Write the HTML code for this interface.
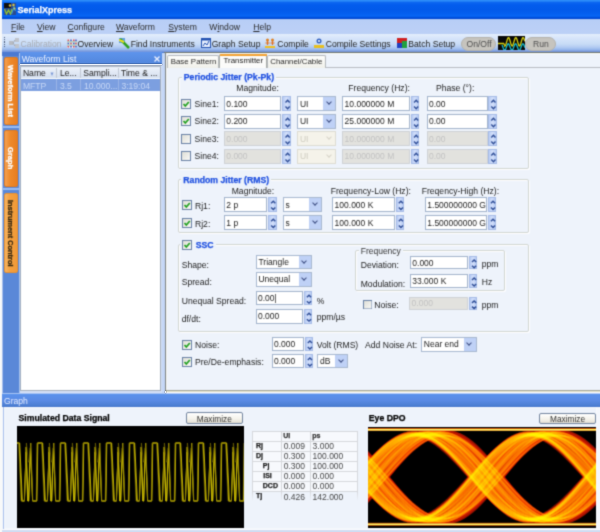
<!DOCTYPE html><html><head><meta charset="utf-8"><style>
*{box-sizing:border-box;margin:0;padding:0}
html,body{width:600px;height:532px;overflow:hidden;background:#eef3fb;font-family:"Liberation Sans",sans-serif;font-size:8.5px;color:#222;position:relative}
.a{position:absolute}
.t{position:absolute;white-space:nowrap;line-height:10px;font-size:8.5px;color:#333}
.tb{position:absolute;background:#fff;border:1px solid #a3b4cc}
.tb span{position:absolute;left:1.3px;line-height:10px;font-size:8.5px;color:#222;white-space:nowrap}
.tb.dis{background:#e2e2de;border-color:#cfd2d6}
.tb.dis span{color:#c2c2c2}
.sp{position:absolute;background:linear-gradient(90deg,#b8ccf4,#d4e0fa 50%,#b8ccf4);border:1px solid #a6bbe6}
.cb{position:absolute;background:#fff;border:1px solid #a8b8d0}
.cb span{position:absolute;left:1.8px;line-height:10px;font-size:8.5px;color:#222;white-space:nowrap}
.cb i{position:absolute;right:0;top:0;width:12px;background:#bfd1f6}
.cb i:after{content:"";position:absolute;left:3.5px;top:3px;width:3px;height:3px;border-right:1.5px solid #3c4c80;border-bottom:1.5px solid #3c4c80;transform:rotate(45deg)}
.cb.dis{background:#f5f3ea;border-color:#dedcd2}
.cb.dis span{color:#cfcdc0}
.cb.dis i{background:#f5f3ea}
.cb.dis i:after{border-color:#d6d4c8}
.ck{position:absolute;border:1px solid #4b6690;background:linear-gradient(135deg,#dcdcd6,#f8f8f6)}
.ck.on:after{content:"";position:absolute;left:2.5px;top:0.5px;width:2.5px;height:5px;border-right:2px solid #22a022;border-bottom:2px solid #22a022;transform:rotate(40deg)}
.gb{position:absolute;border:1px solid #d2d6d2;border-radius:2px;box-shadow:inset 1px 1px 0 #fff,1px 1px 0 #fff}
</style></head><body><svg width="0" height="0" style="position:absolute"><filter id="bl" x="0" y="0" width="100%" height="100%" color-interpolation-filters="sRGB"><feConvolveMatrix order="3" kernelMatrix="0.02768 0.11101 0.02768 0.11101 0.44521 0.11101 0.02768 0.11101 0.02768" edgeMode="duplicate" preserveAlpha="true"/></filter></svg><div style="position:absolute;left:0;top:0;width:600px;height:532px;filter:url(#bl)"><div class="a" style="left:0px;top:0px;width:2px;height:532px;background:#f8f9fa"></div>
<div class="a" style="left:2px;top:0px;width:598px;height:19px;background:linear-gradient(#3090fa 0,#2888f8 1px,#0c66f0 2.5px,#035ced 5px,#025aea 10px,#0460f0 14px,#0866f4 16px,#005ae8 17px,#0048d4 18px,#0048d4 19px)"></div>
<svg class="a" style="left:3.5px;top:3px" width="12" height="12"><rect width="12" height="12" fill="#2a4a90"/><rect width="7" height="5" fill="#101010"/><path d="M0.5,6 L2.5,11 L4.5,7 L6.5,11 L8,6" stroke="#90c030" stroke-width="1.3" fill="none"/><path d="M7.5,11 L10,4 L11.5,8" stroke="#40a0d0" stroke-width="1.1" fill="none"/><circle cx="6" cy="2.5" r="1.2" fill="#e0c040"/><circle cx="9.5" cy="2" r="1.2" fill="#d8c848"/><circle cx="10.5" cy="5.5" r="1" fill="#c8d060"/></svg>
<div class="t" style="left:17.5px;top:5.38px;font-size:9px;font-weight:bold;-webkit-text-stroke:0.25px #fff;color:#fff;">SerialXpress</div>
<div class="a" style="left:2px;top:19px;width:598px;height:15px;background:linear-gradient(#a0bcf0 0,#b8cef6 1px,#bcd0f6 100%)"></div>
<div class="t" style="left:11px;top:22.22px;font-size:8.6px;color:#2a2a2a;"><u>F</u>ile</div>
<div class="t" style="left:37px;top:22.22px;font-size:8.6px;color:#2a2a2a;"><u>V</u>iew</div>
<div class="t" style="left:67.5px;top:22.22px;font-size:8.6px;color:#2a2a2a;"><u>C</u>onfigure</div>
<div class="t" style="left:116px;top:22.22px;font-size:8.6px;color:#2a2a2a;"><u>W</u>aveform</div>
<div class="t" style="left:168.3px;top:22.22px;font-size:8.6px;color:#2a2a2a;"><u>S</u>ystem</div>
<div class="t" style="left:209.3px;top:22.22px;font-size:8.6px;color:#2a2a2a;">W<u>i</u>ndow</div>
<div class="t" style="left:253.3px;top:22.22px;font-size:8.6px;color:#2a2a2a;"><u>H</u>elp</div>
<div class="a" style="left:2px;top:34px;width:598px;height:18px;background:linear-gradient(#e4eefc 0,#d6e4fa 25%,#c8dcf6 55%,#b4ccf2 72%,#98b8ec 86%,#7898dc 96%)"></div>
<div class="a" style="left:2px;top:52px;width:162px;height:4px;background:#4c7ad2"></div>
<div class="a" style="left:164px;top:52px;width:436px;height:1px;background:#6c7470"></div>
<div class="a" style="left:165px;top:53px;width:435px;height:1px;background:#fafaf4"></div>
<div class="a" style="left:4px;top:37.0px;width:1.2px;height:1.2px;background:#4a5a7a"></div>
<div class="a" style="left:4px;top:39.2px;width:1.2px;height:1.2px;background:#4a5a7a"></div>
<div class="a" style="left:4px;top:41.4px;width:1.2px;height:1.2px;background:#4a5a7a"></div>
<div class="a" style="left:4px;top:43.6px;width:1.2px;height:1.2px;background:#4a5a7a"></div>
<div class="a" style="left:4px;top:45.8px;width:1.2px;height:1.2px;background:#4a5a7a"></div>
<svg class="a" style="left:9px;top:38px" width="11" height="10"><rect x="0" y="3" width="4" height="4" fill="#b8bcc4"/><rect x="6" y="0" width="4" height="4" fill="#c0c4cc"/><rect x="6" y="6" width="4" height="4" fill="#c0c4cc"/><path d="M4,5 L6,2 M4,5 L6,8" stroke="#a0a4ac"/></svg>
<div class="t" style="left:20.5px;top:38.92px;font-size:8.6px;color:#a8acb4;">Calibration</div>
<svg class="a" style="left:66.5px;top:38.5px" width="10" height="9"><rect width="10" height="9" fill="#eef0f6"/><g fill="#d04858"><rect x="0.5" y="0.5" width="1.6" height="1.6"/><rect x="6" y="0.5" width="1.6" height="1.6"/><rect x="3.2" y="3.7" width="1.6" height="1.6"/><rect x="8.2" y="3.7" width="1.6" height="1.6"/><rect x="0.5" y="6.9" width="1.6" height="1.6"/><rect x="6" y="6.9" width="1.6" height="1.6"/></g><g fill="#4058c8"><rect x="3.2" y="0.5" width="1.6" height="1.6"/><rect x="8.2" y="0.5" width="1.6" height="1.6"/><rect x="0.5" y="3.7" width="1.6" height="1.6"/><rect x="6" y="3.7" width="1.6" height="1.6"/><rect x="3.2" y="6.9" width="1.6" height="1.6"/><rect x="8.2" y="6.9" width="1.6" height="1.6"/></g><path d="M0,2.9h10M0,6.1h10" stroke="#50a070" stroke-width="0.6"/></svg>
<div class="t" style="left:77.5px;top:38.92px;font-size:8.6px;color:#222;">Overview</div>
<svg class="a" style="left:119px;top:37.5px" width="11" height="11"><rect x="0" y="0" width="6" height="5" fill="#60a0e0"/><path d="M1,1 L10,10" stroke="#30a020" stroke-width="2.5"/><path d="M0,2 L5,4" stroke="#f0e020" stroke-width="2"/></svg>
<div class="t" style="left:130.7px;top:38.92px;font-size:8.6px;color:#222;">Find Instruments</div>
<svg class="a" style="left:200.7px;top:38px" width="10" height="10"><rect width="10" height="10" fill="#2050b0"/><rect x="1" y="2.5" width="8" height="6.5" fill="#e8f0ff"/><path d="M2,8 L4,5 L6,7 L8,3" stroke="#2050b0" stroke-width="1" fill="none"/></svg>
<div class="t" style="left:211.7px;top:38.92px;font-size:8.6px;color:#222;">Graph Setup</div>
<svg class="a" style="left:265px;top:38px" width="10" height="10"><circle cx="2.5" cy="2" r="1.5" fill="#e08020"/><circle cx="7.5" cy="2" r="1.5" fill="#e08020"/><path d="M2.5,3 L2.5,7 M0.5,5 L4.5,5 M7.5,3 L7.5,7 M5.5,5 L9.5,5" stroke="#e07020" stroke-width="1.2"/><rect x="0" y="8" width="10" height="2" fill="#f0c020"/></svg>
<div class="t" style="left:277.3px;top:38.92px;font-size:8.6px;color:#222;">Compile</div>
<svg class="a" style="left:314.3px;top:37.5px" width="10" height="11"><circle cx="5" cy="3" r="2.5" fill="#3060c0"/><rect x="0" y="7" width="10" height="3" fill="#e8c020"/><circle cx="5" cy="3" r="1" fill="#fff"/></svg>
<div class="t" style="left:325.7px;top:38.92px;font-size:8.6px;color:#222;">Compile Settings</div>
<svg class="a" style="left:396.7px;top:38px" width="10" height="10"><rect width="10" height="10" fill="#d02020"/><rect x="0" y="5" width="5" height="5" fill="#2040c0"/><rect x="5" y="3" width="5" height="7" fill="#20a040"/></svg>
<div class="t" style="left:408.3px;top:38.92px;font-size:8.6px;color:#222;">Batch Setup</div>
<div class="a" style="left:461.3px;top:36.5px;width:35px;height:14px;background:#c6c4be;border-radius:7px;border:1px solid #b4b2ac"></div>
<div class="t" style="left:466.5px;top:38.92px;font-size:8.6px;color:#505050;">On/Off</div>
<svg class="a" style="left:497.5px;top:36px" width="27" height="14"><rect width="27" height="14" fill="#080808"/><path d="M0,7.5 L5.5,7.5 L6.8,9.5 L6.8,10.0 L7.3,9.7 L7.8,8.7 L8.3,7.1 L8.8,5.3 L9.3,3.6 L9.8,2.3 L10.3,1.7 L10.8,1.7 L11.3,2.6 L11.8,4.0 L12.3,5.7 L12.8,7.5 L13.3,8.9 L13.8,9.8 L14.3,10.0 L14.8,9.4 L15.3,8.1 L15.8,6.4 L16.3,4.6 L16.8,3.1 L17.3,2.0 L17.8,1.6 L18.3,2.0 L18.8,3.1 L19.3,4.6 L19.8,6.4 L20.3,8.1 L20.8,9.4 L21.3,10.0 L21.8,9.8 L22.3,8.9 L22.8,7.5 L23.3,5.7 L23.8,4.0 L24.3,2.6 L24.8,1.7 L25.3,1.7 L25.8,2.3 L26.3,3.6 L26.8,5.3" stroke="#d8d010" stroke-width="1.3" fill="none"/><path d="M4.0,8.9 L4.5,10.1 L5.0,11.5 L5.5,12.8 L6.0,13.7 L6.5,14.2 L7.0,14.1 L7.5,13.4 L8.0,12.3 L8.5,10.9 L9.0,9.6 L9.5,8.5 L10.0,7.9 L10.5,7.8 L11.0,8.4 L11.5,9.4 L12.0,10.7 L12.5,12.0 L13.0,13.2 L13.5,14.0 L14.0,14.2 L14.5,13.8 L15.0,13.0 L15.5,11.8 L16.0,10.4 L16.5,9.1 L17.0,8.2 L17.5,7.8 L18.0,8.0 L18.5,8.7 L19.0,9.9 L19.5,11.2 L20.0,12.5 L20.5,13.6 L21.0,14.1 L21.5,14.1 L22.0,13.6 L22.5,12.5 L23.0,11.2 L23.5,9.9 L24.0,8.7 L24.5,8.0 L25.0,7.8 L25.5,8.2 L26.0,9.1 L26.5,10.4 L27.0,11.8" stroke="#18c0d0" stroke-width="1.3" fill="none"/></svg>
<div class="a" style="left:525px;top:36.5px;width:31.3px;height:14px;background:#c6c4be;border-radius:7px;border:1px solid #b4b2ac"></div>
<div class="t" style="left:533px;top:38.92px;font-size:8.6px;color:#505050;">Run</div>
<div class="a" style="left:2px;top:56px;width:17px;height:337px;background:#5a88d8"></div>
<div class="a" style="left:2px;top:56px;width:1px;height:337px;background:#a8c0ec"></div>
<div class="a" style="left:19px;top:53px;width:1px;height:340px;background:#a4c2f2"></div>
<div class="a" style="left:4px;top:56.8px;width:13.5px;height:68.4px;background:linear-gradient(90deg,#f4a050,#ee8a2c 40%,#e87e20);border-radius:2px;border:1px solid #e07a20"></div>
<div class="a" style="left:4px;top:56.8px;width:13.5px;height:68.4px;writing-mode:vertical-rl;display:flex;align-items:center;justify-content:center;font-size:7.6px;font-weight:bold;-webkit-text-stroke:0.3px #fff;color:#fff;line-height:13px;white-space:nowrap">Waveform List</div>
<div class="a" style="left:2px;top:126px;width:17px;height:2px;background:#98bcf2"></div>
<div class="a" style="left:4px;top:129.8px;width:13.5px;height:57.19999999999999px;background:linear-gradient(90deg,#f4a050,#ee8a2c 40%,#e87e20);border-radius:2px;border:1px solid #e07a20"></div>
<div class="a" style="left:4px;top:129.8px;width:13.5px;height:57.19999999999999px;writing-mode:vertical-rl;display:flex;align-items:center;justify-content:center;font-size:7.6px;font-weight:bold;-webkit-text-stroke:0.3px #fff;color:#fff;line-height:13px;white-space:nowrap">Graph</div>
<div class="a" style="left:2px;top:188px;width:17px;height:2px;background:#98bcf2"></div>
<div class="a" style="left:4px;top:192.5px;width:13.5px;height:80.80000000000001px;background:linear-gradient(90deg,#f8b460,#f4a040 40%,#f09a38);border-radius:2px;border:1px solid #e89030"></div>
<div class="a" style="left:4px;top:192.5px;width:13.5px;height:80.80000000000001px;writing-mode:vertical-rl;display:flex;align-items:center;justify-content:center;font-size:7.4px;font-weight:bold;-webkit-text-stroke:0.3px #3a2a10;color:#3a2a10;line-height:13px;white-space:nowrap">Instrument Control</div>
<div class="a" style="left:20px;top:52px;width:142px;height:12px;background:linear-gradient(#5e94ec,#5286dc)"></div>
<div class="t" style="left:21.7px;top:54.02px;font-size:8.6px;color:#eef3ff;">Waveform List</div>
<svg class="a" style="left:154px;top:55.5px" width="6" height="6"><path d="M0.5,0.5 L5.5,5.5 M5.5,0.5 L0.5,5.5" stroke="#e8eeff" stroke-width="1.4"/></svg>
<div class="a" style="left:20px;top:64.5px;width:142px;height:328.5px;background:#d4e0f6"></div>
<div class="a" style="left:20.3px;top:65.5px;width:140.5px;height:325.5px;background:#fff;border:1px solid #a4aebc"></div>
<div class="a" style="left:21.3px;top:66.5px;width:138.5px;height:11.5px;background:linear-gradient(#eef3fb,#d4deee)"></div>
<div class="a" style="left:55.7px;top:67.5px;width:1px;height:10px;background:#c0c8d4"></div>
<div class="a" style="left:80.4px;top:67.5px;width:1px;height:10px;background:#c0c8d4"></div>
<div class="a" style="left:117.8px;top:67.5px;width:1px;height:10px;background:#c0c8d4"></div>
<div class="t" style="left:22.9px;top:68.32px;font-size:8.6px;color:#222;">Name</div>
<svg class="a" style="left:49.5px;top:71.5px" width="4" height="5"><path d="M0.5,0.5 L3.5,0.5 L2,4z" fill="#7c9ad8"/></svg>
<div class="t" style="left:59.9px;top:68.32px;font-size:8.6px;color:#222;">Le...</div>
<div class="t" style="left:83.3px;top:68.32px;font-size:8.6px;color:#222;">Sampli...</div>
<div class="t" style="left:121px;top:68.32px;font-size:8.6px;color:#222;">Time &amp; ...</div>
<div class="a" style="left:21.3px;top:78.5px;width:138.5px;height:12px;background:#7c9fe0"></div>
<div class="a" style="left:55.7px;top:79px;width:1px;height:11px;background:#9ab4e6"></div>
<div class="a" style="left:80.4px;top:79px;width:1px;height:11px;background:#9ab4e6"></div>
<div class="a" style="left:117.8px;top:79px;width:1px;height:11px;background:#9ab4e6"></div>
<div class="t" style="left:22.9px;top:80.62px;font-size:8.6px;color:#c8d8f6;">MFTP</div>
<div class="t" style="left:59.9px;top:80.62px;font-size:8.6px;color:#c8d8f6;">3.5</div>
<div class="t" style="left:84px;top:80.62px;font-size:8.6px;color:#c8d8f6;">10.000...</div>
<div class="t" style="left:121.4px;top:80.62px;font-size:8.6px;color:#c8d8f6;">3:19:04</div>
<div class="a" style="left:162px;top:53px;width:2.5px;height:340px;background:#c4d6f6"></div>
<div class="a" style="left:164.5px;top:52px;width:1px;height:339px;background:#7c8284"></div>
<div class="a" style="left:165.5px;top:54px;width:434.5px;height:339px;background:#eef3fb"></div>
<div class="a" style="left:166.5px;top:67px;width:433.5px;height:1px;background:#b8bcc2"></div>
<div class="a" style="left:166px;top:53px;width:1px;height:337px;background:#f4f4ee"></div>
<div class="a" style="left:165.5px;top:390px;width:434.5px;height:1px;background:#a4a698"></div>
<div class="a" style="left:165.5px;top:391px;width:434.5px;height:1px;background:#e2e2cc"></div>
<div class="a" style="left:165.5px;top:392px;width:434.5px;height:1px;background:#fafafa"></div>
<div class="a" style="left:167px;top:55px;width:52px;height:12.5px;background:linear-gradient(#fdfdfb,#f0f0ea);border:1px solid #b4b8bc;border-bottom:none;border-radius:2px 2px 0 0"></div>
<div class="t" style="left:170.7px;top:56.76px;font-size:7.9px;color:#2a2a2a;">Base Pattern</div>
<div class="a" style="left:219px;top:54px;width:48px;height:14.3px;background:#fbfbfa;border:1px solid #a8aca8;border-bottom:none;border-radius:2px 2px 0 0"></div>
<div class="a" style="left:219.5px;top:53.8px;width:47px;height:2px;background:#f2a030"></div>
<div class="t" style="left:223.5px;top:56.26px;font-size:7.9px;color:#1a1a1a;">Transmitter</div>
<div class="a" style="left:267px;top:55px;width:58.5px;height:12.5px;background:linear-gradient(#fdfdfb,#f0f0ea);border:1px solid #b4b8bc;border-bottom:none;border-radius:2px 2px 0 0"></div>
<div class="t" style="left:270.2px;top:56.76px;font-size:7.9px;color:#2a2a2a;">Channel/Cable</div>
<div class="gb" style="left:178px;top:77px;width:351px;height:92px"></div>
<div class="t" style="left:181.8px;top:72.29px;font-size:8.7px;font-weight:bold;-webkit-text-stroke:0.25px #1f50e0;color:#1f50e0;"><span style="background:#eef3fb;padding:0 2px">Periodic Jitter (Pk-Pk)</span></div>
<div class="t" style="left:236.3px;top:83.42px;font-size:8.6px;color:#222;">Magnitude:</div>
<div class="t" style="left:348.3px;top:83.42px;font-size:8.6px;color:#222;">Frequency (Hz):</div>
<div class="t" style="left:436px;top:83.42px;font-size:8.6px;color:#222;">Phase (°):</div>
<svg class="a" style="left:181px;top:98.7px" width="10" height="10"><defs><linearGradient id="cg" x1="0" y1="0" x2="1" y2="1"><stop offset="0" stop-color="#dcdcd4"/><stop offset="1" stop-color="#fafaf8"/></linearGradient></defs><rect x="0.5" y="0.5" width="9" height="9" fill="url(#cg)" stroke="#6a82a6" stroke-width="1"/><path d="M2.50,5.00 L4.30,7.00 L7.80,3.00" stroke="#1f9f1f" stroke-width="1.7" fill="none"/></svg>
<div class="t" style="left:194.5px;top:98.82px;font-size:8.6px;color:#222;">Sine1:</div>
<div class="tb" style="left:224px;top:96px;width:57.3px;height:15px"><span style="top:1.5px">0.100</span></div>
<div class="sp" style="left:281.5px;top:96px;width:9.2px;height:15px"><svg width="9.2" height="15" style="position:absolute;left:0;top:0"><path d="M2.50,5.40 L4.60,3.30 L6.70,5.40 M2.50,9.60 L4.60,11.70 L6.70,9.60" stroke="#2d4c96" stroke-width="1.4" fill="none"/></svg></div>
<div class="cb" style="left:297.1px;top:96px;width:39.4px;height:15px"><span style="top:1.5px">UI</span><i style="height:13px"></i></div>
<div class="tb" style="left:342.3px;top:96px;width:67.7px;height:15px"><span style="top:1.5px">10.000000 M</span></div>
<div class="sp" style="left:410.5px;top:96px;width:8.3px;height:15px"><svg width="8.3" height="15" style="position:absolute;left:0;top:0"><path d="M2.05,5.40 L4.15,3.30 L6.25,5.40 M2.05,9.60 L4.15,11.70 L6.25,9.60" stroke="#2d4c96" stroke-width="1.4" fill="none"/></svg></div>
<div class="tb" style="left:426.7px;top:96px;width:61px;height:15px"><span style="top:1.5px">0.00</span></div>
<div class="sp" style="left:488.3px;top:96px;width:8.8px;height:15px"><svg width="8.8" height="15" style="position:absolute;left:0;top:0"><path d="M2.30,5.40 L4.40,3.30 L6.50,5.40 M2.30,9.60 L4.40,11.70 L6.50,9.60" stroke="#2d4c96" stroke-width="1.4" fill="none"/></svg></div>
<svg class="a" style="left:181px;top:116.3px" width="10" height="10"><defs><linearGradient id="cg" x1="0" y1="0" x2="1" y2="1"><stop offset="0" stop-color="#dcdcd4"/><stop offset="1" stop-color="#fafaf8"/></linearGradient></defs><rect x="0.5" y="0.5" width="9" height="9" fill="url(#cg)" stroke="#6a82a6" stroke-width="1"/><path d="M2.50,5.00 L4.30,7.00 L7.80,3.00" stroke="#1f9f1f" stroke-width="1.7" fill="none"/></svg>
<div class="t" style="left:194.5px;top:116.42px;font-size:8.6px;color:#222;">Sine2:</div>
<div class="tb" style="left:224px;top:113.6px;width:57.3px;height:15px"><span style="top:1.5px">0.200</span></div>
<div class="sp" style="left:281.5px;top:113.6px;width:9.2px;height:15px"><svg width="9.2" height="15" style="position:absolute;left:0;top:0"><path d="M2.50,5.40 L4.60,3.30 L6.70,5.40 M2.50,9.60 L4.60,11.70 L6.70,9.60" stroke="#2d4c96" stroke-width="1.4" fill="none"/></svg></div>
<div class="cb" style="left:297.1px;top:113.6px;width:39.4px;height:15px"><span style="top:1.5px">UI</span><i style="height:13px"></i></div>
<div class="tb" style="left:342.3px;top:113.6px;width:67.7px;height:15px"><span style="top:1.5px">25.000000 M</span></div>
<div class="sp" style="left:410.5px;top:113.6px;width:8.3px;height:15px"><svg width="8.3" height="15" style="position:absolute;left:0;top:0"><path d="M2.05,5.40 L4.15,3.30 L6.25,5.40 M2.05,9.60 L4.15,11.70 L6.25,9.60" stroke="#2d4c96" stroke-width="1.4" fill="none"/></svg></div>
<div class="tb" style="left:426.7px;top:113.6px;width:61px;height:15px"><span style="top:1.5px">0.00</span></div>
<div class="sp" style="left:488.3px;top:113.6px;width:8.8px;height:15px"><svg width="8.8" height="15" style="position:absolute;left:0;top:0"><path d="M2.30,5.40 L4.40,3.30 L6.50,5.40 M2.30,9.60 L4.40,11.70 L6.50,9.60" stroke="#2d4c96" stroke-width="1.4" fill="none"/></svg></div>
<svg class="a" style="left:181px;top:133.89999999999998px" width="10" height="10"><defs><linearGradient id="cg" x1="0" y1="0" x2="1" y2="1"><stop offset="0" stop-color="#dcdcd4"/><stop offset="1" stop-color="#fafaf8"/></linearGradient></defs><rect x="0.5" y="0.5" width="9" height="9" fill="url(#cg)" stroke="#6a82a6" stroke-width="1"/></svg>
<div class="t" style="left:194.5px;top:134.02px;font-size:8.6px;color:#222;">Sine3:</div>
<div class="tb dis" style="left:224px;top:131.2px;width:57.3px;height:15px"><span style="top:1.5px">0.000</span></div>
<div class="sp" style="left:281.5px;top:131.2px;width:9.2px;height:15px"><svg width="9.2" height="15" style="position:absolute;left:0;top:0"><path d="M2.50,5.40 L4.60,3.30 L6.70,5.40 M2.50,9.60 L4.60,11.70 L6.70,9.60" stroke="#2d4c96" stroke-width="1.4" fill="none"/></svg></div>
<div class="cb dis" style="left:297.1px;top:131.2px;width:39.4px;height:15px"><span style="top:1.5px">UI</span><i style="height:13px"></i></div>
<div class="tb dis" style="left:342.3px;top:131.2px;width:67.7px;height:15px"><span style="top:1.5px">10.000000 M</span></div>
<div class="sp" style="left:410.5px;top:131.2px;width:8.3px;height:15px"><svg width="8.3" height="15" style="position:absolute;left:0;top:0"><path d="M2.05,5.40 L4.15,3.30 L6.25,5.40 M2.05,9.60 L4.15,11.70 L6.25,9.60" stroke="#2d4c96" stroke-width="1.4" fill="none"/></svg></div>
<div class="tb dis" style="left:426.7px;top:131.2px;width:61px;height:15px"><span style="top:1.5px">0.00</span></div>
<div class="sp" style="left:488.3px;top:131.2px;width:8.8px;height:15px"><svg width="8.8" height="15" style="position:absolute;left:0;top:0"><path d="M2.30,5.40 L4.40,3.30 L6.50,5.40 M2.30,9.60 L4.40,11.70 L6.50,9.60" stroke="#2d4c96" stroke-width="1.4" fill="none"/></svg></div>
<svg class="a" style="left:181px;top:151.29999999999998px" width="10" height="10"><defs><linearGradient id="cg" x1="0" y1="0" x2="1" y2="1"><stop offset="0" stop-color="#dcdcd4"/><stop offset="1" stop-color="#fafaf8"/></linearGradient></defs><rect x="0.5" y="0.5" width="9" height="9" fill="url(#cg)" stroke="#6a82a6" stroke-width="1"/></svg>
<div class="t" style="left:194.5px;top:151.42px;font-size:8.6px;color:#222;">Sine4:</div>
<div class="tb dis" style="left:224px;top:148.6px;width:57.3px;height:15px"><span style="top:1.5px">0.000</span></div>
<div class="sp" style="left:281.5px;top:148.6px;width:9.2px;height:15px"><svg width="9.2" height="15" style="position:absolute;left:0;top:0"><path d="M2.50,5.40 L4.60,3.30 L6.70,5.40 M2.50,9.60 L4.60,11.70 L6.70,9.60" stroke="#2d4c96" stroke-width="1.4" fill="none"/></svg></div>
<div class="cb dis" style="left:297.1px;top:148.6px;width:39.4px;height:15px"><span style="top:1.5px">UI</span><i style="height:13px"></i></div>
<div class="tb dis" style="left:342.3px;top:148.6px;width:67.7px;height:15px"><span style="top:1.5px">10.000000 M</span></div>
<div class="sp" style="left:410.5px;top:148.6px;width:8.3px;height:15px"><svg width="8.3" height="15" style="position:absolute;left:0;top:0"><path d="M2.05,5.40 L4.15,3.30 L6.25,5.40 M2.05,9.60 L4.15,11.70 L6.25,9.60" stroke="#2d4c96" stroke-width="1.4" fill="none"/></svg></div>
<div class="tb dis" style="left:426.7px;top:148.6px;width:61px;height:15px"><span style="top:1.5px">0.00</span></div>
<div class="sp" style="left:488.3px;top:148.6px;width:8.8px;height:15px"><svg width="8.8" height="15" style="position:absolute;left:0;top:0"><path d="M2.30,5.40 L4.40,3.30 L6.50,5.40 M2.30,9.60 L4.40,11.70 L6.50,9.60" stroke="#2d4c96" stroke-width="1.4" fill="none"/></svg></div>
<div class="gb" style="left:178px;top:179px;width:351px;height:54px"></div>
<div class="t" style="left:181.3px;top:174.99px;font-size:8.7px;font-weight:bold;-webkit-text-stroke:0.25px #1f50e0;color:#1f50e0;"><span style="background:#eef3fb;padding:0 2px">Random Jitter (RMS)</span></div>
<div class="t" style="left:231.7px;top:185.52px;font-size:8.6px;color:#222;">Magnitude:</div>
<div class="t" style="left:330.7px;top:185.52px;font-size:8.6px;color:#222;">Frequency-Low (Hz):</div>
<div class="t" style="left:421.7px;top:185.52px;font-size:8.6px;color:#222;">Freqency-High (Hz):</div>
<svg class="a" style="left:182px;top:200.4px" width="10" height="10"><defs><linearGradient id="cg" x1="0" y1="0" x2="1" y2="1"><stop offset="0" stop-color="#dcdcd4"/><stop offset="1" stop-color="#fafaf8"/></linearGradient></defs><rect x="0.5" y="0.5" width="9" height="9" fill="url(#cg)" stroke="#6a82a6" stroke-width="1"/><path d="M2.50,5.00 L4.30,7.00 L7.80,3.00" stroke="#1f9f1f" stroke-width="1.7" fill="none"/></svg>
<div class="t" style="left:195px;top:200.92px;font-size:8.6px;color:#222;">Rj1:</div>
<div class="tb" style="left:224px;top:197.4px;width:43px;height:14.8px"><span style="top:1.4px">2 p</span></div>
<div class="sp" style="left:268.2px;top:197.4px;width:8.5px;height:14.8px"><svg width="8.5" height="14.8" style="position:absolute;left:0;top:0"><path d="M2.15,5.33 L4.25,3.26 L6.35,5.33 M2.15,9.47 L4.25,11.54 L6.35,9.47" stroke="#2d4c96" stroke-width="1.4" fill="none"/></svg></div>
<div class="cb" style="left:282.7px;top:197.4px;width:39.6px;height:14.8px"><span style="top:1.4px">s</span><i style="height:12.8px"></i></div>
<div class="tb" style="left:332.3px;top:197.4px;width:62.8px;height:14.8px"><span style="top:1.4px">100.000 K</span></div>
<div class="sp" style="left:396px;top:197.4px;width:7.8px;height:14.8px"><svg width="7.8" height="14.8" style="position:absolute;left:0;top:0"><path d="M1.80,5.33 L3.90,3.26 L6.00,5.33 M1.80,9.47 L3.90,11.54 L6.00,9.47" stroke="#2d4c96" stroke-width="1.4" fill="none"/></svg></div>
<div class="tb" style="left:425px;top:197.4px;width:61.8px;height:14.8px"><span style="top:1.4px">1.500000000 G</span></div>
<div class="sp" style="left:488.2px;top:197.4px;width:8px;height:14.8px"><svg width="8" height="14.8" style="position:absolute;left:0;top:0"><path d="M1.90,5.33 L4.00,3.26 L6.10,5.33 M1.90,9.47 L4.00,11.54 L6.10,9.47" stroke="#2d4c96" stroke-width="1.4" fill="none"/></svg></div>
<svg class="a" style="left:182px;top:218.2px" width="10" height="10"><defs><linearGradient id="cg" x1="0" y1="0" x2="1" y2="1"><stop offset="0" stop-color="#dcdcd4"/><stop offset="1" stop-color="#fafaf8"/></linearGradient></defs><rect x="0.5" y="0.5" width="9" height="9" fill="url(#cg)" stroke="#6a82a6" stroke-width="1"/><path d="M2.50,5.00 L4.30,7.00 L7.80,3.00" stroke="#1f9f1f" stroke-width="1.7" fill="none"/></svg>
<div class="t" style="left:195px;top:218.72px;font-size:8.6px;color:#222;">Rj2:</div>
<div class="tb" style="left:224px;top:215.2px;width:43px;height:14.8px"><span style="top:1.4px">1 p</span></div>
<div class="sp" style="left:268.2px;top:215.2px;width:8.5px;height:14.8px"><svg width="8.5" height="14.8" style="position:absolute;left:0;top:0"><path d="M2.15,5.33 L4.25,3.26 L6.35,5.33 M2.15,9.47 L4.25,11.54 L6.35,9.47" stroke="#2d4c96" stroke-width="1.4" fill="none"/></svg></div>
<div class="cb" style="left:282.7px;top:215.2px;width:39.6px;height:14.8px"><span style="top:1.4px">s</span><i style="height:12.8px"></i></div>
<div class="tb" style="left:332.3px;top:215.2px;width:62.8px;height:14.8px"><span style="top:1.4px">100.000 K</span></div>
<div class="sp" style="left:396px;top:215.2px;width:7.8px;height:14.8px"><svg width="7.8" height="14.8" style="position:absolute;left:0;top:0"><path d="M1.80,5.33 L3.90,3.26 L6.00,5.33 M1.80,9.47 L3.90,11.54 L6.00,9.47" stroke="#2d4c96" stroke-width="1.4" fill="none"/></svg></div>
<div class="tb" style="left:425px;top:215.2px;width:61.8px;height:14.8px"><span style="top:1.4px">1.500000000 G</span></div>
<div class="sp" style="left:488.2px;top:215.2px;width:8px;height:14.8px"><svg width="8" height="14.8" style="position:absolute;left:0;top:0"><path d="M1.90,5.33 L4.00,3.26 L6.10,5.33 M1.90,9.47 L4.00,11.54 L6.10,9.47" stroke="#2d4c96" stroke-width="1.4" fill="none"/></svg></div>
<div class="gb" style="left:178px;top:244px;width:351px;height:88px"></div>
<div class="a" style="left:180px;top:240px;width:36px;height:9.5px;background:#eef3fb"></div>
<svg class="a" style="left:182.3px;top:239.5px" width="10" height="10"><defs><linearGradient id="cg" x1="0" y1="0" x2="1" y2="1"><stop offset="0" stop-color="#dcdcd4"/><stop offset="1" stop-color="#fafaf8"/></linearGradient></defs><rect x="0.5" y="0.5" width="9" height="9" fill="url(#cg)" stroke="#6a82a6" stroke-width="1"/><path d="M2.50,5.00 L4.30,7.00 L7.80,3.00" stroke="#1f9f1f" stroke-width="1.7" fill="none"/></svg>
<div class="t" style="left:195.7px;top:239.99px;font-size:8.7px;font-weight:bold;-webkit-text-stroke:0.25px #1f50e0;color:#1f50e0;">SSC</div>
<div class="t" style="left:181.7px;top:260.22px;font-size:8.6px;color:#222;">Shape:</div>
<div class="cb" style="left:255.7px;top:255px;width:56px;height:14.3px"><span style="top:1.2px">Triangle</span><i style="height:12.3px"></i></div>
<div class="t" style="left:181.7px;top:276.82px;font-size:8.6px;color:#222;">Spread:</div>
<div class="cb" style="left:255.7px;top:272.3px;width:56px;height:14.3px"><span style="top:1.2px">Unequal</span><i style="height:12.3px"></i></div>
<div class="t" style="left:181.7px;top:295.82px;font-size:8.6px;color:#222;">Unequal Spread:</div>
<div class="tb" style="left:255.7px;top:290.7px;width:47.8px;height:14.3px"><span style="top:1.2px">0.00|</span></div>
<div class="sp" style="left:304.3px;top:290.7px;width:8px;height:14.3px"><svg width="8" height="14.3" style="position:absolute;left:0;top:0"><path d="M1.90,5.15 L4.00,3.15 L6.10,5.15 M1.90,9.15 L4.00,11.15 L6.10,9.15" stroke="#2d4c96" stroke-width="1.4" fill="none"/></svg></div>
<div class="t" style="left:316.7px;top:295.82px;font-size:8.6px;color:#222;">%</div>
<div class="t" style="left:181.7px;top:313.52px;font-size:8.6px;color:#222;">df/dt:</div>
<div class="tb" style="left:255.7px;top:309.3px;width:47.8px;height:14.3px"><span style="top:1.2px">0.000</span></div>
<div class="sp" style="left:304.3px;top:309.3px;width:8px;height:14.3px"><svg width="8" height="14.3" style="position:absolute;left:0;top:0"><path d="M1.90,5.15 L4.00,3.15 L6.10,5.15 M1.90,9.15 L4.00,11.15 L6.10,9.15" stroke="#2d4c96" stroke-width="1.4" fill="none"/></svg></div>
<div class="t" style="left:316.7px;top:312.22px;font-size:8.6px;color:#222;">ppm/µs</div>
<div class="gb" style="left:355px;top:250px;width:150px;height:41px"></div>
<div class="t" style="left:358.7px;top:245.75px;font-size:8.5px;color:#333;"><span style="background:#eef3fb;padding:0 2px">Frequency</span></div>
<div class="t" style="left:360.7px;top:260.22px;font-size:8.6px;color:#222;">Deviation:</div>
<div class="tb" style="left:410px;top:255.7px;width:58.3px;height:13.8px"><span style="top:0.9px">0.000</span></div>
<div class="sp" style="left:469.3px;top:255.7px;width:8.2px;height:13.8px"><svg width="8.2" height="13.8" style="position:absolute;left:0;top:0"><path d="M2.00,4.97 L4.10,3.04 L6.20,4.97 M2.00,8.83 L4.10,10.76 L6.20,8.83" stroke="#2d4c96" stroke-width="1.4" fill="none"/></svg></div>
<div class="t" style="left:481.7px;top:258.62px;font-size:8.6px;color:#222;">ppm</div>
<div class="t" style="left:360.7px;top:278.52px;font-size:8.6px;color:#222;">Modulation:</div>
<div class="tb" style="left:410px;top:274.3px;width:58.3px;height:14px"><span style="top:1.0px">33.000 K</span></div>
<div class="sp" style="left:469.3px;top:274.3px;width:8.2px;height:14px"><svg width="8.2" height="14" style="position:absolute;left:0;top:0"><path d="M2.00,5.04 L4.10,3.08 L6.20,5.04 M2.00,8.96 L4.10,10.92 L6.20,8.96" stroke="#2d4c96" stroke-width="1.4" fill="none"/></svg></div>
<div class="t" style="left:481.7px;top:276.72px;font-size:8.6px;color:#222;">Hz</div>
<svg class="a" style="left:362.7px;top:299.7px" width="9.5" height="9.5"><defs><linearGradient id="cg" x1="0" y1="0" x2="1" y2="1"><stop offset="0" stop-color="#dcdcd4"/><stop offset="1" stop-color="#fafaf8"/></linearGradient></defs><rect x="0.5" y="0.5" width="8.5" height="8.5" fill="url(#cg)" stroke="#6a82a6" stroke-width="1"/></svg>
<div class="t" style="left:374.3px;top:299.52px;font-size:8.6px;color:#222;">Noise:</div>
<div class="tb dis" style="left:409.3px;top:296.7px;width:59px;height:13.5px"><span style="top:0.8px">0.000</span></div>
<div class="sp" style="left:469.3px;top:296.7px;width:8.2px;height:13.5px"><svg width="8.2" height="13.5" style="position:absolute;left:0;top:0"><path d="M2.00,4.86 L4.10,2.97 L6.20,4.86 M2.00,8.64 L4.10,10.53 L6.20,8.64" stroke="#2d4c96" stroke-width="1.4" fill="none"/></svg></div>
<div class="t" style="left:481.7px;top:299.52px;font-size:8.6px;color:#222;">ppm</div>
<svg class="a" style="left:181.5px;top:339.7px" width="10" height="10"><defs><linearGradient id="cg" x1="0" y1="0" x2="1" y2="1"><stop offset="0" stop-color="#dcdcd4"/><stop offset="1" stop-color="#fafaf8"/></linearGradient></defs><rect x="0.5" y="0.5" width="9" height="9" fill="url(#cg)" stroke="#6a82a6" stroke-width="1"/><path d="M2.50,5.00 L4.30,7.00 L7.80,3.00" stroke="#1f9f1f" stroke-width="1.7" fill="none"/></svg>
<div class="t" style="left:195px;top:340.22px;font-size:8.6px;color:#222;">Noise:</div>
<div class="tb" style="left:271.7px;top:336.7px;width:32.6px;height:14px"><span style="top:1.0px">0.000</span></div>
<div class="sp" style="left:305px;top:336.7px;width:7.8px;height:14px"><svg width="7.8" height="14" style="position:absolute;left:0;top:0"><path d="M1.80,5.04 L3.90,3.08 L6.00,5.04 M1.80,8.96 L3.90,10.92 L6.00,8.96" stroke="#2d4c96" stroke-width="1.4" fill="none"/></svg></div>
<div class="t" style="left:316.7px;top:340.22px;font-size:8.6px;color:#222;">Volt (RMS)</div>
<div class="t" style="left:365px;top:340.22px;font-size:8.6px;color:#222;">Add Noise At:</div>
<div class="cb" style="left:421px;top:337.3px;width:55.7px;height:14.4px"><span style="top:1.2px">Near end</span><i style="height:12.4px"></i></div>
<svg class="a" style="left:181.5px;top:356.7px" width="10" height="10"><defs><linearGradient id="cg" x1="0" y1="0" x2="1" y2="1"><stop offset="0" stop-color="#dcdcd4"/><stop offset="1" stop-color="#fafaf8"/></linearGradient></defs><rect x="0.5" y="0.5" width="9" height="9" fill="url(#cg)" stroke="#6a82a6" stroke-width="1"/><path d="M2.50,5.00 L4.30,7.00 L7.80,3.00" stroke="#1f9f1f" stroke-width="1.7" fill="none"/></svg>
<div class="t" style="left:195px;top:357.22px;font-size:8.6px;color:#222;">Pre/De-emphasis:</div>
<div class="tb" style="left:271.7px;top:354.3px;width:32.6px;height:14px"><span style="top:1.0px">0.000</span></div>
<div class="sp" style="left:305px;top:354.3px;width:7.8px;height:14px"><svg width="7.8" height="14" style="position:absolute;left:0;top:0"><path d="M1.80,5.04 L3.90,3.08 L6.00,5.04 M1.80,8.96 L3.90,10.92 L6.00,8.96" stroke="#2d4c96" stroke-width="1.4" fill="none"/></svg></div>
<div class="cb" style="left:317.3px;top:354.3px;width:31px;height:14px"><span style="top:1.0px">dB</span><i style="height:12px"></i></div>
<div class="a" style="left:2px;top:392.5px;width:164px;height:1.5px;background:#a8c4f4"></div>
<div class="a" style="left:164px;top:393px;width:436px;height:1px;background:#b4ccf8"></div>
<div class="a" style="left:2px;top:394px;width:598px;height:12.5px;background:linear-gradient(#5a92ec,#5a8ae4 50%,#4e80d4 85%,#4676cc)"></div>
<div class="t" style="left:4px;top:395.72px;font-size:8.6px;color:#e4ecff;">Graph</div>
<div class="a" style="left:2px;top:406.5px;width:598px;height:125.5px;background:#f4f7fc"></div>
<div class="a" style="left:4.5px;top:407.5px;width:591.5px;height:120.5px;background:#eef3fb"></div>
<div class="t" style="left:18.5px;top:413.29px;font-size:8.7px;font-weight:bold;-webkit-text-stroke:0.25px #000;color:#000;">Simulated Data Signal</div>
<div class="a" style="left:185.5px;top:412.4px;width:57.5px;height:11.400000000000034px;background:linear-gradient(#fefefe,#f4f2ea 60%,#e2ded2);border:1px solid #7486a0;border-radius:2px"></div>
<div class="t" style="left:194.25px;top:413.72px;font-size:8.3px;color:#333;width:40px;text-align:center">Maximize</div>
<div class="a" style="left:539.2px;top:412.8px;width:56.799999999999955px;height:11.199999999999989px;background:linear-gradient(#fefefe,#f4f2ea 60%,#e2ded2);border:1px solid #7486a0;border-radius:2px"></div>
<div class="t" style="left:547.6px;top:413.92px;font-size:8.3px;color:#333;width:40px;text-align:center">Maximize</div>
<div class="t" style="left:368.8px;top:413.29px;font-size:8.7px;font-weight:bold;-webkit-text-stroke:0.25px #000;color:#000;">Eye DPO</div>
<div class="a" style="left:2.5px;top:406.5px;width:1px;height:125.5px;background:#a8c0ec"></div>
<div class="a" style="left:2px;top:528.5px;width:598px;height:1.5px;background:#fbfcfe"></div>
<div class="a" style="left:2px;top:530px;width:598px;height:2px;background:#d0dcf2"></div>
<div class="a" style="left:596px;top:407px;width:1px;height:121px;background:#f8fafc"></div>
<svg class="a" style="left:17px;top:426px" width="227" height="102"><rect width="227" height="102" fill="#000"/><path d="M-26.50,75.00 L-25.60,17.00 L-20.90,17.00 L-18.40,75.00 L-15.60,75.00 L-13.80,21.00 L-12.00,75.00 L-11.30,75.00 L-9.40,17.00 L-7.40,75.00 L-4.00,75.00 L-3.50,75.00 L-2.60,17.00 L2.10,17.00 L4.60,75.00 L7.40,75.00 L9.20,21.00 L11.00,75.00 L11.70,75.00 L13.60,17.00 L15.60,75.00 L19.00,75.00 L19.50,75.00 L20.40,17.00 L25.10,17.00 L27.60,75.00 L30.40,75.00 L32.20,21.00 L34.00,75.00 L34.70,75.00 L36.60,17.00 L38.60,75.00 L42.00,75.00 L42.50,75.00 L43.40,17.00 L48.10,17.00 L50.60,75.00 L53.40,75.00 L55.20,21.00 L57.00,75.00 L57.70,75.00 L59.60,17.00 L61.60,75.00 L65.00,75.00 L65.50,75.00 L66.40,17.00 L71.10,17.00 L73.60,75.00 L76.40,75.00 L78.20,21.00 L80.00,75.00 L80.70,75.00 L82.60,17.00 L84.60,75.00 L88.00,75.00 L88.50,75.00 L89.40,17.00 L94.10,17.00 L96.60,75.00 L99.40,75.00 L101.20,21.00 L103.00,75.00 L103.70,75.00 L105.60,17.00 L107.60,75.00 L111.00,75.00 L111.50,75.00 L112.40,17.00 L117.10,17.00 L119.60,75.00 L122.40,75.00 L124.20,21.00 L126.00,75.00 L126.70,75.00 L128.60,17.00 L130.60,75.00 L134.00,75.00 L134.50,75.00 L135.40,17.00 L140.10,17.00 L142.60,75.00 L145.40,75.00 L147.20,21.00 L149.00,75.00 L149.70,75.00 L151.60,17.00 L153.60,75.00 L157.00,75.00 L157.50,75.00 L158.40,17.00 L163.10,17.00 L165.60,75.00 L168.40,75.00 L170.20,21.00 L172.00,75.00 L172.70,75.00 L174.60,17.00 L176.60,75.00 L180.00,75.00 L180.50,75.00 L181.40,17.00 L186.10,17.00 L188.60,75.00 L191.40,75.00 L193.20,21.00 L195.00,75.00 L195.70,75.00 L197.60,17.00 L199.60,75.00 L203.00,75.00 L203.50,75.00 L204.40,17.00 L209.10,17.00 L211.60,75.00 L214.40,75.00 L216.20,21.00 L218.00,75.00 L218.70,75.00 L220.60,17.00 L222.60,75.00 L226.00,75.00 L226.50,75.00 L227.40,17.00 L232.10,17.00 L234.60,75.00 L237.40,75.00 L239.20,21.00 L241.00,75.00 L241.70,75.00 L243.60,17.00 L245.60,75.00 L249.00,75.00" stroke="#dccc00" stroke-width="1.0" fill="none" stroke-linejoin="round"/><path d="M-26.10,75.00 L-25.20,17.00 L-20.30,17.00 L-17.60,75.00 L-15.60,75.00 L-14.00,26.00 L-12.30,75.00 L-11.40,75.00 L-9.60,22.00 L-7.40,75.00 L-3.40,75.00 L-3.10,75.00 L-2.20,17.00 L2.70,17.00 L5.40,75.00 L7.40,75.00 L9.00,26.00 L10.70,75.00 L11.60,75.00 L13.40,22.00 L15.60,75.00 L19.60,75.00 L19.90,75.00 L20.80,17.00 L25.70,17.00 L28.40,75.00 L30.40,75.00 L32.00,26.00 L33.70,75.00 L34.60,75.00 L36.40,22.00 L38.60,75.00 L42.60,75.00 L42.90,75.00 L43.80,17.00 L48.70,17.00 L51.40,75.00 L53.40,75.00 L55.00,26.00 L56.70,75.00 L57.60,75.00 L59.40,22.00 L61.60,75.00 L65.60,75.00 L65.90,75.00 L66.80,17.00 L71.70,17.00 L74.40,75.00 L76.40,75.00 L78.00,26.00 L79.70,75.00 L80.60,75.00 L82.40,22.00 L84.60,75.00 L88.60,75.00 L88.90,75.00 L89.80,17.00 L94.70,17.00 L97.40,75.00 L99.40,75.00 L101.00,26.00 L102.70,75.00 L103.60,75.00 L105.40,22.00 L107.60,75.00 L111.60,75.00 L111.90,75.00 L112.80,17.00 L117.70,17.00 L120.40,75.00 L122.40,75.00 L124.00,26.00 L125.70,75.00 L126.60,75.00 L128.40,22.00 L130.60,75.00 L134.60,75.00 L134.90,75.00 L135.80,17.00 L140.70,17.00 L143.40,75.00 L145.40,75.00 L147.00,26.00 L148.70,75.00 L149.60,75.00 L151.40,22.00 L153.60,75.00 L157.60,75.00 L157.90,75.00 L158.80,17.00 L163.70,17.00 L166.40,75.00 L168.40,75.00 L170.00,26.00 L171.70,75.00 L172.60,75.00 L174.40,22.00 L176.60,75.00 L180.60,75.00 L180.90,75.00 L181.80,17.00 L186.70,17.00 L189.40,75.00 L191.40,75.00 L193.00,26.00 L194.70,75.00 L195.60,75.00 L197.40,22.00 L199.60,75.00 L203.60,75.00 L203.90,75.00 L204.80,17.00 L209.70,17.00 L212.40,75.00 L214.40,75.00 L216.00,26.00 L217.70,75.00 L218.60,75.00 L220.40,22.00 L222.60,75.00 L226.60,75.00 L226.90,75.00 L227.80,17.00 L232.70,17.00 L235.40,75.00 L237.40,75.00 L239.00,26.00 L240.70,75.00 L241.60,75.00 L243.40,22.00 L245.60,75.00 L249.60,75.00" stroke="#c8b800" stroke-width="0.9" fill="none" stroke-linejoin="round"/><path d="M-26.80,75.00 L-25.90,17.00 L-21.40,17.00 L-19.00,75.00 L-15.50,75.00 L-13.60,17.00 L-11.60,36.00 L-10.90,36.00 L-9.10,17.00 L-7.20,75.00 L-4.40,75.00 L-3.80,75.00 L-2.90,17.00 L1.60,17.00 L4.00,75.00 L7.50,75.00 L9.40,17.00 L11.40,36.00 L12.10,36.00 L13.90,17.00 L15.80,75.00 L18.60,75.00 L19.20,75.00 L20.10,17.00 L24.60,17.00 L27.00,75.00 L30.50,75.00 L32.40,17.00 L34.40,36.00 L35.10,36.00 L36.90,17.00 L38.80,75.00 L41.60,75.00 L42.20,75.00 L43.10,17.00 L47.60,17.00 L50.00,75.00 L53.50,75.00 L55.40,17.00 L57.40,36.00 L58.10,36.00 L59.90,17.00 L61.80,75.00 L64.60,75.00 L65.20,75.00 L66.10,17.00 L70.60,17.00 L73.00,75.00 L76.50,75.00 L78.40,17.00 L80.40,36.00 L81.10,36.00 L82.90,17.00 L84.80,75.00 L87.60,75.00 L88.20,75.00 L89.10,17.00 L93.60,17.00 L96.00,75.00 L99.50,75.00 L101.40,17.00 L103.40,36.00 L104.10,36.00 L105.90,17.00 L107.80,75.00 L110.60,75.00 L111.20,75.00 L112.10,17.00 L116.60,17.00 L119.00,75.00 L122.50,75.00 L124.40,17.00 L126.40,36.00 L127.10,36.00 L128.90,17.00 L130.80,75.00 L133.60,75.00 L134.20,75.00 L135.10,17.00 L139.60,17.00 L142.00,75.00 L145.50,75.00 L147.40,17.00 L149.40,36.00 L150.10,36.00 L151.90,17.00 L153.80,75.00 L156.60,75.00 L157.20,75.00 L158.10,17.00 L162.60,17.00 L165.00,75.00 L168.50,75.00 L170.40,17.00 L172.40,36.00 L173.10,36.00 L174.90,17.00 L176.80,75.00 L179.60,75.00 L180.20,75.00 L181.10,17.00 L185.60,17.00 L188.00,75.00 L191.50,75.00 L193.40,17.00 L195.40,36.00 L196.10,36.00 L197.90,17.00 L199.80,75.00 L202.60,75.00 L203.20,75.00 L204.10,17.00 L208.60,17.00 L211.00,75.00 L214.50,75.00 L216.40,17.00 L218.40,36.00 L219.10,36.00 L220.90,17.00 L222.80,75.00 L225.60,75.00 L226.20,75.00 L227.10,17.00 L231.60,17.00 L234.00,75.00 L237.50,75.00 L239.40,17.00 L241.40,36.00 L242.10,36.00 L243.90,17.00 L245.80,75.00 L248.60,75.00" stroke="#706400" stroke-width="0.7" fill="none" stroke-linejoin="round"/></svg>
<div class="a" style="left:252px;top:431px;width:105px;height:61px;background:#f7f9fd"></div>
<div class="a" style="left:252px;top:431px;width:105px;height:1px;background:#d6d8dc"></div>
<div class="a" style="left:252px;top:441px;width:105px;height:1px;background:#d6d8dc"></div>
<div class="a" style="left:252px;top:451px;width:105px;height:1px;background:#d6d8dc"></div>
<div class="a" style="left:252px;top:461px;width:105px;height:1px;background:#d6d8dc"></div>
<div class="a" style="left:252px;top:471px;width:105px;height:1px;background:#d6d8dc"></div>
<div class="a" style="left:252px;top:481px;width:105px;height:1px;background:#d6d8dc"></div>
<div class="a" style="left:252px;top:491px;width:105px;height:1px;background:#d6d8dc"></div>
<div class="a" style="left:252px;top:431px;width:1px;height:61px;background:#d6d8dc"></div>
<div class="a" style="left:252px;top:492px;width:1px;height:9px;background:linear-gradient(#d6d8dc,#eef3fb)"></div>
<div class="a" style="left:281px;top:431px;width:1px;height:61px;background:#d6d8dc"></div>
<div class="a" style="left:281px;top:492px;width:1px;height:9px;background:linear-gradient(#d6d8dc,#eef3fb)"></div>
<div class="a" style="left:310px;top:431px;width:1px;height:61px;background:#d6d8dc"></div>
<div class="a" style="left:310px;top:492px;width:1px;height:9px;background:linear-gradient(#d6d8dc,#eef3fb)"></div>
<div class="a" style="left:357px;top:431px;width:1px;height:61px;background:#d6d8dc"></div>
<div class="a" style="left:357px;top:492px;width:1px;height:9px;background:linear-gradient(#d6d8dc,#eef3fb)"></div>
<div class="t" style="left:283.2px;top:431.17px;font-size:7px;font-weight:bold;-webkit-text-stroke:0.25px #333;color:#333;">UI</div>
<div class="t" style="left:312.2px;top:431.17px;font-size:7px;font-weight:bold;-webkit-text-stroke:0.25px #333;color:#333;">ps</div>
<div class="t" style="left:256px;top:441.17px;font-size:7px;font-weight:bold;-webkit-text-stroke:0.25px #1a1a1a;color:#1a1a1a;">Rj</div>
<div class="t" style="left:283.7px;top:441.25px;font-size:8.5px;color:#444;">0.009</div>
<div class="t" style="left:312.6px;top:441.25px;font-size:8.5px;color:#444;">3.000</div>
<div class="t" style="left:256px;top:451.22px;font-size:7px;font-weight:bold;-webkit-text-stroke:0.25px #1a1a1a;color:#1a1a1a;">Dj</div>
<div class="t" style="left:283.7px;top:451.30px;font-size:8.5px;color:#444;">0.300</div>
<div class="t" style="left:312.6px;top:451.30px;font-size:8.5px;color:#444;">100.000</div>
<div class="t" style="left:262.8px;top:461.27px;font-size:7px;font-weight:bold;-webkit-text-stroke:0.25px #1a1a1a;color:#1a1a1a;">Pj</div>
<div class="t" style="left:283.7px;top:461.35px;font-size:8.5px;color:#444;">0.300</div>
<div class="t" style="left:312.6px;top:461.35px;font-size:8.5px;color:#444;">100.000</div>
<div class="t" style="left:263.2px;top:471.32px;font-size:7px;font-weight:bold;-webkit-text-stroke:0.25px #1a1a1a;color:#1a1a1a;">ISI</div>
<div class="t" style="left:283.7px;top:471.40px;font-size:8.5px;color:#444;">0.000</div>
<div class="t" style="left:312.6px;top:471.40px;font-size:8.5px;color:#444;">0.000</div>
<div class="t" style="left:262.8px;top:481.37px;font-size:7px;font-weight:bold;-webkit-text-stroke:0.25px #1a1a1a;color:#1a1a1a;">DCD</div>
<div class="t" style="left:283.7px;top:481.45px;font-size:8.5px;color:#444;">0.000</div>
<div class="t" style="left:312.6px;top:481.45px;font-size:8.5px;color:#444;">0.000</div>
<div class="t" style="left:256px;top:491.42px;font-size:7px;font-weight:bold;-webkit-text-stroke:0.25px #1a1a1a;color:#1a1a1a;">Tj</div>
<div class="t" style="left:283.7px;top:491.50px;font-size:8.5px;color:#444;">0.426</div>
<div class="t" style="left:312.6px;top:491.50px;font-size:8.5px;color:#444;">142.000</div>
<svg class="a" style="left:368px;top:426.5px" width="228" height="101"><rect width="228" height="101" fill="#000"/><g style="isolation:isolate"><path d="M-4.0,56.5 L0.0,51.8 L4.0,47.1 L8.0,42.4 L12.0,37.8 L16.0,33.3 L20.0,29.0 L24.0,25.0 L28.0,21.3 L32.0,17.9 L36.0,14.9 L40.0,12.4 L44.0,10.2 L48.0,8.6 L52.0,7.4 L56.0,6.8 L60.0,6.7 L64.0,7.0 L68.0,7.9 L72.0,9.3 L76.0,11.2 L80.0,13.6 L84.0,16.3 L88.0,19.5 L92.0,23.1 L96.0,26.9 L100.0,31.1 L104.0,35.4 L108.0,40.0 L112.0,44.6 L116.0,49.4 L120.0,54.1 L124.0,58.8 L128.0,63.4 L132.0,67.8 L136.0,72.0 L140.0,75.9 L144.0,79.6 L148.0,82.8 L152.0,85.7 L156.0,88.2 L160.0,90.2 L164.0,91.7 L168.0,92.8 L172.0,93.3 L176.0,93.3 L180.0,92.8 L184.0,91.8 L188.0,90.2 L192.0,88.2 L196.0,85.8 L200.0,82.9 L204.0,79.6 L208.0,76.0 L212.0,72.1 L216.0,67.9 L220.0,63.4 L224.0,58.9 L228.0,54.2 L232.0,49.4" stroke="#d01800" stroke-width="2.4" fill="none" opacity="0.5"/><path d="M-4.0,43.5 L0.0,48.2 L4.0,52.9 L8.0,57.6 L12.0,62.2 L16.0,66.7 L20.0,71.0 L24.0,75.0 L28.0,78.7 L32.0,82.1 L36.0,85.1 L40.0,87.6 L44.0,89.8 L48.0,91.4 L52.0,92.6 L56.0,93.2 L60.0,93.3 L64.0,93.0 L68.0,92.1 L72.0,90.7 L76.0,88.8 L80.0,86.4 L84.0,83.7 L88.0,80.5 L92.0,76.9 L96.0,73.1 L100.0,68.9 L104.0,64.6 L108.0,60.0 L112.0,55.4 L116.0,50.6 L120.0,45.9 L124.0,41.2 L128.0,36.6 L132.0,32.2 L136.0,28.0 L140.0,24.1 L144.0,20.4 L148.0,17.2 L152.0,14.3 L156.0,11.8 L160.0,9.8 L164.0,8.3 L168.0,7.2 L172.0,6.7 L176.0,6.7 L180.0,7.2 L184.0,8.2 L188.0,9.8 L192.0,11.8 L196.0,14.2 L200.0,17.1 L204.0,20.4 L208.0,24.0 L212.0,27.9 L216.0,32.1 L220.0,36.6 L224.0,41.1 L228.0,45.8 L232.0,50.6" stroke="#d01800" stroke-width="2.4" fill="none" opacity="0.5"/><path d="M-4.0,74.2 L0.0,70.3 L4.0,66.0 L8.0,61.6 L12.0,57.0 L16.0,52.4 L20.0,47.7 L24.0,43.1 L28.0,38.5 L32.0,34.1 L36.0,29.8 L40.0,25.8 L44.0,22.1 L48.0,18.8 L52.0,15.8 L56.0,13.2 L60.0,11.0 L64.0,9.3 L68.0,8.1 L72.0,7.4 L76.0,7.2 L80.0,7.5 L84.0,8.3 L88.0,9.7 L92.0,11.5 L96.0,13.7 L100.0,16.4 L104.0,19.5 L108.0,23.0 L112.0,26.7 L116.0,30.8 L120.0,35.1 L124.0,39.5 L128.0,44.1 L132.0,48.8 L136.0,53.4 L140.0,58.1 L144.0,62.6 L148.0,67.0 L152.0,71.2 L156.0,75.1 L160.0,78.7 L164.0,82.0 L168.0,84.9 L172.0,87.4 L176.0,89.5 L180.0,91.0 L184.0,92.1 L188.0,92.7 L192.0,92.8 L196.0,92.3 L200.0,91.4 L204.0,89.9 L208.0,88.0 L212.0,85.7 L216.0,82.9 L220.0,79.7 L224.0,76.1 L228.0,72.3 L232.0,68.2" stroke="#d01800" stroke-width="2.4" fill="none" opacity="0.5"/><path d="M-4.0,25.8 L0.0,29.7 L4.0,34.0 L8.0,38.4 L12.0,43.0 L16.0,47.6 L20.0,52.3 L24.0,56.9 L28.0,61.5 L32.0,65.9 L36.0,70.2 L40.0,74.2 L44.0,77.9 L48.0,81.2 L52.0,84.2 L56.0,86.8 L60.0,89.0 L64.0,90.7 L68.0,91.9 L72.0,92.6 L76.0,92.8 L80.0,92.5 L84.0,91.7 L88.0,90.3 L92.0,88.5 L96.0,86.3 L100.0,83.6 L104.0,80.5 L108.0,77.0 L112.0,73.3 L116.0,69.2 L120.0,64.9 L124.0,60.5 L128.0,55.9 L132.0,51.2 L136.0,46.6 L140.0,41.9 L144.0,37.4 L148.0,33.0 L152.0,28.8 L156.0,24.9 L160.0,21.3 L164.0,18.0 L168.0,15.1 L172.0,12.6 L176.0,10.5 L180.0,9.0 L184.0,7.9 L188.0,7.3 L192.0,7.2 L196.0,7.7 L200.0,8.6 L204.0,10.1 L208.0,12.0 L212.0,14.3 L216.0,17.1 L220.0,20.3 L224.0,23.9 L228.0,27.7 L232.0,31.8" stroke="#d01800" stroke-width="2.4" fill="none" opacity="0.5"/><path d="M-4.0,58.8 L0.0,54.1 L4.0,49.4 L8.0,44.6 L12.0,40.0 L16.0,35.4 L20.0,31.0 L24.0,26.9 L28.0,23.0 L32.0,19.4 L36.0,16.2 L40.0,13.4 L44.0,11.1 L48.0,9.2 L52.0,7.8 L56.0,6.9 L60.0,6.5 L64.0,6.6 L68.0,7.3 L72.0,8.4 L76.0,10.1 L80.0,12.2 L84.0,14.8 L88.0,17.8 L92.0,21.2 L96.0,24.9 L100.0,29.0 L104.0,33.2 L108.0,37.7 L112.0,42.3 L116.0,47.1 L120.0,51.8 L124.0,56.5 L128.0,61.2 L132.0,65.7 L136.0,70.1 L140.0,74.1 L144.0,77.9 L148.0,81.4 L152.0,84.5 L156.0,87.2 L160.0,89.4 L164.0,91.2 L168.0,92.5 L172.0,93.3 L176.0,93.5 L180.0,93.3 L184.0,92.5 L188.0,91.2 L192.0,89.4 L196.0,87.2 L200.0,84.5 L204.0,81.4 L208.0,77.9 L212.0,74.1 L216.0,70.0 L220.0,65.7 L224.0,61.1 L228.0,56.5 L232.0,51.8" stroke="#d01800" stroke-width="2.4" fill="none" opacity="0.5"/><path d="M-4.0,41.2 L0.0,45.9 L4.0,50.6 L8.0,55.4 L12.0,60.0 L16.0,64.6 L20.0,69.0 L24.0,73.1 L28.0,77.0 L32.0,80.6 L36.0,83.8 L40.0,86.6 L44.0,88.9 L48.0,90.8 L52.0,92.2 L56.0,93.1 L60.0,93.5 L64.0,93.4 L68.0,92.7 L72.0,91.6 L76.0,89.9 L80.0,87.8 L84.0,85.2 L88.0,82.2 L92.0,78.8 L96.0,75.1 L100.0,71.0 L104.0,66.8 L108.0,62.3 L112.0,57.7 L116.0,52.9 L120.0,48.2 L124.0,43.5 L128.0,38.8 L132.0,34.3 L136.0,29.9 L140.0,25.9 L144.0,22.1 L148.0,18.6 L152.0,15.5 L156.0,12.8 L160.0,10.6 L164.0,8.8 L168.0,7.5 L172.0,6.7 L176.0,6.5 L180.0,6.7 L184.0,7.5 L188.0,8.8 L192.0,10.6 L196.0,12.8 L200.0,15.5 L204.0,18.6 L208.0,22.1 L212.0,25.9 L216.0,30.0 L220.0,34.3 L224.0,38.9 L228.0,43.5 L232.0,48.2" stroke="#d01800" stroke-width="2.4" fill="none" opacity="0.5"/><path d="M-4.0,45.5 L0.0,40.8 L4.0,36.3 L8.0,31.9 L12.0,27.8 L16.0,23.9 L20.0,20.3 L24.0,17.1 L28.0,14.3 L32.0,11.8 L36.0,9.9 L40.0,8.4 L44.0,7.4 L48.0,7.0 L52.0,7.0 L56.0,7.6 L60.0,8.6 L64.0,10.2 L68.0,12.2 L72.0,14.7 L76.0,17.6 L80.0,20.9 L84.0,24.5 L88.0,28.5 L92.0,32.7 L96.0,37.1 L100.0,41.6 L104.0,46.3 L108.0,51.0 L112.0,55.7 L116.0,60.3 L120.0,64.8 L124.0,69.1 L128.0,73.2 L132.0,77.0 L136.0,80.5 L140.0,83.7 L144.0,86.4 L148.0,88.7 L152.0,90.5 L156.0,91.9 L160.0,92.7 L164.0,93.1 L168.0,92.9 L172.0,92.2 L176.0,91.0 L180.0,89.3 L184.0,87.2 L188.0,84.6 L192.0,81.6 L196.0,78.2 L200.0,74.5 L204.0,70.5 L208.0,66.3 L212.0,61.8 L216.0,57.2 L220.0,52.5 L224.0,47.8 L228.0,43.2 L232.0,38.6" stroke="#d01800" stroke-width="2.4" fill="none" opacity="0.5"/><path d="M-4.0,54.5 L0.0,59.2 L4.0,63.7 L8.0,68.1 L12.0,72.2 L16.0,76.1 L20.0,79.7 L24.0,82.9 L28.0,85.7 L32.0,88.2 L36.0,90.1 L40.0,91.6 L44.0,92.6 L48.0,93.0 L52.0,93.0 L56.0,92.4 L60.0,91.4 L64.0,89.8 L68.0,87.8 L72.0,85.3 L76.0,82.4 L80.0,79.1 L84.0,75.5 L88.0,71.5 L92.0,67.3 L96.0,62.9 L100.0,58.4 L104.0,53.7 L108.0,49.0 L112.0,44.3 L116.0,39.7 L120.0,35.2 L124.0,30.9 L128.0,26.8 L132.0,23.0 L136.0,19.5 L140.0,16.3 L144.0,13.6 L148.0,11.3 L152.0,9.5 L156.0,8.1 L160.0,7.3 L164.0,6.9 L168.0,7.1 L172.0,7.8 L176.0,9.0 L180.0,10.7 L184.0,12.8 L188.0,15.4 L192.0,18.4 L196.0,21.8 L200.0,25.5 L204.0,29.5 L208.0,33.7 L212.0,38.2 L216.0,42.8 L220.0,47.5 L224.0,52.2 L228.0,56.8 L232.0,61.4" stroke="#d01800" stroke-width="2.4" fill="none" opacity="0.5"/><path d="M-4.0,64.1 L0.0,59.4 L4.0,54.6 L8.0,49.7 L12.0,44.8 L16.0,40.0 L20.0,35.3 L24.0,30.8 L28.0,26.5 L32.0,22.5 L36.0,18.8 L40.0,15.5 L44.0,12.6 L48.0,10.1 L52.0,8.1 L56.0,6.7 L60.0,5.7 L64.0,5.3 L68.0,5.4 L72.0,6.0 L76.0,7.2 L80.0,8.8 L84.0,11.0 L88.0,13.6 L92.0,16.7 L96.0,20.1 L100.0,23.9 L104.0,28.1 L108.0,32.5 L112.0,37.0 L116.0,41.8 L120.0,46.6 L124.0,51.5 L128.0,56.4 L132.0,61.2 L136.0,65.9 L140.0,70.3 L144.0,74.6 L148.0,78.5 L152.0,82.1 L156.0,85.3 L160.0,88.1 L164.0,90.4 L168.0,92.3 L172.0,93.6 L176.0,94.5 L180.0,94.8 L184.0,94.5 L188.0,93.8 L192.0,92.5 L196.0,90.7 L200.0,88.4 L204.0,85.7 L208.0,82.5 L212.0,78.9 L216.0,75.1 L220.0,70.9 L224.0,66.4 L228.0,61.8 L232.0,57.0" stroke="#d01800" stroke-width="2.4" fill="none" opacity="0.5"/><path d="M-4.0,35.9 L0.0,40.6 L4.0,45.4 L8.0,50.3 L12.0,55.2 L16.0,60.0 L20.0,64.7 L24.0,69.2 L28.0,73.5 L32.0,77.5 L36.0,81.2 L40.0,84.5 L44.0,87.4 L48.0,89.9 L52.0,91.9 L56.0,93.3 L60.0,94.3 L64.0,94.7 L68.0,94.6 L72.0,94.0 L76.0,92.8 L80.0,91.2 L84.0,89.0 L88.0,86.4 L92.0,83.3 L96.0,79.9 L100.0,76.1 L104.0,71.9 L108.0,67.5 L112.0,63.0 L116.0,58.2 L120.0,53.4 L124.0,48.5 L128.0,43.6 L132.0,38.8 L136.0,34.1 L140.0,29.7 L144.0,25.4 L148.0,21.5 L152.0,17.9 L156.0,14.7 L160.0,11.9 L164.0,9.6 L168.0,7.7 L172.0,6.4 L176.0,5.5 L180.0,5.2 L184.0,5.5 L188.0,6.2 L192.0,7.5 L196.0,9.3 L200.0,11.6 L204.0,14.3 L208.0,17.5 L212.0,21.1 L216.0,24.9 L220.0,29.1 L224.0,33.6 L228.0,38.2 L232.0,43.0" stroke="#d01800" stroke-width="2.4" fill="none" opacity="0.5"/><path d="M-4.0,42.0 L0.0,37.6 L4.0,33.3 L8.0,29.2 L12.0,25.4 L16.0,21.9 L20.0,18.7 L24.0,15.8 L28.0,13.4 L32.0,11.4 L36.0,9.9 L40.0,8.8 L44.0,8.3 L48.0,8.2 L52.0,8.7 L56.0,9.6 L60.0,11.0 L64.0,12.9 L68.0,15.2 L72.0,17.9 L76.0,21.0 L80.0,24.5 L84.0,28.3 L88.0,32.3 L92.0,36.5 L96.0,40.9 L100.0,45.4 L104.0,50.0 L108.0,54.6 L112.0,59.1 L116.0,63.5 L120.0,67.7 L124.0,71.7 L128.0,75.5 L132.0,79.0 L136.0,82.1 L140.0,84.8 L144.0,87.1 L148.0,89.0 L152.0,90.4 L156.0,91.4 L160.0,91.8 L164.0,91.7 L168.0,91.2 L172.0,90.1 L176.0,88.6 L180.0,86.6 L184.0,84.2 L188.0,81.3 L192.0,78.1 L196.0,74.6 L200.0,70.7 L204.0,66.7 L208.0,62.4 L212.0,57.9 L216.0,53.4 L220.0,48.9 L224.0,44.3 L228.0,39.8 L232.0,35.5" stroke="#d01800" stroke-width="2.4" fill="none" opacity="0.5"/><path d="M-4.0,58.0 L0.0,62.4 L4.0,66.7 L8.0,70.8 L12.0,74.6 L16.0,78.1 L20.0,81.3 L24.0,84.2 L28.0,86.6 L32.0,88.6 L36.0,90.1 L40.0,91.2 L44.0,91.7 L48.0,91.8 L52.0,91.3 L56.0,90.4 L60.0,89.0 L64.0,87.1 L68.0,84.8 L72.0,82.1 L76.0,79.0 L80.0,75.5 L84.0,71.7 L88.0,67.7 L92.0,63.5 L96.0,59.1 L100.0,54.6 L104.0,50.0 L108.0,45.4 L112.0,40.9 L116.0,36.5 L120.0,32.3 L124.0,28.3 L128.0,24.5 L132.0,21.0 L136.0,17.9 L140.0,15.2 L144.0,12.9 L148.0,11.0 L152.0,9.6 L156.0,8.6 L160.0,8.2 L164.0,8.3 L168.0,8.8 L172.0,9.9 L176.0,11.4 L180.0,13.4 L184.0,15.8 L188.0,18.7 L192.0,21.9 L196.0,25.4 L200.0,29.3 L204.0,33.3 L208.0,37.6 L212.0,42.1 L216.0,46.6 L220.0,51.1 L224.0,55.7 L228.0,60.2 L232.0,64.5" stroke="#d01800" stroke-width="2.4" fill="none" opacity="0.5"/><path d="M-4.0,41.3 L0.0,36.6 L4.0,32.0 L8.0,27.6 L12.0,23.5 L16.0,19.7 L20.0,16.3 L24.0,13.3 L28.0,10.7 L32.0,8.6 L36.0,6.9 L40.0,5.8 L44.0,5.2 L48.0,5.2 L52.0,5.7 L56.0,6.7 L60.0,8.2 L64.0,10.2 L68.0,12.7 L72.0,15.7 L76.0,19.0 L80.0,22.8 L84.0,26.8 L88.0,31.2 L92.0,35.7 L96.0,40.4 L100.0,45.3 L104.0,50.2 L108.0,55.0 L112.0,59.9 L116.0,64.6 L120.0,69.1 L124.0,73.4 L128.0,77.5 L132.0,81.2 L136.0,84.5 L140.0,87.4 L144.0,89.9 L148.0,91.9 L152.0,93.4 L156.0,94.4 L160.0,94.8 L164.0,94.7 L168.0,94.1 L172.0,93.0 L176.0,91.3 L180.0,89.2 L184.0,86.6 L188.0,83.5 L192.0,80.1 L196.0,76.2 L200.0,72.1 L204.0,67.7 L208.0,63.1 L212.0,58.4 L216.0,53.5 L220.0,48.6 L224.0,43.7 L228.0,38.9 L232.0,34.3" stroke="#d01800" stroke-width="2.4" fill="none" opacity="0.5"/><path d="M-4.0,58.7 L0.0,63.4 L4.0,68.0 L8.0,72.4 L12.0,76.5 L16.0,80.3 L20.0,83.7 L24.0,86.7 L28.0,89.3 L32.0,91.4 L36.0,93.1 L40.0,94.2 L44.0,94.8 L48.0,94.8 L52.0,94.3 L56.0,93.3 L60.0,91.8 L64.0,89.8 L68.0,87.3 L72.0,84.3 L76.0,81.0 L80.0,77.2 L84.0,73.2 L88.0,68.8 L92.0,64.3 L96.0,59.6 L100.0,54.7 L104.0,49.8 L108.0,45.0 L112.0,40.1 L116.0,35.4 L120.0,30.9 L124.0,26.6 L128.0,22.5 L132.0,18.8 L136.0,15.5 L140.0,12.6 L144.0,10.1 L148.0,8.1 L152.0,6.6 L156.0,5.6 L160.0,5.2 L164.0,5.3 L168.0,5.9 L172.0,7.0 L176.0,8.7 L180.0,10.8 L184.0,13.4 L188.0,16.5 L192.0,19.9 L196.0,23.8 L200.0,27.9 L204.0,32.3 L208.0,36.9 L212.0,41.6 L216.0,46.5 L220.0,51.4 L224.0,56.3 L228.0,61.1 L232.0,65.7" stroke="#d01800" stroke-width="2.4" fill="none" opacity="0.5"/><path d="M-4.0,65.0 L0.0,60.8 L4.0,56.5 L8.0,52.2 L12.0,47.8 L16.0,43.4 L20.0,39.1 L24.0,34.9 L28.0,31.0 L32.0,27.2 L36.0,23.7 L40.0,20.6 L44.0,17.7 L48.0,15.3 L52.0,13.3 L56.0,11.7 L60.0,10.6 L64.0,9.9 L68.0,9.8 L72.0,10.1 L76.0,10.8 L80.0,12.1 L84.0,13.8 L88.0,15.9 L92.0,18.5 L96.0,21.4 L100.0,24.6 L104.0,28.2 L108.0,32.0 L112.0,36.0 L116.0,40.2 L120.0,44.6 L124.0,48.9 L128.0,53.3 L132.0,57.7 L136.0,61.9 L140.0,66.1 L144.0,70.0 L148.0,73.7 L152.0,77.1 L156.0,80.2 L160.0,82.9 L164.0,85.2 L168.0,87.1 L172.0,88.6 L176.0,89.6 L180.0,90.2 L184.0,90.2 L188.0,89.8 L192.0,88.9 L196.0,87.5 L200.0,85.7 L204.0,83.5 L208.0,80.9 L212.0,77.8 L216.0,74.5 L220.0,70.9 L224.0,67.0 L228.0,62.9 L232.0,58.7" stroke="#d01800" stroke-width="2.4" fill="none" opacity="0.5"/><path d="M-4.0,35.0 L0.0,39.2 L4.0,43.5 L8.0,47.8 L12.0,52.2 L16.0,56.6 L20.0,60.9 L24.0,65.1 L28.0,69.0 L32.0,72.8 L36.0,76.3 L40.0,79.4 L44.0,82.3 L48.0,84.7 L52.0,86.7 L56.0,88.3 L60.0,89.4 L64.0,90.1 L68.0,90.2 L72.0,89.9 L76.0,89.2 L80.0,87.9 L84.0,86.2 L88.0,84.1 L92.0,81.5 L96.0,78.6 L100.0,75.4 L104.0,71.8 L108.0,68.0 L112.0,64.0 L116.0,59.8 L120.0,55.4 L124.0,51.1 L128.0,46.7 L132.0,42.3 L136.0,38.1 L140.0,33.9 L144.0,30.0 L148.0,26.3 L152.0,22.9 L156.0,19.8 L160.0,17.1 L164.0,14.8 L168.0,12.9 L172.0,11.4 L176.0,10.4 L180.0,9.8 L184.0,9.8 L188.0,10.2 L192.0,11.1 L196.0,12.5 L200.0,14.3 L204.0,16.5 L208.0,19.1 L212.0,22.2 L216.0,25.5 L220.0,29.1 L224.0,33.0 L228.0,37.1 L232.0,41.3" stroke="#d01800" stroke-width="2.4" fill="none" opacity="0.5"/><path d="M-4.0,78.0 L0.0,73.9 L4.0,69.5 L8.0,64.8 L12.0,60.0 L16.0,55.1 L20.0,50.1 L24.0,45.1 L28.0,40.2 L32.0,35.3 L36.0,30.7 L40.0,26.3 L44.0,22.2 L48.0,18.4 L52.0,14.9 L56.0,11.9 L60.0,9.4 L64.0,7.3 L68.0,5.8 L72.0,4.7 L76.0,4.3 L80.0,4.3 L84.0,4.9 L88.0,6.1 L92.0,7.7 L96.0,9.9 L100.0,12.5 L104.0,15.6 L108.0,19.1 L112.0,23.0 L116.0,27.2 L120.0,31.7 L124.0,36.4 L128.0,41.2 L132.0,46.2 L136.0,51.2 L140.0,56.1 L144.0,61.1 L148.0,65.8 L152.0,70.4 L156.0,74.8 L160.0,78.8 L164.0,82.5 L168.0,85.9 L172.0,88.7 L176.0,91.2 L180.0,93.1 L184.0,94.5 L188.0,95.4 L192.0,95.8 L196.0,95.6 L200.0,94.9 L204.0,93.6 L208.0,91.8 L212.0,89.5 L216.0,86.7 L220.0,83.5 L224.0,79.9 L228.0,76.0 L232.0,71.7" stroke="#d01800" stroke-width="2.4" fill="none" opacity="0.5"/><path d="M-4.0,22.0 L0.0,26.1 L4.0,30.5 L8.0,35.2 L12.0,40.0 L16.0,44.9 L20.0,49.9 L24.0,54.9 L28.0,59.8 L32.0,64.7 L36.0,69.3 L40.0,73.7 L44.0,77.8 L48.0,81.6 L52.0,85.1 L56.0,88.1 L60.0,90.6 L64.0,92.7 L68.0,94.2 L72.0,95.3 L76.0,95.7 L80.0,95.7 L84.0,95.1 L88.0,93.9 L92.0,92.3 L96.0,90.1 L100.0,87.5 L104.0,84.4 L108.0,80.9 L112.0,77.0 L116.0,72.8 L120.0,68.3 L124.0,63.6 L128.0,58.8 L132.0,53.8 L136.0,48.8 L140.0,43.9 L144.0,38.9 L148.0,34.2 L152.0,29.6 L156.0,25.2 L160.0,21.2 L164.0,17.5 L168.0,14.1 L172.0,11.3 L176.0,8.8 L180.0,6.9 L184.0,5.5 L188.0,4.6 L192.0,4.2 L196.0,4.4 L200.0,5.1 L204.0,6.4 L208.0,8.2 L212.0,10.5 L216.0,13.3 L220.0,16.5 L224.0,20.1 L228.0,24.0 L232.0,28.3" stroke="#d01800" stroke-width="2.4" fill="none" opacity="0.5"/><path d="M-4.0,64.7 L0.0,60.2 L4.0,55.5 L8.0,50.7 L12.0,45.9 L16.0,41.2 L20.0,36.6 L24.0,32.1 L28.0,27.9 L32.0,23.9 L36.0,20.3 L40.0,16.9 L44.0,14.0 L48.0,11.5 L52.0,9.5 L56.0,8.0 L60.0,6.9 L64.0,6.4 L68.0,6.4 L72.0,6.9 L76.0,7.9 L80.0,9.4 L84.0,11.4 L88.0,13.9 L92.0,16.8 L96.0,20.1 L100.0,23.8 L104.0,27.7 L108.0,32.0 L112.0,36.4 L116.0,41.0 L120.0,45.7 L124.0,50.5 L128.0,55.3 L132.0,60.0 L136.0,64.5 L140.0,68.9 L144.0,73.1 L148.0,77.0 L152.0,80.6 L156.0,83.8 L160.0,86.6 L164.0,89.0 L168.0,90.9 L172.0,92.4 L176.0,93.3 L180.0,93.7 L184.0,93.6 L188.0,92.9 L192.0,91.8 L196.0,90.1 L200.0,88.0 L204.0,85.4 L208.0,82.4 L212.0,79.0 L216.0,75.3 L220.0,71.2 L224.0,67.0 L228.0,62.5 L232.0,57.8" stroke="#d01800" stroke-width="2.4" fill="none" opacity="0.5"/><path d="M-4.0,35.3 L0.0,39.8 L4.0,44.5 L8.0,49.3 L12.0,54.1 L16.0,58.8 L20.0,63.4 L24.0,67.9 L28.0,72.1 L32.0,76.1 L36.0,79.7 L40.0,83.1 L44.0,86.0 L48.0,88.5 L52.0,90.5 L56.0,92.0 L60.0,93.1 L64.0,93.6 L68.0,93.6 L72.0,93.1 L76.0,92.1 L80.0,90.6 L84.0,88.6 L88.0,86.1 L92.0,83.2 L96.0,79.9 L100.0,76.2 L104.0,72.3 L108.0,68.0 L112.0,63.6 L116.0,59.0 L120.0,54.3 L124.0,49.5 L128.0,44.7 L132.0,40.0 L136.0,35.5 L140.0,31.1 L144.0,26.9 L148.0,23.0 L152.0,19.4 L156.0,16.2 L160.0,13.4 L164.0,11.0 L168.0,9.1 L172.0,7.6 L176.0,6.7 L180.0,6.3 L184.0,6.4 L188.0,7.1 L192.0,8.2 L196.0,9.9 L200.0,12.0 L204.0,14.6 L208.0,17.6 L212.0,21.0 L216.0,24.7 L220.0,28.8 L224.0,33.0 L228.0,37.5 L232.0,42.2" stroke="#d01800" stroke-width="2.4" fill="none" opacity="0.5"/><path d="M-4.0,44.8 L0.0,40.5 L4.0,36.3 L8.0,32.3 L12.0,28.4 L16.0,24.9 L20.0,21.6 L24.0,18.7 L28.0,16.2 L32.0,14.0 L36.0,12.3 L40.0,11.0 L44.0,10.2 L48.0,9.9 L52.0,10.1 L56.0,10.7 L60.0,11.8 L64.0,13.4 L68.0,15.3 L72.0,17.8 L76.0,20.5 L80.0,23.7 L84.0,27.1 L88.0,30.9 L92.0,34.8 L96.0,39.0 L100.0,43.2 L104.0,47.6 L108.0,52.0 L112.0,56.3 L116.0,60.6 L120.0,64.7 L124.0,68.7 L128.0,72.5 L132.0,76.0 L136.0,79.1 L140.0,82.0 L144.0,84.4 L148.0,86.5 L152.0,88.1 L156.0,89.2 L160.0,89.9 L164.0,90.1 L168.0,89.8 L172.0,89.1 L176.0,87.9 L180.0,86.2 L184.0,84.1 L188.0,81.6 L192.0,78.7 L196.0,75.5 L200.0,72.0 L204.0,68.2 L208.0,64.2 L212.0,60.0 L216.0,55.7 L220.0,51.3 L224.0,46.9 L228.0,42.6 L232.0,38.4" stroke="#d01800" stroke-width="2.4" fill="none" opacity="0.5"/><path d="M-4.0,55.2 L0.0,59.5 L4.0,63.7 L8.0,67.7 L12.0,71.6 L16.0,75.1 L20.0,78.4 L24.0,81.3 L28.0,83.8 L32.0,86.0 L36.0,87.7 L40.0,89.0 L44.0,89.8 L48.0,90.1 L52.0,89.9 L56.0,89.3 L60.0,88.2 L64.0,86.6 L68.0,84.7 L72.0,82.2 L76.0,79.5 L80.0,76.3 L84.0,72.9 L88.0,69.1 L92.0,65.2 L96.0,61.0 L100.0,56.8 L104.0,52.4 L108.0,48.0 L112.0,43.7 L116.0,39.4 L120.0,35.3 L124.0,31.3 L128.0,27.5 L132.0,24.0 L136.0,20.9 L140.0,18.0 L144.0,15.6 L148.0,13.5 L152.0,11.9 L156.0,10.8 L160.0,10.1 L164.0,9.9 L168.0,10.2 L172.0,10.9 L176.0,12.1 L180.0,13.8 L184.0,15.9 L188.0,18.4 L192.0,21.3 L196.0,24.5 L200.0,28.0 L204.0,31.8 L208.0,35.8 L212.0,40.0 L216.0,44.3 L220.0,48.7 L224.0,53.1 L228.0,57.4 L232.0,61.6" stroke="#d01800" stroke-width="2.4" fill="none" opacity="0.5"/><path d="M-4.0,59.0 L0.0,54.6 L4.0,50.2 L8.0,45.8 L12.0,41.5 L16.0,37.2 L20.0,33.1 L24.0,29.2 L28.0,25.6 L32.0,22.2 L36.0,19.2 L40.0,16.5 L44.0,14.3 L48.0,12.4 L52.0,11.0 L56.0,10.1 L60.0,9.7 L64.0,9.7 L68.0,10.2 L72.0,11.2 L76.0,12.7 L80.0,14.6 L84.0,16.9 L88.0,19.6 L92.0,22.7 L96.0,26.1 L100.0,29.8 L104.0,33.7 L108.0,37.9 L112.0,42.1 L116.0,46.5 L120.0,50.9 L124.0,55.3 L128.0,59.6 L132.0,63.8 L136.0,67.9 L140.0,71.7 L144.0,75.3 L148.0,78.6 L152.0,81.5 L156.0,84.1 L160.0,86.2 L164.0,88.0 L168.0,89.2 L172.0,90.0 L176.0,90.4 L180.0,90.2 L184.0,89.6 L188.0,88.4 L192.0,86.9 L196.0,84.9 L200.0,82.4 L204.0,79.6 L208.0,76.5 L212.0,73.0 L216.0,69.2 L220.0,65.3 L224.0,61.1 L228.0,56.8 L232.0,52.4" stroke="#d01800" stroke-width="2.4" fill="none" opacity="0.5"/><path d="M-4.0,41.0 L0.0,45.4 L4.0,49.8 L8.0,54.2 L12.0,58.5 L16.0,62.8 L20.0,66.9 L24.0,70.8 L28.0,74.4 L32.0,77.8 L36.0,80.8 L40.0,83.5 L44.0,85.7 L48.0,87.6 L52.0,89.0 L56.0,89.9 L60.0,90.3 L64.0,90.3 L68.0,89.8 L72.0,88.8 L76.0,87.3 L80.0,85.4 L84.0,83.1 L88.0,80.4 L92.0,77.3 L96.0,73.9 L100.0,70.2 L104.0,66.3 L108.0,62.1 L112.0,57.9 L116.0,53.5 L120.0,49.1 L124.0,44.7 L128.0,40.4 L132.0,36.2 L136.0,32.1 L140.0,28.3 L144.0,24.7 L148.0,21.4 L152.0,18.5 L156.0,15.9 L160.0,13.8 L164.0,12.0 L168.0,10.8 L172.0,10.0 L176.0,9.6 L180.0,9.8 L184.0,10.4 L188.0,11.6 L192.0,13.1 L196.0,15.1 L200.0,17.6 L204.0,20.4 L208.0,23.5 L212.0,27.0 L216.0,30.8 L220.0,34.7 L224.0,38.9 L228.0,43.2 L232.0,47.6" stroke="#d01800" stroke-width="2.4" fill="none" opacity="0.5"/><path d="M-4.0,45.9 L0.0,41.4 L4.0,37.0 L8.0,32.8 L12.0,28.8 L16.0,25.1 L20.0,21.6 L24.0,18.5 L28.0,15.7 L32.0,13.4 L36.0,11.5 L40.0,10.0 L44.0,9.1 L48.0,8.6 L52.0,8.6 L56.0,9.1 L60.0,10.1 L64.0,11.6 L68.0,13.5 L72.0,15.9 L76.0,18.7 L80.0,21.8 L84.0,25.3 L88.0,29.1 L92.0,33.1 L96.0,37.3 L100.0,41.7 L104.0,46.2 L108.0,50.7 L112.0,55.2 L116.0,59.7 L120.0,64.0 L124.0,68.2 L128.0,72.2 L132.0,75.8 L136.0,79.2 L140.0,82.3 L144.0,84.9 L148.0,87.1 L152.0,88.9 L156.0,90.2 L160.0,91.1 L164.0,91.4 L168.0,91.3 L172.0,90.7 L176.0,89.5 L180.0,88.0 L184.0,85.9 L188.0,83.4 L192.0,80.6 L196.0,77.3 L200.0,73.8 L204.0,69.9 L208.0,65.8 L212.0,61.6 L216.0,57.2 L220.0,52.7 L224.0,48.1 L228.0,43.6 L232.0,39.2" stroke="#d01800" stroke-width="2.4" fill="none" opacity="0.5"/><path d="M-4.0,54.1 L0.0,58.6 L4.0,63.0 L8.0,67.2 L12.0,71.2 L16.0,74.9 L20.0,78.4 L24.0,81.5 L28.0,84.3 L32.0,86.6 L36.0,88.5 L40.0,90.0 L44.0,90.9 L48.0,91.4 L52.0,91.4 L56.0,90.9 L60.0,89.9 L64.0,88.4 L68.0,86.5 L72.0,84.1 L76.0,81.3 L80.0,78.2 L84.0,74.7 L88.0,70.9 L92.0,66.9 L96.0,62.7 L100.0,58.3 L104.0,53.8 L108.0,49.3 L112.0,44.8 L116.0,40.3 L120.0,36.0 L124.0,31.8 L128.0,27.8 L132.0,24.2 L136.0,20.8 L140.0,17.7 L144.0,15.1 L148.0,12.9 L152.0,11.1 L156.0,9.8 L160.0,8.9 L164.0,8.6 L168.0,8.7 L172.0,9.3 L176.0,10.5 L180.0,12.0 L184.0,14.1 L188.0,16.6 L192.0,19.4 L196.0,22.7 L200.0,26.2 L204.0,30.1 L208.0,34.2 L212.0,38.4 L216.0,42.8 L220.0,47.3 L224.0,51.9 L228.0,56.4 L232.0,60.8" stroke="#d01800" stroke-width="2.4" fill="none" opacity="0.5"/><path d="M-4.0,39.3 L0.0,34.9 L4.0,30.6 L8.0,26.5 L12.0,22.8 L16.0,19.3 L20.0,16.3 L24.0,13.6 L28.0,11.4 L32.0,9.6 L36.0,8.3 L40.0,7.5 L44.0,7.2 L48.0,7.4 L52.0,8.2 L56.0,9.4 L60.0,11.1 L64.0,13.3 L68.0,15.9 L72.0,18.9 L76.0,22.3 L80.0,26.0 L84.0,30.1 L88.0,34.3 L92.0,38.7 L96.0,43.3 L100.0,48.0 L104.0,52.6 L108.0,57.3 L112.0,61.8 L116.0,66.2 L120.0,70.5 L124.0,74.4 L128.0,78.1 L132.0,81.5 L136.0,84.4 L140.0,87.0 L144.0,89.1 L148.0,90.8 L152.0,91.9 L156.0,92.6 L160.0,92.8 L164.0,92.4 L168.0,91.6 L172.0,90.2 L176.0,88.4 L180.0,86.1 L184.0,83.4 L188.0,80.3 L192.0,76.8 L196.0,73.0 L200.0,68.9 L204.0,64.6 L208.0,60.1 L212.0,55.5 L216.0,50.9 L220.0,46.2 L224.0,41.6 L228.0,37.1 L232.0,32.7" stroke="#d01800" stroke-width="2.4" fill="none" opacity="0.5"/><path d="M-4.0,60.7 L0.0,65.1 L4.0,69.4 L8.0,73.5 L12.0,77.2 L16.0,80.7 L20.0,83.7 L24.0,86.4 L28.0,88.6 L32.0,90.4 L36.0,91.7 L40.0,92.5 L44.0,92.8 L48.0,92.6 L52.0,91.8 L56.0,90.6 L60.0,88.9 L64.0,86.7 L68.0,84.1 L72.0,81.1 L76.0,77.7 L80.0,74.0 L84.0,69.9 L88.0,65.7 L92.0,61.3 L96.0,56.7 L100.0,52.0 L104.0,47.4 L108.0,42.7 L112.0,38.2 L116.0,33.8 L120.0,29.5 L124.0,25.6 L128.0,21.9 L132.0,18.5 L136.0,15.6 L140.0,13.0 L144.0,10.9 L148.0,9.2 L152.0,8.1 L156.0,7.4 L160.0,7.2 L164.0,7.6 L168.0,8.4 L172.0,9.8 L176.0,11.6 L180.0,13.9 L184.0,16.6 L188.0,19.7 L192.0,23.2 L196.0,27.0 L200.0,31.1 L204.0,35.4 L208.0,39.9 L212.0,44.5 L216.0,49.1 L220.0,53.8 L224.0,58.4 L228.0,62.9 L232.0,67.3" stroke="#d01800" stroke-width="2.4" fill="none" opacity="0.5"/><path d="M-4.0,56.3 L0.0,51.4 L4.0,46.5 L8.0,41.6 L12.0,36.8 L16.0,32.2 L20.0,27.8 L24.0,23.6 L28.0,19.8 L32.0,16.3 L36.0,13.3 L40.0,10.6 L44.0,8.5 L48.0,6.8 L52.0,5.7 L56.0,5.1 L60.0,5.0 L64.0,5.4 L68.0,6.4 L72.0,7.9 L76.0,9.9 L80.0,12.4 L84.0,15.3 L88.0,18.7 L92.0,22.4 L96.0,26.5 L100.0,30.8 L104.0,35.4 L108.0,40.1 L112.0,44.9 L116.0,49.9 L120.0,54.8 L124.0,59.6 L128.0,64.4 L132.0,68.9 L136.0,73.3 L140.0,77.4 L144.0,81.1 L148.0,84.5 L152.0,87.4 L156.0,89.9 L160.0,92.0 L164.0,93.5 L168.0,94.5 L172.0,95.0 L176.0,95.0 L180.0,94.4 L184.0,93.3 L188.0,91.6 L192.0,89.5 L196.0,86.9 L200.0,83.9 L204.0,80.4 L208.0,76.6 L212.0,72.5 L216.0,68.1 L220.0,63.5 L224.0,58.7 L228.0,53.8 L232.0,48.9" stroke="#d01800" stroke-width="2.4" fill="none" opacity="0.5"/><path d="M-4.0,43.7 L0.0,48.6 L4.0,53.5 L8.0,58.4 L12.0,63.2 L16.0,67.8 L20.0,72.2 L24.0,76.4 L28.0,80.2 L32.0,83.7 L36.0,86.7 L40.0,89.4 L44.0,91.5 L48.0,93.2 L52.0,94.3 L56.0,94.9 L60.0,95.0 L64.0,94.6 L68.0,93.6 L72.0,92.1 L76.0,90.1 L80.0,87.6 L84.0,84.7 L88.0,81.3 L92.0,77.6 L96.0,73.5 L100.0,69.2 L104.0,64.6 L108.0,59.9 L112.0,55.1 L116.0,50.1 L120.0,45.2 L124.0,40.4 L128.0,35.6 L132.0,31.1 L136.0,26.7 L140.0,22.6 L144.0,18.9 L148.0,15.5 L152.0,12.6 L156.0,10.1 L160.0,8.0 L164.0,6.5 L168.0,5.5 L172.0,5.0 L176.0,5.0 L180.0,5.6 L184.0,6.7 L188.0,8.4 L192.0,10.5 L196.0,13.1 L200.0,16.1 L204.0,19.6 L208.0,23.4 L212.0,27.5 L216.0,31.9 L220.0,36.5 L224.0,41.3 L228.0,46.2 L232.0,51.1" stroke="#d01800" stroke-width="2.4" fill="none" opacity="0.5"/><path d="M-4.0,59.4 L0.0,54.6 L4.0,49.8 L8.0,45.1 L12.0,40.3 L16.0,35.7 L20.0,31.3 L24.0,27.1 L28.0,23.1 L32.0,19.5 L36.0,16.3 L40.0,13.4 L44.0,11.0 L48.0,9.0 L52.0,7.6 L56.0,6.6 L60.0,6.2 L64.0,6.3 L68.0,6.9 L72.0,8.0 L76.0,9.6 L80.0,11.7 L84.0,14.3 L88.0,17.3 L92.0,20.6 L96.0,24.4 L100.0,28.4 L104.0,32.7 L108.0,37.2 L112.0,41.8 L116.0,46.6 L120.0,51.4 L124.0,56.1 L128.0,60.8 L132.0,65.4 L136.0,69.8 L140.0,73.9 L144.0,77.8 L148.0,81.3 L152.0,84.5 L156.0,87.2 L160.0,89.5 L164.0,91.4 L168.0,92.7 L172.0,93.5 L176.0,93.8 L180.0,93.6 L184.0,92.9 L188.0,91.6 L192.0,89.9 L196.0,87.7 L200.0,85.0 L204.0,81.9 L208.0,78.5 L212.0,74.7 L216.0,70.6 L220.0,66.2 L224.0,61.7 L228.0,57.0 L232.0,52.2" stroke="#d01800" stroke-width="2.4" fill="none" opacity="0.5"/><path d="M-4.0,40.6 L0.0,45.4 L4.0,50.2 L8.0,54.9 L12.0,59.7 L16.0,64.3 L20.0,68.7 L24.0,72.9 L28.0,76.9 L32.0,80.5 L36.0,83.7 L40.0,86.6 L44.0,89.0 L48.0,91.0 L52.0,92.4 L56.0,93.4 L60.0,93.8 L64.0,93.7 L68.0,93.1 L72.0,92.0 L76.0,90.4 L80.0,88.3 L84.0,85.7 L88.0,82.7 L92.0,79.4 L96.0,75.6 L100.0,71.6 L104.0,67.3 L108.0,62.8 L112.0,58.2 L116.0,53.4 L120.0,48.6 L124.0,43.9 L128.0,39.2 L132.0,34.6 L136.0,30.2 L140.0,26.1 L144.0,22.2 L148.0,18.7 L152.0,15.5 L156.0,12.8 L160.0,10.5 L164.0,8.6 L168.0,7.3 L172.0,6.5 L176.0,6.2 L180.0,6.4 L184.0,7.1 L188.0,8.4 L192.0,10.1 L196.0,12.3 L200.0,15.0 L204.0,18.1 L208.0,21.5 L212.0,25.3 L216.0,29.4 L220.0,33.8 L224.0,38.3 L228.0,43.0 L232.0,47.8" stroke="#d01800" stroke-width="2.4" fill="none" opacity="0.5"/><path d="M-4.0,58.6 L0.0,53.8 L4.0,49.0 L8.0,44.2 L12.0,39.5 L16.0,34.9 L20.0,30.5 L24.0,26.3 L28.0,22.4 L32.0,18.9 L36.0,15.7 L40.0,12.9 L44.0,10.5 L48.0,8.6 L52.0,7.3 L56.0,6.4 L60.0,6.0 L64.0,6.2 L68.0,6.9 L72.0,8.1 L76.0,9.8 L80.0,12.0 L84.0,14.6 L88.0,17.7 L92.0,21.2 L96.0,24.9 L100.0,29.0 L104.0,33.4 L108.0,37.9 L112.0,42.6 L116.0,47.4 L120.0,52.2 L124.0,56.9 L128.0,61.6 L132.0,66.2 L136.0,70.6 L140.0,74.7 L144.0,78.5 L148.0,82.0 L152.0,85.1 L156.0,87.8 L160.0,90.0 L164.0,91.8 L168.0,93.0 L172.0,93.8 L176.0,94.0 L180.0,93.7 L184.0,92.8 L188.0,91.5 L192.0,89.7 L196.0,87.4 L200.0,84.6 L204.0,81.5 L208.0,77.9 L212.0,74.1 L216.0,69.9 L220.0,65.5 L224.0,60.9 L228.0,56.2 L232.0,51.4" stroke="#d01800" stroke-width="2.4" fill="none" opacity="0.5"/><path d="M-4.0,41.4 L0.0,46.2 L4.0,51.0 L8.0,55.8 L12.0,60.5 L16.0,65.1 L20.0,69.5 L24.0,73.7 L28.0,77.6 L32.0,81.1 L36.0,84.3 L40.0,87.1 L44.0,89.5 L48.0,91.4 L52.0,92.7 L56.0,93.6 L60.0,94.0 L64.0,93.8 L68.0,93.1 L72.0,91.9 L76.0,90.2 L80.0,88.0 L84.0,85.4 L88.0,82.3 L92.0,78.8 L96.0,75.1 L100.0,71.0 L104.0,66.6 L108.0,62.1 L112.0,57.4 L116.0,52.6 L120.0,47.8 L124.0,43.1 L128.0,38.4 L132.0,33.8 L136.0,29.4 L140.0,25.3 L144.0,21.5 L148.0,18.0 L152.0,14.9 L156.0,12.2 L160.0,10.0 L164.0,8.2 L168.0,7.0 L172.0,6.2 L176.0,6.0 L180.0,6.3 L184.0,7.2 L188.0,8.5 L192.0,10.3 L196.0,12.6 L200.0,15.4 L204.0,18.5 L208.0,22.1 L212.0,25.9 L216.0,30.1 L220.0,34.5 L224.0,39.1 L228.0,43.8 L232.0,48.6" stroke="#d01800" stroke-width="2.4" fill="none" opacity="0.5"/><path d="M-4.0,56.5 L0.0,51.9 L4.0,47.4 L8.0,42.9 L12.0,38.4 L16.0,34.1 L20.0,30.0 L24.0,26.2 L28.0,22.6 L32.0,19.3 L36.0,16.4 L40.0,13.9 L44.0,11.9 L48.0,10.3 L52.0,9.1 L56.0,8.5 L60.0,8.3 L64.0,8.7 L68.0,9.5 L72.0,10.9 L76.0,12.6 L80.0,14.9 L84.0,17.5 L88.0,20.6 L92.0,24.0 L96.0,27.7 L100.0,31.6 L104.0,35.8 L108.0,40.2 L112.0,44.7 L116.0,49.2 L120.0,53.7 L124.0,58.2 L128.0,62.7 L132.0,66.9 L136.0,71.0 L140.0,74.8 L144.0,78.3 L148.0,81.4 L152.0,84.2 L156.0,86.6 L160.0,88.6 L164.0,90.1 L168.0,91.1 L172.0,91.6 L176.0,91.6 L180.0,91.1 L184.0,90.2 L188.0,88.7 L192.0,86.8 L196.0,84.5 L200.0,81.7 L204.0,78.6 L208.0,75.1 L212.0,71.4 L216.0,67.3 L220.0,63.1 L224.0,58.7 L228.0,54.2 L232.0,49.7" stroke="#d01800" stroke-width="2.4" fill="none" opacity="0.5"/><path d="M-4.0,43.5 L0.0,48.1 L4.0,52.6 L8.0,57.1 L12.0,61.6 L16.0,65.9 L20.0,70.0 L24.0,73.8 L28.0,77.4 L32.0,80.7 L36.0,83.6 L40.0,86.1 L44.0,88.1 L48.0,89.7 L52.0,90.9 L56.0,91.5 L60.0,91.7 L64.0,91.3 L68.0,90.5 L72.0,89.1 L76.0,87.4 L80.0,85.1 L84.0,82.5 L88.0,79.4 L92.0,76.0 L96.0,72.3 L100.0,68.4 L104.0,64.2 L108.0,59.8 L112.0,55.3 L116.0,50.8 L120.0,46.3 L124.0,41.8 L128.0,37.3 L132.0,33.1 L136.0,29.0 L140.0,25.2 L144.0,21.7 L148.0,18.6 L152.0,15.8 L156.0,13.4 L160.0,11.4 L164.0,9.9 L168.0,8.9 L172.0,8.4 L176.0,8.4 L180.0,8.9 L184.0,9.8 L188.0,11.3 L192.0,13.2 L196.0,15.5 L200.0,18.3 L204.0,21.4 L208.0,24.9 L212.0,28.6 L216.0,32.7 L220.0,36.9 L224.0,41.3 L228.0,45.8 L232.0,50.3" stroke="#d01800" stroke-width="2.4" fill="none" opacity="0.5"/><path d="M-4.0,78.6 L0.0,74.5 L4.0,70.2 L8.0,65.5 L12.0,60.7 L16.0,55.8 L20.0,50.8 L24.0,45.8 L28.0,40.8 L32.0,35.9 L36.0,31.2 L40.0,26.8 L44.0,22.6 L48.0,18.7 L52.0,15.2 L56.0,12.2 L60.0,9.5 L64.0,7.4 L68.0,5.8 L72.0,4.7 L76.0,4.1 L80.0,4.1 L84.0,4.6 L88.0,5.7 L92.0,7.3 L96.0,9.4 L100.0,12.0 L104.0,15.0 L108.0,18.5 L112.0,22.4 L116.0,26.5 L120.0,31.0 L124.0,35.7 L128.0,40.5 L132.0,45.5 L136.0,50.5 L140.0,55.5 L144.0,60.4 L148.0,65.3 L152.0,69.9 L156.0,74.3 L160.0,78.4 L164.0,82.2 L168.0,85.6 L172.0,88.5 L176.0,91.0 L180.0,93.1 L184.0,94.6 L188.0,95.5 L192.0,96.0 L196.0,95.8 L200.0,95.2 L204.0,94.0 L208.0,92.2 L212.0,90.0 L216.0,87.3 L220.0,84.1 L224.0,80.6 L228.0,76.6 L232.0,72.4" stroke="#d01800" stroke-width="2.4" fill="none" opacity="0.5"/><path d="M-4.0,21.4 L0.0,25.5 L4.0,29.8 L8.0,34.5 L12.0,39.3 L16.0,44.2 L20.0,49.2 L24.0,54.2 L28.0,59.2 L32.0,64.1 L36.0,68.8 L40.0,73.2 L44.0,77.4 L48.0,81.3 L52.0,84.8 L56.0,87.8 L60.0,90.5 L64.0,92.6 L68.0,94.2 L72.0,95.3 L76.0,95.9 L80.0,95.9 L84.0,95.4 L88.0,94.3 L92.0,92.7 L96.0,90.6 L100.0,88.0 L104.0,85.0 L108.0,81.5 L112.0,77.6 L116.0,73.5 L120.0,69.0 L124.0,64.3 L128.0,59.5 L132.0,54.5 L136.0,49.5 L140.0,44.5 L144.0,39.6 L148.0,34.7 L152.0,30.1 L156.0,25.7 L160.0,21.6 L164.0,17.8 L168.0,14.4 L172.0,11.5 L176.0,9.0 L180.0,6.9 L184.0,5.4 L188.0,4.5 L192.0,4.0 L196.0,4.2 L200.0,4.8 L204.0,6.0 L208.0,7.8 L212.0,10.0 L216.0,12.7 L220.0,15.9 L224.0,19.4 L228.0,23.4 L232.0,27.6" stroke="#d01800" stroke-width="2.4" fill="none" opacity="0.5"/><path d="M-4.0,72.1 L0.0,67.7 L4.0,63.2 L8.0,58.5 L12.0,53.8 L16.0,48.9 L20.0,44.1 L24.0,39.4 L28.0,34.7 L32.0,30.3 L36.0,26.1 L40.0,22.2 L44.0,18.6 L48.0,15.4 L52.0,12.6 L56.0,10.2 L60.0,8.4 L64.0,7.0 L68.0,6.1 L72.0,5.8 L76.0,5.9 L80.0,6.7 L84.0,7.9 L88.0,9.6 L92.0,11.8 L96.0,14.5 L100.0,17.6 L104.0,21.1 L108.0,24.9 L112.0,29.0 L116.0,33.4 L120.0,37.9 L124.0,42.7 L128.0,47.5 L132.0,52.3 L136.0,57.1 L140.0,61.8 L144.0,66.4 L148.0,70.8 L152.0,74.9 L156.0,78.8 L160.0,82.2 L164.0,85.4 L168.0,88.0 L172.0,90.3 L176.0,92.0 L180.0,93.3 L184.0,94.0 L188.0,94.2 L192.0,93.9 L196.0,93.1 L200.0,91.7 L204.0,89.9 L208.0,87.6 L212.0,84.8 L216.0,81.6 L220.0,78.0 L224.0,74.1 L228.0,69.9 L232.0,65.5" stroke="#d01800" stroke-width="2.4" fill="none" opacity="0.5"/><path d="M-4.0,27.9 L0.0,32.3 L4.0,36.8 L8.0,41.5 L12.0,46.2 L16.0,51.1 L20.0,55.9 L24.0,60.6 L28.0,65.3 L32.0,69.7 L36.0,73.9 L40.0,77.8 L44.0,81.4 L48.0,84.6 L52.0,87.4 L56.0,89.8 L60.0,91.6 L64.0,93.0 L68.0,93.9 L72.0,94.2 L76.0,94.1 L80.0,93.3 L84.0,92.1 L88.0,90.4 L92.0,88.2 L96.0,85.5 L100.0,82.4 L104.0,78.9 L108.0,75.1 L112.0,71.0 L116.0,66.6 L120.0,62.1 L124.0,57.3 L128.0,52.5 L132.0,47.7 L136.0,42.9 L140.0,38.2 L144.0,33.6 L148.0,29.2 L152.0,25.1 L156.0,21.2 L160.0,17.8 L164.0,14.6 L168.0,12.0 L172.0,9.7 L176.0,8.0 L180.0,6.7 L184.0,6.0 L188.0,5.8 L192.0,6.1 L196.0,6.9 L200.0,8.3 L204.0,10.1 L208.0,12.4 L212.0,15.2 L216.0,18.4 L220.0,22.0 L224.0,25.9 L228.0,30.1 L232.0,34.5" stroke="#d01800" stroke-width="2.4" fill="none" opacity="0.5"/><path d="M-4.0,50.8 L0.0,46.3 L4.0,41.8 L8.0,37.5 L12.0,33.2 L16.0,29.2 L20.0,25.4 L24.0,22.0 L28.0,18.8 L32.0,16.0 L36.0,13.7 L40.0,11.7 L44.0,10.2 L48.0,9.2 L52.0,8.7 L56.0,8.7 L60.0,9.1 L64.0,10.1 L68.0,11.5 L72.0,13.4 L76.0,15.7 L80.0,18.5 L84.0,21.6 L88.0,25.0 L92.0,28.8 L96.0,32.8 L100.0,37.0 L104.0,41.3 L108.0,45.8 L112.0,50.3 L116.0,54.8 L120.0,59.3 L124.0,63.6 L128.0,67.8 L132.0,71.8 L136.0,75.5 L140.0,78.9 L144.0,81.9 L148.0,84.6 L152.0,86.9 L156.0,88.7 L160.0,90.1 L164.0,91.0 L168.0,91.4 L172.0,91.3 L176.0,90.7 L180.0,89.6 L184.0,88.1 L188.0,86.1 L192.0,83.6 L196.0,80.8 L200.0,77.6 L204.0,74.1 L208.0,70.3 L212.0,66.2 L216.0,62.0 L220.0,57.6 L224.0,53.1 L228.0,48.6 L232.0,44.1" stroke="#d01800" stroke-width="2.4" fill="none" opacity="0.5"/><path d="M-4.0,49.2 L0.0,53.7 L4.0,58.2 L8.0,62.5 L12.0,66.8 L16.0,70.8 L20.0,74.6 L24.0,78.0 L28.0,81.2 L32.0,84.0 L36.0,86.3 L40.0,88.3 L44.0,89.8 L48.0,90.8 L52.0,91.3 L56.0,91.3 L60.0,90.9 L64.0,89.9 L68.0,88.5 L72.0,86.6 L76.0,84.3 L80.0,81.5 L84.0,78.4 L88.0,75.0 L92.0,71.2 L96.0,67.2 L100.0,63.0 L104.0,58.7 L108.0,54.2 L112.0,49.7 L116.0,45.2 L120.0,40.7 L124.0,36.4 L128.0,32.2 L132.0,28.2 L136.0,24.5 L140.0,21.1 L144.0,18.1 L148.0,15.4 L152.0,13.1 L156.0,11.3 L160.0,9.9 L164.0,9.0 L168.0,8.6 L172.0,8.7 L176.0,9.3 L180.0,10.4 L184.0,11.9 L188.0,13.9 L192.0,16.4 L196.0,19.2 L200.0,22.4 L204.0,25.9 L208.0,29.7 L212.0,33.8 L216.0,38.0 L220.0,42.4 L224.0,46.9 L228.0,51.4 L232.0,55.9" stroke="#d01800" stroke-width="2.4" fill="none" opacity="0.5"/><path d="M-4.0,49.8 L0.0,45.4 L4.0,41.0 L8.0,36.8 L12.0,32.7 L16.0,28.8 L20.0,25.2 L24.0,21.9 L28.0,18.9 L32.0,16.2 L36.0,14.0 L40.0,12.2 L44.0,10.9 L48.0,10.0 L52.0,9.6 L56.0,9.7 L60.0,10.3 L64.0,11.3 L68.0,12.8 L72.0,14.7 L76.0,17.1 L80.0,19.9 L84.0,23.0 L88.0,26.4 L92.0,30.1 L96.0,34.1 L100.0,38.2 L104.0,42.5 L108.0,46.9 L112.0,51.3 L116.0,55.7 L120.0,60.0 L124.0,64.2 L128.0,68.3 L132.0,72.1 L136.0,75.7 L140.0,78.9 L144.0,81.8 L148.0,84.4 L152.0,86.5 L156.0,88.2 L160.0,89.4 L164.0,90.1 L168.0,90.4 L172.0,90.2 L176.0,89.5 L180.0,88.4 L184.0,86.8 L188.0,84.7 L192.0,82.3 L196.0,79.4 L200.0,76.2 L204.0,72.7 L208.0,68.9 L212.0,64.9 L216.0,60.7 L220.0,56.4 L224.0,52.0 L228.0,47.6 L232.0,43.2" stroke="#d01800" stroke-width="2.4" fill="none" opacity="0.5"/><path d="M-4.0,50.2 L0.0,54.6 L4.0,59.0 L8.0,63.2 L12.0,67.3 L16.0,71.2 L20.0,74.8 L24.0,78.1 L28.0,81.1 L32.0,83.8 L36.0,86.0 L40.0,87.8 L44.0,89.1 L48.0,90.0 L52.0,90.4 L56.0,90.3 L60.0,89.7 L64.0,88.7 L68.0,87.2 L72.0,85.3 L76.0,82.9 L80.0,80.1 L84.0,77.0 L88.0,73.6 L92.0,69.9 L96.0,65.9 L100.0,61.8 L104.0,57.5 L108.0,53.1 L112.0,48.7 L116.0,44.3 L120.0,40.0 L124.0,35.8 L128.0,31.7 L132.0,27.9 L136.0,24.3 L140.0,21.1 L144.0,18.2 L148.0,15.6 L152.0,13.5 L156.0,11.8 L160.0,10.6 L164.0,9.9 L168.0,9.6 L172.0,9.8 L176.0,10.5 L180.0,11.6 L184.0,13.2 L188.0,15.3 L192.0,17.7 L196.0,20.6 L200.0,23.8 L204.0,27.3 L208.0,31.1 L212.0,35.1 L216.0,39.3 L220.0,43.6 L224.0,48.0 L228.0,52.4 L232.0,56.8" stroke="#d01800" stroke-width="2.4" fill="none" opacity="0.5"/><path d="M-4.0,68.5 L0.0,64.2 L4.0,59.8 L8.0,55.2 L12.0,50.6 L16.0,46.0 L20.0,41.4 L24.0,36.9 L28.0,32.6 L32.0,28.5 L36.0,24.6 L40.0,21.1 L44.0,17.9 L48.0,15.0 L52.0,12.6 L56.0,10.7 L60.0,9.2 L64.0,8.2 L68.0,7.7 L72.0,7.7 L76.0,8.2 L80.0,9.2 L84.0,10.7 L88.0,12.6 L92.0,15.0 L96.0,17.8 L100.0,21.0 L104.0,24.6 L108.0,28.4 L112.0,32.6 L116.0,36.9 L120.0,41.4 L124.0,45.9 L128.0,50.6 L132.0,55.2 L136.0,59.7 L140.0,64.2 L144.0,68.5 L148.0,72.5 L152.0,76.3 L156.0,79.8 L160.0,82.9 L164.0,85.6 L168.0,87.9 L172.0,89.7 L176.0,91.1 L180.0,92.0 L184.0,92.4 L188.0,92.3 L192.0,91.6 L196.0,90.5 L200.0,88.9 L204.0,86.8 L208.0,84.3 L212.0,81.4 L216.0,78.1 L220.0,74.5 L224.0,70.5 L228.0,66.4 L232.0,62.0" stroke="#d01800" stroke-width="2.4" fill="none" opacity="0.5"/><path d="M-4.0,31.5 L0.0,35.8 L4.0,40.2 L8.0,44.8 L12.0,49.4 L16.0,54.0 L20.0,58.6 L24.0,63.1 L28.0,67.4 L32.0,71.5 L36.0,75.4 L40.0,78.9 L44.0,82.1 L48.0,85.0 L52.0,87.4 L56.0,89.3 L60.0,90.8 L64.0,91.8 L68.0,92.3 L72.0,92.3 L76.0,91.8 L80.0,90.8 L84.0,89.3 L88.0,87.4 L92.0,85.0 L96.0,82.2 L100.0,79.0 L104.0,75.4 L108.0,71.6 L112.0,67.4 L116.0,63.1 L120.0,58.6 L124.0,54.1 L128.0,49.4 L132.0,44.8 L136.0,40.3 L140.0,35.8 L144.0,31.5 L148.0,27.5 L152.0,23.7 L156.0,20.2 L160.0,17.1 L164.0,14.4 L168.0,12.1 L172.0,10.3 L176.0,8.9 L180.0,8.0 L184.0,7.6 L188.0,7.7 L192.0,8.4 L196.0,9.5 L200.0,11.1 L204.0,13.2 L208.0,15.7 L212.0,18.6 L216.0,21.9 L220.0,25.5 L224.0,29.5 L228.0,33.6 L232.0,38.0" stroke="#d01800" stroke-width="2.4" fill="none" opacity="0.5"/><path d="M-4.0,71.3 L0.0,67.2 L4.0,62.9 L8.0,58.4 L12.0,53.8 L16.0,49.2 L20.0,44.6 L24.0,40.1 L28.0,35.6 L32.0,31.4 L36.0,27.4 L40.0,23.6 L44.0,20.1 L48.0,17.0 L52.0,14.3 L56.0,12.1 L60.0,10.3 L64.0,8.9 L68.0,8.0 L72.0,7.7 L76.0,7.8 L80.0,8.5 L84.0,9.6 L88.0,11.3 L92.0,13.4 L96.0,15.9 L100.0,18.8 L104.0,22.1 L108.0,25.8 L112.0,29.7 L116.0,33.9 L120.0,38.2 L124.0,42.7 L128.0,47.3 L132.0,51.9 L136.0,56.5 L140.0,61.0 L144.0,65.4 L148.0,69.6 L152.0,73.6 L156.0,77.3 L160.0,80.7 L164.0,83.7 L168.0,86.3 L172.0,88.4 L176.0,90.1 L180.0,91.4 L184.0,92.1 L188.0,92.3 L192.0,92.0 L196.0,91.3 L200.0,90.0 L204.0,88.3 L208.0,86.1 L212.0,83.4 L216.0,80.4 L220.0,77.0 L224.0,73.3 L228.0,69.3 L232.0,65.1" stroke="#d01800" stroke-width="2.4" fill="none" opacity="0.5"/><path d="M-4.0,28.7 L0.0,32.8 L4.0,37.1 L8.0,41.6 L12.0,46.2 L16.0,50.8 L20.0,55.4 L24.0,59.9 L28.0,64.4 L32.0,68.6 L36.0,72.6 L40.0,76.4 L44.0,79.9 L48.0,83.0 L52.0,85.7 L56.0,87.9 L60.0,89.7 L64.0,91.1 L68.0,92.0 L72.0,92.3 L76.0,92.2 L80.0,91.5 L84.0,90.4 L88.0,88.7 L92.0,86.6 L96.0,84.1 L100.0,81.2 L104.0,77.9 L108.0,74.2 L112.0,70.3 L116.0,66.1 L120.0,61.8 L124.0,57.3 L128.0,52.7 L132.0,48.1 L136.0,43.5 L140.0,39.0 L144.0,34.6 L148.0,30.4 L152.0,26.4 L156.0,22.7 L160.0,19.3 L164.0,16.3 L168.0,13.7 L172.0,11.6 L176.0,9.9 L180.0,8.6 L184.0,7.9 L188.0,7.7 L192.0,8.0 L196.0,8.7 L200.0,10.0 L204.0,11.7 L208.0,13.9 L212.0,16.6 L216.0,19.6 L220.0,23.0 L224.0,26.7 L228.0,30.7 L232.0,34.9" stroke="#d01800" stroke-width="2.4" fill="none" opacity="0.5"/><path d="M-4.0,76.7 L0.0,72.6 L4.0,68.2 L8.0,63.6 L12.0,58.8 L16.0,54.0 L20.0,49.1 L24.0,44.1 L28.0,39.3 L32.0,34.6 L36.0,30.1 L40.0,25.8 L44.0,21.8 L48.0,18.1 L52.0,14.8 L56.0,12.0 L60.0,9.5 L64.0,7.6 L68.0,6.2 L72.0,5.3 L76.0,4.9 L80.0,5.1 L84.0,5.8 L88.0,7.0 L92.0,8.8 L96.0,11.0 L100.0,13.7 L104.0,16.9 L108.0,20.4 L112.0,24.3 L116.0,28.5 L120.0,32.9 L124.0,37.6 L128.0,42.4 L132.0,47.3 L136.0,52.2 L140.0,57.1 L144.0,61.9 L148.0,66.6 L152.0,71.0 L156.0,75.3 L160.0,79.2 L164.0,82.8 L168.0,85.9 L172.0,88.7 L176.0,91.0 L180.0,92.8 L184.0,94.1 L188.0,94.8 L192.0,95.1 L196.0,94.8 L200.0,93.9 L204.0,92.6 L208.0,90.7 L212.0,88.3 L216.0,85.5 L220.0,82.3 L224.0,78.7 L228.0,74.7 L232.0,70.4" stroke="#d01800" stroke-width="2.4" fill="none" opacity="0.5"/><path d="M-4.0,23.3 L0.0,27.4 L4.0,31.8 L8.0,36.4 L12.0,41.2 L16.0,46.0 L20.0,50.9 L24.0,55.9 L28.0,60.7 L32.0,65.4 L36.0,69.9 L40.0,74.2 L44.0,78.2 L48.0,81.9 L52.0,85.2 L56.0,88.0 L60.0,90.5 L64.0,92.4 L68.0,93.8 L72.0,94.7 L76.0,95.1 L80.0,94.9 L84.0,94.2 L88.0,93.0 L92.0,91.2 L96.0,89.0 L100.0,86.3 L104.0,83.1 L108.0,79.6 L112.0,75.7 L116.0,71.5 L120.0,67.1 L124.0,62.4 L128.0,57.6 L132.0,52.7 L136.0,47.8 L140.0,42.9 L144.0,38.1 L148.0,33.4 L152.0,29.0 L156.0,24.7 L160.0,20.8 L164.0,17.2 L168.0,14.1 L172.0,11.3 L176.0,9.0 L180.0,7.2 L184.0,5.9 L188.0,5.2 L192.0,4.9 L196.0,5.2 L200.0,6.1 L204.0,7.4 L208.0,9.3 L212.0,11.7 L216.0,14.5 L220.0,17.7 L224.0,21.3 L228.0,25.3 L232.0,29.6" stroke="#d01800" stroke-width="2.4" fill="none" opacity="0.5"/><path d="M-4.0,38.6 L0.0,34.3 L4.0,30.2 L8.0,26.4 L12.0,22.9 L16.0,19.6 L20.0,16.8 L24.0,14.3 L28.0,12.3 L32.0,10.7 L36.0,9.5 L40.0,8.9 L44.0,8.8 L48.0,9.1 L52.0,9.9 L56.0,11.2 L60.0,13.0 L64.0,15.2 L68.0,17.8 L72.0,20.9 L76.0,24.2 L80.0,27.9 L84.0,31.8 L88.0,36.0 L92.0,40.3 L96.0,44.7 L100.0,49.2 L104.0,53.7 L108.0,58.2 L112.0,62.5 L116.0,66.7 L120.0,70.7 L124.0,74.5 L128.0,78.0 L132.0,81.1 L136.0,83.9 L140.0,86.3 L144.0,88.2 L148.0,89.7 L152.0,90.7 L156.0,91.2 L160.0,91.2 L164.0,90.7 L168.0,89.8 L172.0,88.4 L176.0,86.5 L180.0,84.2 L184.0,81.4 L188.0,78.3 L192.0,74.9 L196.0,71.2 L200.0,67.2 L204.0,63.0 L208.0,58.6 L212.0,54.2 L216.0,49.7 L220.0,45.2 L224.0,40.7 L228.0,36.4 L232.0,32.2" stroke="#d01800" stroke-width="2.4" fill="none" opacity="0.5"/><path d="M-4.0,61.4 L0.0,65.7 L4.0,69.8 L8.0,73.6 L12.0,77.1 L16.0,80.4 L20.0,83.2 L24.0,85.7 L28.0,87.7 L32.0,89.3 L36.0,90.5 L40.0,91.1 L44.0,91.2 L48.0,90.9 L52.0,90.1 L56.0,88.8 L60.0,87.0 L64.0,84.8 L68.0,82.2 L72.0,79.1 L76.0,75.8 L80.0,72.1 L84.0,68.2 L88.0,64.0 L92.0,59.7 L96.0,55.3 L100.0,50.8 L104.0,46.3 L108.0,41.8 L112.0,37.5 L116.0,33.3 L120.0,29.3 L124.0,25.5 L128.0,22.0 L132.0,18.9 L136.0,16.1 L140.0,13.7 L144.0,11.8 L148.0,10.3 L152.0,9.3 L156.0,8.8 L160.0,8.8 L164.0,9.3 L168.0,10.2 L172.0,11.6 L176.0,13.5 L180.0,15.8 L184.0,18.6 L188.0,21.7 L192.0,25.1 L196.0,28.8 L200.0,32.8 L204.0,37.0 L208.0,41.4 L212.0,45.8 L216.0,50.3 L220.0,54.8 L224.0,59.3 L228.0,63.6 L232.0,67.8" stroke="#d01800" stroke-width="2.4" fill="none" opacity="0.5"/><path d="M-4.0,73.8 L0.0,69.8 L4.0,65.5 L8.0,61.1 L12.0,56.5 L16.0,51.8 L20.0,47.1 L24.0,42.5 L28.0,38.0 L32.0,33.5 L36.0,29.3 L40.0,25.4 L44.0,21.7 L48.0,18.4 L52.0,15.4 L56.0,12.9 L60.0,10.8 L64.0,9.1 L68.0,8.0 L72.0,7.3 L76.0,7.2 L80.0,7.6 L84.0,8.5 L88.0,9.8 L92.0,11.7 L96.0,14.0 L100.0,16.7 L104.0,19.9 L108.0,23.4 L112.0,27.2 L116.0,31.3 L120.0,35.6 L124.0,40.1 L128.0,44.7 L132.0,49.3 L136.0,54.0 L140.0,58.6 L144.0,63.2 L148.0,67.5 L152.0,71.7 L156.0,75.6 L160.0,79.2 L164.0,82.4 L168.0,85.3 L172.0,87.7 L176.0,89.7 L180.0,91.2 L184.0,92.2 L188.0,92.8 L192.0,92.8 L196.0,92.3 L200.0,91.3 L204.0,89.8 L208.0,87.8 L212.0,85.4 L216.0,82.5 L220.0,79.3 L224.0,75.7 L228.0,71.8 L232.0,67.7" stroke="#d01800" stroke-width="2.4" fill="none" opacity="0.5"/><path d="M-4.0,26.2 L0.0,30.2 L4.0,34.5 L8.0,38.9 L12.0,43.5 L16.0,48.2 L20.0,52.9 L24.0,57.5 L28.0,62.0 L32.0,66.5 L36.0,70.7 L40.0,74.6 L44.0,78.3 L48.0,81.6 L52.0,84.6 L56.0,87.1 L60.0,89.2 L64.0,90.9 L68.0,92.0 L72.0,92.7 L76.0,92.8 L80.0,92.4 L84.0,91.5 L88.0,90.2 L92.0,88.3 L96.0,86.0 L100.0,83.3 L104.0,80.1 L108.0,76.6 L112.0,72.8 L116.0,68.7 L120.0,64.4 L124.0,59.9 L128.0,55.3 L132.0,50.7 L136.0,46.0 L140.0,41.4 L144.0,36.8 L148.0,32.5 L152.0,28.3 L156.0,24.4 L160.0,20.8 L164.0,17.6 L168.0,14.7 L172.0,12.3 L176.0,10.3 L180.0,8.8 L184.0,7.8 L188.0,7.2 L192.0,7.2 L196.0,7.7 L200.0,8.7 L204.0,10.2 L208.0,12.2 L212.0,14.6 L216.0,17.5 L220.0,20.7 L224.0,24.3 L228.0,28.2 L232.0,32.3" stroke="#d01800" stroke-width="2.4" fill="none" opacity="0.5"/><path d="M-4.0,75.9 L0.0,72.0 L4.0,68.0 L8.0,63.7 L12.0,59.2 L16.0,54.6 L20.0,50.0 L24.0,45.4 L28.0,40.8 L32.0,36.4 L36.0,32.1 L40.0,28.0 L44.0,24.2 L48.0,20.7 L52.0,17.5 L56.0,14.7 L60.0,12.4 L64.0,10.5 L68.0,9.0 L72.0,8.1 L76.0,7.7 L80.0,7.7 L84.0,8.3 L88.0,9.3 L92.0,10.9 L96.0,12.9 L100.0,15.4 L104.0,18.2 L108.0,21.5 L112.0,25.1 L116.0,29.0 L120.0,33.1 L124.0,37.4 L128.0,41.9 L132.0,46.5 L136.0,51.1 L140.0,55.8 L144.0,60.3 L148.0,64.7 L152.0,69.0 L156.0,73.0 L160.0,76.7 L164.0,80.2 L168.0,83.2 L172.0,85.9 L176.0,88.1 L180.0,89.9 L184.0,91.2 L188.0,92.1 L192.0,92.4 L196.0,92.2 L200.0,91.5 L204.0,90.3 L208.0,88.6 L212.0,86.5 L216.0,84.0 L220.0,81.0 L224.0,77.6 L228.0,74.0 L232.0,70.0" stroke="#d01800" stroke-width="2.4" fill="none" opacity="0.5"/><path d="M-4.0,24.1 L0.0,28.0 L4.0,32.0 L8.0,36.3 L12.0,40.8 L16.0,45.4 L20.0,50.0 L24.0,54.6 L28.0,59.2 L32.0,63.6 L36.0,67.9 L40.0,72.0 L44.0,75.8 L48.0,79.3 L52.0,82.5 L56.0,85.3 L60.0,87.6 L64.0,89.5 L68.0,91.0 L72.0,91.9 L76.0,92.3 L80.0,92.3 L84.0,91.7 L88.0,90.7 L92.0,89.1 L96.0,87.1 L100.0,84.6 L104.0,81.8 L108.0,78.5 L112.0,74.9 L116.0,71.0 L120.0,66.9 L124.0,62.6 L128.0,58.1 L132.0,53.5 L136.0,48.9 L140.0,44.2 L144.0,39.7 L148.0,35.3 L152.0,31.0 L156.0,27.0 L160.0,23.3 L164.0,19.8 L168.0,16.8 L172.0,14.1 L176.0,11.9 L180.0,10.1 L184.0,8.8 L188.0,7.9 L192.0,7.6 L196.0,7.8 L200.0,8.5 L204.0,9.7 L208.0,11.4 L212.0,13.5 L216.0,16.0 L220.0,19.0 L224.0,22.4 L228.0,26.0 L232.0,30.0" stroke="#d01800" stroke-width="2.4" fill="none" opacity="0.5"/><path d="M-4.0,40.8 L0.0,36.2 L4.0,31.7 L8.0,27.5 L12.0,23.6 L16.0,19.9 L20.0,16.6 L24.0,13.7 L28.0,11.3 L32.0,9.3 L36.0,7.8 L40.0,6.8 L44.0,6.3 L48.0,6.3 L52.0,6.9 L56.0,7.9 L60.0,9.5 L64.0,11.5 L68.0,14.1 L72.0,17.0 L76.0,20.3 L80.0,24.0 L84.0,28.0 L88.0,32.3 L92.0,36.7 L96.0,41.4 L100.0,46.1 L104.0,50.9 L108.0,55.7 L112.0,60.4 L116.0,64.9 L120.0,69.3 L124.0,73.5 L128.0,77.4 L132.0,80.9 L136.0,84.1 L140.0,86.9 L144.0,89.3 L148.0,91.1 L152.0,92.5 L156.0,93.4 L160.0,93.8 L164.0,93.6 L168.0,92.9 L172.0,91.7 L176.0,90.0 L180.0,87.9 L184.0,85.2 L188.0,82.2 L192.0,78.8 L196.0,75.0 L200.0,70.9 L204.0,66.6 L208.0,62.1 L212.0,57.4 L216.0,52.7 L220.0,47.9 L224.0,43.2 L228.0,38.5 L232.0,33.9" stroke="#d01800" stroke-width="2.4" fill="none" opacity="0.5"/><path d="M-4.0,59.2 L0.0,63.8 L4.0,68.3 L8.0,72.5 L12.0,76.4 L16.0,80.1 L20.0,83.4 L24.0,86.3 L28.0,88.7 L32.0,90.7 L36.0,92.2 L40.0,93.2 L44.0,93.7 L48.0,93.7 L52.0,93.1 L56.0,92.1 L60.0,90.5 L64.0,88.5 L68.0,85.9 L72.0,83.0 L76.0,79.7 L80.0,76.0 L84.0,72.0 L88.0,67.7 L92.0,63.3 L96.0,58.6 L100.0,53.9 L104.0,49.1 L108.0,44.3 L112.0,39.6 L116.0,35.1 L120.0,30.7 L124.0,26.5 L128.0,22.6 L132.0,19.1 L136.0,15.9 L140.0,13.1 L144.0,10.7 L148.0,8.9 L152.0,7.5 L156.0,6.6 L160.0,6.2 L164.0,6.4 L168.0,7.1 L172.0,8.3 L176.0,10.0 L180.0,12.1 L184.0,14.8 L188.0,17.8 L192.0,21.2 L196.0,25.0 L200.0,29.1 L204.0,33.4 L208.0,37.9 L212.0,42.6 L216.0,47.3 L220.0,52.1 L224.0,56.8 L228.0,61.5 L232.0,66.1" stroke="#d01800" stroke-width="2.4" fill="none" opacity="0.5"/><path d="M-4.0,68.6 L0.0,64.4 L4.0,60.1 L8.0,55.6 L12.0,51.1 L16.0,46.5 L20.0,42.0 L24.0,37.6 L28.0,33.4 L32.0,29.3 L36.0,25.5 L40.0,22.0 L44.0,18.8 L48.0,16.0 L52.0,13.6 L56.0,11.6 L60.0,10.1 L64.0,9.0 L68.0,8.5 L72.0,8.4 L76.0,8.9 L80.0,9.8 L84.0,11.2 L88.0,13.1 L92.0,15.4 L96.0,18.1 L100.0,21.2 L104.0,24.7 L108.0,28.4 L112.0,32.4 L116.0,36.7 L120.0,41.0 L124.0,45.5 L128.0,50.1 L132.0,54.6 L136.0,59.1 L140.0,63.5 L144.0,67.7 L148.0,71.7 L152.0,75.4 L156.0,78.9 L160.0,82.0 L164.0,84.7 L168.0,87.0 L172.0,88.8 L176.0,90.2 L180.0,91.2 L184.0,91.6 L188.0,91.5 L192.0,91.0 L196.0,89.9 L200.0,88.4 L204.0,86.4 L208.0,84.0 L212.0,81.1 L216.0,77.9 L220.0,74.4 L224.0,70.6 L228.0,66.5 L232.0,62.3" stroke="#d01800" stroke-width="2.4" fill="none" opacity="0.5"/><path d="M-4.0,31.4 L0.0,35.6 L4.0,39.9 L8.0,44.4 L12.0,48.9 L16.0,53.5 L20.0,58.0 L24.0,62.4 L28.0,66.6 L32.0,70.7 L36.0,74.5 L40.0,78.0 L44.0,81.2 L48.0,84.0 L52.0,86.4 L56.0,88.4 L60.0,89.9 L64.0,91.0 L68.0,91.5 L72.0,91.6 L76.0,91.1 L80.0,90.2 L84.0,88.8 L88.0,86.9 L92.0,84.6 L96.0,81.9 L100.0,78.8 L104.0,75.3 L108.0,71.6 L112.0,67.6 L116.0,63.3 L120.0,59.0 L124.0,54.5 L128.0,49.9 L132.0,45.4 L136.0,40.9 L140.0,36.5 L144.0,32.3 L148.0,28.3 L152.0,24.6 L156.0,21.1 L160.0,18.0 L164.0,15.3 L168.0,13.0 L172.0,11.2 L176.0,9.8 L180.0,8.8 L184.0,8.4 L188.0,8.5 L192.0,9.0 L196.0,10.1 L200.0,11.6 L204.0,13.6 L208.0,16.0 L212.0,18.9 L216.0,22.1 L220.0,25.6 L224.0,29.4 L228.0,33.5 L232.0,37.7" stroke="#d01800" stroke-width="2.4" fill="none" opacity="0.5"/><path d="M-4.0,41.7 L0.0,37.3 L4.0,33.0 L8.0,28.9 L12.0,25.1 L16.0,21.5 L20.0,18.3 L24.0,15.5 L28.0,13.1 L32.0,11.1 L36.0,9.6 L40.0,8.6 L44.0,8.1 L48.0,8.1 L52.0,8.5 L56.0,9.5 L60.0,10.9 L64.0,12.8 L68.0,15.2 L72.0,18.0 L76.0,21.1 L80.0,24.6 L84.0,28.4 L88.0,32.5 L92.0,36.8 L96.0,41.2 L100.0,45.7 L104.0,50.3 L108.0,54.9 L112.0,59.4 L116.0,63.8 L120.0,68.0 L124.0,72.1 L128.0,75.8 L132.0,79.3 L136.0,82.4 L140.0,85.1 L144.0,87.4 L148.0,89.3 L152.0,90.7 L156.0,91.6 L160.0,92.0 L164.0,91.9 L168.0,91.3 L172.0,90.2 L176.0,88.6 L180.0,86.6 L184.0,84.1 L188.0,81.3 L192.0,78.0 L196.0,74.5 L200.0,70.6 L204.0,66.5 L208.0,62.2 L212.0,57.7 L216.0,53.2 L220.0,48.6 L224.0,44.0 L228.0,39.5 L232.0,35.1" stroke="#d01800" stroke-width="2.4" fill="none" opacity="0.5"/><path d="M-4.0,58.3 L0.0,62.7 L4.0,67.0 L8.0,71.1 L12.0,74.9 L16.0,78.5 L20.0,81.7 L24.0,84.5 L28.0,86.9 L32.0,88.9 L36.0,90.4 L40.0,91.4 L44.0,91.9 L48.0,91.9 L52.0,91.5 L56.0,90.5 L60.0,89.1 L64.0,87.2 L68.0,84.8 L72.0,82.0 L76.0,78.9 L80.0,75.4 L84.0,71.6 L88.0,67.5 L92.0,63.2 L96.0,58.8 L100.0,54.3 L104.0,49.7 L108.0,45.1 L112.0,40.6 L116.0,36.2 L120.0,32.0 L124.0,27.9 L128.0,24.2 L132.0,20.7 L136.0,17.6 L140.0,14.9 L144.0,12.6 L148.0,10.7 L152.0,9.3 L156.0,8.4 L160.0,8.0 L164.0,8.1 L168.0,8.7 L172.0,9.8 L176.0,11.4 L180.0,13.4 L184.0,15.9 L188.0,18.7 L192.0,22.0 L196.0,25.5 L200.0,29.4 L204.0,33.5 L208.0,37.8 L212.0,42.3 L216.0,46.8 L220.0,51.4 L224.0,56.0 L228.0,60.5 L232.0,64.9" stroke="#d01800" stroke-width="2.4" fill="none" opacity="0.5"/><path d="M-4.0,76.6 L0.0,72.6 L4.0,68.2 L8.0,63.7 L12.0,59.0 L16.0,54.2 L20.0,49.3 L24.0,44.5 L28.0,39.7 L32.0,35.0 L36.0,30.5 L40.0,26.3 L44.0,22.3 L48.0,18.7 L52.0,15.4 L56.0,12.5 L60.0,10.1 L64.0,8.2 L68.0,6.8 L72.0,5.9 L76.0,5.5 L80.0,5.6 L84.0,6.3 L88.0,7.5 L92.0,9.2 L96.0,11.4 L100.0,14.0 L104.0,17.1 L108.0,20.5 L112.0,24.4 L116.0,28.5 L120.0,32.9 L124.0,37.5 L128.0,42.2 L132.0,47.0 L136.0,51.9 L140.0,56.7 L144.0,61.5 L148.0,66.1 L152.0,70.6 L156.0,74.7 L160.0,78.6 L164.0,82.2 L168.0,85.4 L172.0,88.1 L176.0,90.4 L180.0,92.2 L184.0,93.5 L188.0,94.3 L192.0,94.5 L196.0,94.3 L200.0,93.5 L204.0,92.2 L208.0,90.3 L212.0,88.0 L216.0,85.3 L220.0,82.1 L224.0,78.5 L228.0,74.6 L232.0,70.4" stroke="#d01800" stroke-width="2.4" fill="none" opacity="0.5"/><path d="M-4.0,23.4 L0.0,27.4 L4.0,31.8 L8.0,36.3 L12.0,41.0 L16.0,45.8 L20.0,50.7 L24.0,55.5 L28.0,60.3 L32.0,65.0 L36.0,69.5 L40.0,73.7 L44.0,77.7 L48.0,81.3 L52.0,84.6 L56.0,87.5 L60.0,89.9 L64.0,91.8 L68.0,93.2 L72.0,94.1 L76.0,94.5 L80.0,94.4 L84.0,93.7 L88.0,92.5 L92.0,90.8 L96.0,88.6 L100.0,86.0 L104.0,82.9 L108.0,79.5 L112.0,75.6 L116.0,71.5 L120.0,67.1 L124.0,62.5 L128.0,57.8 L132.0,53.0 L136.0,48.1 L140.0,43.3 L144.0,38.5 L148.0,33.9 L152.0,29.4 L156.0,25.3 L160.0,21.4 L164.0,17.8 L168.0,14.6 L172.0,11.9 L176.0,9.6 L180.0,7.8 L184.0,6.5 L188.0,5.7 L192.0,5.5 L196.0,5.7 L200.0,6.5 L204.0,7.8 L208.0,9.7 L212.0,12.0 L216.0,14.7 L220.0,17.9 L224.0,21.5 L228.0,25.4 L232.0,29.6" stroke="#d01800" stroke-width="2.4" fill="none" opacity="0.5"/><path d="M-4.0,43.0 L0.0,38.6 L4.0,34.3 L8.0,30.2 L12.0,26.4 L16.0,22.8 L20.0,19.6 L24.0,16.7 L28.0,14.2 L32.0,12.1 L36.0,10.5 L40.0,9.4 L44.0,8.7 L48.0,8.5 L52.0,8.9 L56.0,9.7 L60.0,11.0 L64.0,12.7 L68.0,15.0 L72.0,17.6 L76.0,20.6 L80.0,24.0 L84.0,27.7 L88.0,31.6 L92.0,35.8 L96.0,40.1 L100.0,44.5 L104.0,49.1 L108.0,53.6 L112.0,58.1 L116.0,62.5 L120.0,66.7 L124.0,70.7 L128.0,74.5 L132.0,78.0 L136.0,81.2 L140.0,84.0 L144.0,86.4 L148.0,88.3 L152.0,89.8 L156.0,90.9 L160.0,91.4 L164.0,91.4 L168.0,91.0 L172.0,90.0 L176.0,88.6 L180.0,86.7 L184.0,84.4 L188.0,81.7 L192.0,78.6 L196.0,75.1 L200.0,71.4 L204.0,67.4 L208.0,63.2 L212.0,58.8 L216.0,54.3 L220.0,49.8 L224.0,45.3 L228.0,40.8 L232.0,36.5" stroke="#d01800" stroke-width="2.4" fill="none" opacity="0.5"/><path d="M-4.0,57.0 L0.0,61.4 L4.0,65.7 L8.0,69.8 L12.0,73.6 L16.0,77.2 L20.0,80.4 L24.0,83.3 L28.0,85.8 L32.0,87.9 L36.0,89.5 L40.0,90.6 L44.0,91.3 L48.0,91.5 L52.0,91.1 L56.0,90.3 L60.0,89.0 L64.0,87.3 L68.0,85.0 L72.0,82.4 L76.0,79.4 L80.0,76.0 L84.0,72.3 L88.0,68.4 L92.0,64.2 L96.0,59.9 L100.0,55.5 L104.0,50.9 L108.0,46.4 L112.0,41.9 L116.0,37.5 L120.0,33.3 L124.0,29.3 L128.0,25.5 L132.0,22.0 L136.0,18.8 L140.0,16.0 L144.0,13.6 L148.0,11.7 L152.0,10.2 L156.0,9.1 L160.0,8.6 L164.0,8.6 L168.0,9.0 L172.0,10.0 L176.0,11.4 L180.0,13.3 L184.0,15.6 L188.0,18.3 L192.0,21.4 L196.0,24.9 L200.0,28.6 L204.0,32.6 L208.0,36.8 L212.0,41.2 L216.0,45.7 L220.0,50.2 L224.0,54.7 L228.0,59.2 L232.0,63.5" stroke="#d01800" stroke-width="2.4" fill="none" opacity="0.5"/><path d="M-4.0,42.6 L0.0,38.3 L4.0,34.2 L8.0,30.2 L12.0,26.5 L16.0,23.1 L20.0,19.9 L24.0,17.2 L28.0,14.8 L32.0,12.9 L36.0,11.4 L40.0,10.3 L44.0,9.8 L48.0,9.7 L52.0,10.1 L56.0,10.9 L60.0,12.3 L64.0,14.0 L68.0,16.3 L72.0,18.9 L76.0,21.9 L80.0,25.2 L84.0,28.8 L88.0,32.7 L92.0,36.8 L96.0,41.0 L100.0,45.3 L104.0,49.7 L108.0,54.1 L112.0,58.5 L116.0,62.7 L120.0,66.8 L124.0,70.7 L128.0,74.4 L132.0,77.8 L136.0,80.8 L140.0,83.5 L144.0,85.7 L148.0,87.6 L152.0,88.9 L156.0,89.9 L160.0,90.3 L164.0,90.3 L168.0,89.8 L172.0,88.8 L176.0,87.3 L180.0,85.4 L184.0,83.1 L188.0,80.4 L192.0,77.3 L196.0,73.9 L200.0,70.2 L204.0,66.3 L208.0,62.2 L212.0,57.9 L216.0,53.6 L220.0,49.2 L224.0,44.8 L228.0,40.4 L232.0,36.2" stroke="#d01800" stroke-width="2.4" fill="none" opacity="0.5"/><path d="M-4.0,57.4 L0.0,61.7 L4.0,65.8 L8.0,69.8 L12.0,73.5 L16.0,76.9 L20.0,80.1 L24.0,82.8 L28.0,85.2 L32.0,87.1 L36.0,88.6 L40.0,89.7 L44.0,90.2 L48.0,90.3 L52.0,89.9 L56.0,89.1 L60.0,87.7 L64.0,86.0 L68.0,83.7 L72.0,81.1 L76.0,78.1 L80.0,74.8 L84.0,71.2 L88.0,67.3 L92.0,63.2 L96.0,59.0 L100.0,54.7 L104.0,50.3 L108.0,45.9 L112.0,41.5 L116.0,37.3 L120.0,33.2 L124.0,29.3 L128.0,25.6 L132.0,22.2 L136.0,19.2 L140.0,16.5 L144.0,14.3 L148.0,12.4 L152.0,11.1 L156.0,10.1 L160.0,9.7 L164.0,9.7 L168.0,10.2 L172.0,11.2 L176.0,12.7 L180.0,14.6 L184.0,16.9 L188.0,19.6 L192.0,22.7 L196.0,26.1 L200.0,29.8 L204.0,33.7 L208.0,37.8 L212.0,42.1 L216.0,46.4 L220.0,50.8 L224.0,55.2 L228.0,59.6 L232.0,63.8" stroke="#d01800" stroke-width="2.4" fill="none" opacity="0.5"/><path d="M-4.0,69.0 L0.0,64.9 L4.0,60.6 L8.0,56.3 L12.0,51.8 L16.0,47.3 L20.0,42.9 L24.0,38.5 L28.0,34.3 L32.0,30.2 L36.0,26.4 L40.0,22.9 L44.0,19.7 L48.0,16.8 L52.0,14.4 L56.0,12.4 L60.0,10.8 L64.0,9.7 L68.0,9.1 L72.0,8.9 L76.0,9.3 L80.0,10.1 L84.0,11.5 L88.0,13.2 L92.0,15.5 L96.0,18.1 L100.0,21.1 L104.0,24.4 L108.0,28.1 L112.0,32.0 L116.0,36.1 L120.0,40.4 L124.0,44.9 L128.0,49.3 L132.0,53.8 L136.0,58.2 L140.0,62.6 L144.0,66.8 L148.0,70.8 L152.0,74.5 L156.0,78.0 L160.0,81.1 L164.0,83.8 L168.0,86.1 L172.0,88.1 L176.0,89.5 L180.0,90.5 L184.0,91.0 L188.0,91.0 L192.0,90.5 L196.0,89.6 L200.0,88.1 L204.0,86.3 L208.0,83.9 L212.0,81.2 L216.0,78.1 L220.0,74.7 L224.0,70.9 L228.0,67.0 L232.0,62.8" stroke="#d01800" stroke-width="2.4" fill="none" opacity="0.5"/><path d="M-4.0,31.0 L0.0,35.1 L4.0,39.4 L8.0,43.7 L12.0,48.2 L16.0,52.7 L20.0,57.1 L24.0,61.5 L28.0,65.7 L32.0,69.8 L36.0,73.6 L40.0,77.1 L44.0,80.3 L48.0,83.2 L52.0,85.6 L56.0,87.6 L60.0,89.2 L64.0,90.3 L68.0,90.9 L72.0,91.1 L76.0,90.7 L80.0,89.9 L84.0,88.5 L88.0,86.8 L92.0,84.5 L96.0,81.9 L100.0,78.9 L104.0,75.6 L108.0,71.9 L112.0,68.0 L116.0,63.9 L120.0,59.6 L124.0,55.1 L128.0,50.7 L132.0,46.2 L136.0,41.8 L140.0,37.4 L144.0,33.2 L148.0,29.2 L152.0,25.5 L156.0,22.0 L160.0,18.9 L164.0,16.2 L168.0,13.9 L172.0,11.9 L176.0,10.5 L180.0,9.5 L184.0,9.0 L188.0,9.0 L192.0,9.5 L196.0,10.4 L200.0,11.9 L204.0,13.7 L208.0,16.1 L212.0,18.8 L216.0,21.9 L220.0,25.3 L224.0,29.1 L228.0,33.0 L232.0,37.2" stroke="#d01800" stroke-width="2.4" fill="none" opacity="0.5"/><path d="M-4.0,60.7 L0.0,56.1 L4.0,51.5 L8.0,46.8 L12.0,42.2 L16.0,37.7 L20.0,33.3 L24.0,29.1 L28.0,25.2 L32.0,21.5 L36.0,18.2 L40.0,15.3 L44.0,12.8 L48.0,10.7 L52.0,9.2 L56.0,8.0 L60.0,7.4 L64.0,7.3 L68.0,7.7 L72.0,8.7 L76.0,10.1 L80.0,12.0 L84.0,14.3 L88.0,17.1 L92.0,20.2 L96.0,23.7 L100.0,27.5 L104.0,31.6 L108.0,36.0 L112.0,40.4 L116.0,45.0 L120.0,49.7 L124.0,54.3 L128.0,58.9 L132.0,63.4 L136.0,67.8 L140.0,71.9 L144.0,75.8 L148.0,79.3 L152.0,82.5 L156.0,85.4 L160.0,87.8 L164.0,89.7 L168.0,91.2 L172.0,92.2 L176.0,92.6 L180.0,92.6 L184.0,92.1 L188.0,91.0 L192.0,89.5 L196.0,87.5 L200.0,85.1 L204.0,82.2 L208.0,78.9 L212.0,75.3 L216.0,71.5 L220.0,67.3 L224.0,62.9 L228.0,58.4 L232.0,53.8" stroke="#d01800" stroke-width="2.4" fill="none" opacity="0.5"/><path d="M-4.0,39.3 L0.0,43.9 L4.0,48.5 L8.0,53.2 L12.0,57.8 L16.0,62.3 L20.0,66.7 L24.0,70.9 L28.0,74.8 L32.0,78.5 L36.0,81.8 L40.0,84.7 L44.0,87.2 L48.0,89.3 L52.0,90.8 L56.0,92.0 L60.0,92.6 L64.0,92.7 L68.0,92.3 L72.0,91.3 L76.0,89.9 L80.0,88.0 L84.0,85.7 L88.0,82.9 L92.0,79.8 L96.0,76.3 L100.0,72.5 L104.0,68.4 L108.0,64.0 L112.0,59.6 L116.0,55.0 L120.0,50.3 L124.0,45.7 L128.0,41.1 L132.0,36.6 L136.0,32.2 L140.0,28.1 L144.0,24.2 L148.0,20.7 L152.0,17.5 L156.0,14.6 L160.0,12.2 L164.0,10.3 L168.0,8.8 L172.0,7.8 L176.0,7.4 L180.0,7.4 L184.0,7.9 L188.0,9.0 L192.0,10.5 L196.0,12.5 L200.0,14.9 L204.0,17.8 L208.0,21.1 L212.0,24.7 L216.0,28.5 L220.0,32.7 L224.0,37.1 L228.0,41.6 L232.0,46.2" stroke="#d01800" stroke-width="2.4" fill="none" opacity="0.5"/><path d="M-4.0,45.6 L0.0,40.8 L4.0,36.1 L8.0,31.6 L12.0,27.3 L16.0,23.3 L20.0,19.6 L24.0,16.2 L28.0,13.3 L32.0,10.8 L36.0,8.8 L40.0,7.2 L44.0,6.2 L48.0,5.7 L52.0,5.7 L56.0,6.2 L60.0,7.3 L64.0,8.9 L68.0,10.9 L72.0,13.5 L76.0,16.4 L80.0,19.8 L84.0,23.5 L88.0,27.6 L92.0,31.9 L96.0,36.4 L100.0,41.1 L104.0,45.9 L108.0,50.8 L112.0,55.6 L116.0,60.4 L120.0,65.0 L124.0,69.5 L128.0,73.7 L132.0,77.7 L136.0,81.3 L140.0,84.5 L144.0,87.4 L148.0,89.8 L152.0,91.7 L156.0,93.1 L160.0,94.0 L164.0,94.4 L168.0,94.2 L172.0,93.6 L176.0,92.4 L180.0,90.7 L184.0,88.5 L188.0,85.8 L192.0,82.8 L196.0,79.3 L200.0,75.5 L204.0,71.4 L208.0,67.0 L212.0,62.4 L216.0,57.7 L220.0,52.9 L224.0,48.0 L228.0,43.2 L232.0,38.5" stroke="#d01800" stroke-width="2.4" fill="none" opacity="0.5"/><path d="M-4.0,54.4 L0.0,59.2 L4.0,63.9 L8.0,68.4 L12.0,72.7 L16.0,76.7 L20.0,80.4 L24.0,83.8 L28.0,86.7 L32.0,89.2 L36.0,91.2 L40.0,92.8 L44.0,93.8 L48.0,94.3 L52.0,94.3 L56.0,93.8 L60.0,92.7 L64.0,91.1 L68.0,89.1 L72.0,86.5 L76.0,83.6 L80.0,80.2 L84.0,76.5 L88.0,72.4 L92.0,68.1 L96.0,63.6 L100.0,58.9 L104.0,54.1 L108.0,49.2 L112.0,44.4 L116.0,39.6 L120.0,35.0 L124.0,30.5 L128.0,26.3 L132.0,22.3 L136.0,18.7 L140.0,15.5 L144.0,12.6 L148.0,10.2 L152.0,8.3 L156.0,6.9 L160.0,6.0 L164.0,5.6 L168.0,5.8 L172.0,6.4 L176.0,7.6 L180.0,9.3 L184.0,11.5 L188.0,14.2 L192.0,17.2 L196.0,20.7 L200.0,24.5 L204.0,28.6 L208.0,33.0 L212.0,37.6 L216.0,42.3 L220.0,47.1 L224.0,52.0 L228.0,56.8 L232.0,61.5" stroke="#d01800" stroke-width="2.4" fill="none" opacity="0.5"/><path d="M-4.0,43.2 L0.0,38.5 L4.0,33.9 L8.0,29.6 L12.0,25.5 L16.0,21.7 L20.0,18.2 L24.0,15.1 L28.0,12.4 L32.0,10.2 L36.0,8.4 L40.0,7.1 L44.0,6.4 L48.0,6.1 L52.0,6.4 L56.0,7.2 L60.0,8.6 L64.0,10.4 L68.0,12.7 L72.0,15.4 L76.0,18.5 L80.0,22.1 L84.0,25.9 L88.0,30.1 L92.0,34.4 L96.0,39.0 L100.0,43.7 L104.0,48.5 L108.0,53.3 L112.0,58.0 L116.0,62.7 L120.0,67.2 L124.0,71.5 L128.0,75.5 L132.0,79.2 L136.0,82.6 L140.0,85.6 L144.0,88.2 L148.0,90.3 L152.0,92.0 L156.0,93.1 L160.0,93.7 L164.0,93.8 L168.0,93.4 L172.0,92.5 L176.0,91.0 L180.0,89.1 L184.0,86.7 L188.0,83.9 L192.0,80.6 L196.0,77.0 L200.0,73.1 L204.0,68.9 L208.0,64.4 L212.0,59.8 L216.0,55.1 L220.0,50.3 L224.0,45.6 L228.0,40.8 L232.0,36.2" stroke="#d01800" stroke-width="2.4" fill="none" opacity="0.5"/><path d="M-4.0,56.8 L0.0,61.5 L4.0,66.1 L8.0,70.4 L12.0,74.5 L16.0,78.3 L20.0,81.8 L24.0,84.9 L28.0,87.6 L32.0,89.8 L36.0,91.6 L40.0,92.9 L44.0,93.6 L48.0,93.9 L52.0,93.6 L56.0,92.8 L60.0,91.4 L64.0,89.6 L68.0,87.3 L72.0,84.6 L76.0,81.5 L80.0,77.9 L84.0,74.1 L88.0,69.9 L92.0,65.6 L96.0,61.0 L100.0,56.3 L104.0,51.5 L108.0,46.7 L112.0,42.0 L116.0,37.3 L120.0,32.8 L124.0,28.5 L128.0,24.5 L132.0,20.8 L136.0,17.4 L140.0,14.4 L144.0,11.8 L148.0,9.7 L152.0,8.0 L156.0,6.9 L160.0,6.3 L164.0,6.2 L168.0,6.6 L172.0,7.5 L176.0,9.0 L180.0,10.9 L184.0,13.3 L188.0,16.1 L192.0,19.4 L196.0,23.0 L200.0,26.9 L204.0,31.1 L208.0,35.6 L212.0,40.2 L216.0,44.9 L220.0,49.7 L224.0,54.4 L228.0,59.2 L232.0,63.8" stroke="#d01800" stroke-width="2.4" fill="none" opacity="0.5"/><path d="M-4.0,42.8 L0.0,38.3 L4.0,33.9 L8.0,29.7 L12.0,25.7 L16.0,22.1 L20.0,18.7 L24.0,15.8 L28.0,13.2 L32.0,11.1 L36.0,9.5 L40.0,8.3 L44.0,7.6 L48.0,7.5 L52.0,7.8 L56.0,8.7 L60.0,10.0 L64.0,11.8 L68.0,14.1 L72.0,16.8 L76.0,19.9 L80.0,23.4 L84.0,27.1 L88.0,31.2 L92.0,35.5 L96.0,39.9 L100.0,44.5 L104.0,49.1 L108.0,53.7 L112.0,58.3 L116.0,62.8 L120.0,67.2 L124.0,71.3 L128.0,75.2 L132.0,78.8 L136.0,82.0 L140.0,84.9 L144.0,87.3 L148.0,89.3 L152.0,90.9 L156.0,91.9 L160.0,92.4 L164.0,92.5 L168.0,92.0 L172.0,91.0 L176.0,89.6 L180.0,87.6 L184.0,85.3 L188.0,82.5 L192.0,79.3 L196.0,75.7 L200.0,71.9 L204.0,67.8 L208.0,63.4 L212.0,59.0 L216.0,54.4 L220.0,49.7 L224.0,45.1 L228.0,40.5 L232.0,36.1" stroke="#d01800" stroke-width="2.4" fill="none" opacity="0.5"/><path d="M-4.0,57.2 L0.0,61.7 L4.0,66.1 L8.0,70.3 L12.0,74.3 L16.0,77.9 L20.0,81.3 L24.0,84.2 L28.0,86.8 L32.0,88.9 L36.0,90.5 L40.0,91.7 L44.0,92.4 L48.0,92.5 L52.0,92.2 L56.0,91.3 L60.0,90.0 L64.0,88.2 L68.0,85.9 L72.0,83.2 L76.0,80.1 L80.0,76.6 L84.0,72.9 L88.0,68.8 L92.0,64.5 L96.0,60.1 L100.0,55.5 L104.0,50.9 L108.0,46.3 L112.0,41.7 L116.0,37.2 L120.0,32.8 L124.0,28.7 L128.0,24.8 L132.0,21.2 L136.0,18.0 L140.0,15.1 L144.0,12.7 L148.0,10.7 L152.0,9.1 L156.0,8.1 L160.0,7.6 L164.0,7.5 L168.0,8.0 L172.0,9.0 L176.0,10.4 L180.0,12.4 L184.0,14.7 L188.0,17.5 L192.0,20.7 L196.0,24.3 L200.0,28.1 L204.0,32.2 L208.0,36.6 L212.0,41.0 L216.0,45.6 L220.0,50.3 L224.0,54.9 L228.0,59.5 L232.0,63.9" stroke="#d01800" stroke-width="2.4" fill="none" opacity="0.5"/><path d="M-4.0,46.8 L0.0,42.3 L4.0,37.8 L8.0,33.6 L12.0,29.5 L16.0,25.7 L20.0,22.1 L24.0,18.9 L28.0,16.1 L32.0,13.7 L36.0,11.7 L40.0,10.1 L44.0,9.1 L48.0,8.5 L52.0,8.4 L56.0,8.8 L60.0,9.7 L64.0,11.1 L68.0,13.0 L72.0,15.3 L76.0,18.0 L80.0,21.1 L84.0,24.5 L88.0,28.2 L92.0,32.2 L96.0,36.4 L100.0,40.8 L104.0,45.3 L108.0,49.8 L112.0,54.4 L116.0,58.9 L120.0,63.2 L124.0,67.5 L128.0,71.5 L132.0,75.2 L136.0,78.7 L140.0,81.8 L144.0,84.5 L148.0,86.9 L152.0,88.8 L156.0,90.2 L160.0,91.1 L164.0,91.6 L168.0,91.5 L172.0,91.0 L176.0,90.0 L180.0,88.5 L184.0,86.5 L188.0,84.1 L192.0,81.3 L196.0,78.1 L200.0,74.6 L204.0,70.8 L208.0,66.7 L212.0,62.5 L216.0,58.1 L220.0,53.6 L224.0,49.0 L228.0,44.5 L232.0,40.0" stroke="#d01800" stroke-width="2.4" fill="none" opacity="0.5"/><path d="M-4.0,53.2 L0.0,57.7 L4.0,62.2 L8.0,66.4 L12.0,70.5 L16.0,74.3 L20.0,77.9 L24.0,81.1 L28.0,83.9 L32.0,86.3 L36.0,88.3 L40.0,89.9 L44.0,90.9 L48.0,91.5 L52.0,91.6 L56.0,91.2 L60.0,90.3 L64.0,88.9 L68.0,87.0 L72.0,84.7 L76.0,82.0 L80.0,78.9 L84.0,75.5 L88.0,71.8 L92.0,67.8 L96.0,63.6 L100.0,59.2 L104.0,54.7 L108.0,50.2 L112.0,45.6 L116.0,41.1 L120.0,36.8 L124.0,32.5 L128.0,28.5 L132.0,24.8 L136.0,21.3 L140.0,18.2 L144.0,15.5 L148.0,13.1 L152.0,11.2 L156.0,9.8 L160.0,8.9 L164.0,8.4 L168.0,8.5 L172.0,9.0 L176.0,10.0 L180.0,11.5 L184.0,13.5 L188.0,15.9 L192.0,18.7 L196.0,21.9 L200.0,25.4 L204.0,29.2 L208.0,33.3 L212.0,37.5 L216.0,41.9 L220.0,46.4 L224.0,51.0 L228.0,55.5 L232.0,60.0" stroke="#d01800" stroke-width="2.4" fill="none" opacity="0.5"/><path d="M-4.0,51.6 L0.0,47.0 L4.0,42.5 L8.0,38.1 L12.0,33.8 L16.0,29.7 L20.0,25.9 L24.0,22.3 L28.0,19.1 L32.0,16.2 L36.0,13.7 L40.0,11.7 L44.0,10.2 L48.0,9.1 L52.0,8.5 L56.0,8.3 L60.0,8.7 L64.0,9.6 L68.0,11.0 L72.0,12.8 L76.0,15.1 L80.0,17.8 L84.0,20.8 L88.0,24.2 L92.0,28.0 L96.0,32.0 L100.0,36.2 L104.0,40.5 L108.0,45.0 L112.0,49.6 L116.0,54.1 L120.0,58.6 L124.0,63.0 L128.0,67.2 L132.0,71.3 L136.0,75.1 L140.0,78.5 L144.0,81.7 L148.0,84.4 L152.0,86.8 L156.0,88.7 L160.0,90.2 L164.0,91.1 L168.0,91.6 L172.0,91.6 L176.0,91.1 L180.0,90.1 L184.0,88.6 L188.0,86.7 L192.0,84.3 L196.0,81.5 L200.0,78.4 L204.0,74.9 L208.0,71.1 L212.0,67.0 L216.0,62.8 L220.0,58.4 L224.0,53.9 L228.0,49.3 L232.0,44.8" stroke="#ff3c00" stroke-width="1.8" fill="none" opacity="0.5" style="mix-blend-mode:screen"/><path d="M-4.0,48.4 L0.0,53.0 L4.0,57.5 L8.0,61.9 L12.0,66.2 L16.0,70.3 L20.0,74.1 L24.0,77.7 L28.0,80.9 L32.0,83.8 L36.0,86.3 L40.0,88.3 L44.0,89.8 L48.0,90.9 L52.0,91.5 L56.0,91.7 L60.0,91.3 L64.0,90.4 L68.0,89.0 L72.0,87.2 L76.0,84.9 L80.0,82.2 L84.0,79.2 L88.0,75.8 L92.0,72.0 L96.0,68.0 L100.0,63.8 L104.0,59.5 L108.0,55.0 L112.0,50.4 L116.0,45.9 L120.0,41.4 L124.0,37.0 L128.0,32.8 L132.0,28.7 L136.0,24.9 L140.0,21.5 L144.0,18.3 L148.0,15.6 L152.0,13.2 L156.0,11.3 L160.0,9.8 L164.0,8.9 L168.0,8.4 L172.0,8.4 L176.0,8.9 L180.0,9.9 L184.0,11.4 L188.0,13.3 L192.0,15.7 L196.0,18.5 L200.0,21.6 L204.0,25.1 L208.0,28.9 L212.0,33.0 L216.0,37.2 L220.0,41.6 L224.0,46.1 L228.0,50.7 L232.0,55.2" stroke="#ff3c00" stroke-width="1.8" fill="none" opacity="0.5" style="mix-blend-mode:screen"/><path d="M-4.0,63.5 L0.0,59.2 L4.0,54.7 L8.0,50.2 L12.0,45.7 L16.0,41.2 L20.0,36.9 L24.0,32.7 L28.0,28.7 L32.0,25.0 L36.0,21.5 L40.0,18.4 L44.0,15.7 L48.0,13.4 L52.0,11.5 L56.0,10.1 L60.0,9.2 L64.0,8.7 L68.0,8.8 L72.0,9.3 L76.0,10.3 L80.0,11.8 L84.0,13.7 L88.0,16.1 L92.0,18.9 L96.0,22.1 L100.0,25.5 L104.0,29.3 L108.0,33.3 L112.0,37.6 L116.0,41.9 L120.0,46.4 L124.0,50.9 L128.0,55.4 L132.0,59.9 L136.0,64.2 L140.0,68.3 L144.0,72.3 L148.0,75.9 L152.0,79.3 L156.0,82.3 L160.0,84.9 L164.0,87.1 L168.0,88.9 L172.0,90.2 L176.0,91.0 L180.0,91.3 L184.0,91.2 L188.0,90.5 L192.0,89.4 L196.0,87.8 L200.0,85.7 L204.0,83.2 L208.0,80.3 L212.0,77.1 L216.0,73.5 L220.0,69.7 L224.0,65.6 L228.0,61.3 L232.0,56.9" stroke="#ff3c00" stroke-width="1.8" fill="none" opacity="0.5" style="mix-blend-mode:screen"/><path d="M-4.0,36.5 L0.0,40.8 L4.0,45.3 L8.0,49.8 L12.0,54.3 L16.0,58.8 L20.0,63.1 L24.0,67.3 L28.0,71.3 L32.0,75.0 L36.0,78.5 L40.0,81.6 L44.0,84.3 L48.0,86.6 L52.0,88.5 L56.0,89.9 L60.0,90.8 L64.0,91.3 L68.0,91.2 L72.0,90.7 L76.0,89.7 L80.0,88.2 L84.0,86.3 L88.0,83.9 L92.0,81.1 L96.0,77.9 L100.0,74.5 L104.0,70.7 L108.0,66.7 L112.0,62.4 L116.0,58.1 L120.0,53.6 L124.0,49.1 L128.0,44.6 L132.0,40.1 L136.0,35.8 L140.0,31.7 L144.0,27.7 L148.0,24.1 L152.0,20.7 L156.0,17.7 L160.0,15.1 L164.0,12.9 L168.0,11.1 L172.0,9.8 L176.0,9.0 L180.0,8.7 L184.0,8.8 L188.0,9.5 L192.0,10.6 L196.0,12.2 L200.0,14.3 L204.0,16.8 L208.0,19.7 L212.0,22.9 L216.0,26.5 L220.0,30.3 L224.0,34.4 L228.0,38.7 L232.0,43.1" stroke="#ff3c00" stroke-width="1.8" fill="none" opacity="0.5" style="mix-blend-mode:screen"/><path d="M-4.0,59.7 L0.0,55.1 L4.0,50.4 L8.0,45.8 L12.0,41.2 L16.0,36.7 L20.0,32.4 L24.0,28.2 L28.0,24.4 L32.0,20.8 L36.0,17.6 L40.0,14.8 L44.0,12.3 L48.0,10.4 L52.0,8.9 L56.0,7.9 L60.0,7.4 L64.0,7.4 L68.0,7.9 L72.0,9.0 L76.0,10.5 L80.0,12.5 L84.0,14.9 L88.0,17.8 L92.0,21.0 L96.0,24.6 L100.0,28.5 L104.0,32.6 L108.0,37.0 L112.0,41.5 L116.0,46.1 L120.0,50.7 L124.0,55.4 L128.0,59.9 L132.0,64.4 L136.0,68.7 L140.0,72.8 L144.0,76.6 L148.0,80.0 L152.0,83.2 L156.0,85.9 L160.0,88.2 L164.0,90.0 L168.0,91.4 L172.0,92.3 L176.0,92.6 L180.0,92.5 L184.0,91.8 L188.0,90.7 L192.0,89.1 L196.0,87.0 L200.0,84.4 L204.0,81.5 L208.0,78.1 L212.0,74.5 L216.0,70.5 L220.0,66.3 L224.0,61.9 L228.0,57.4 L232.0,52.8" stroke="#ff3c00" stroke-width="1.8" fill="none" opacity="0.5" style="mix-blend-mode:screen"/><path d="M-4.0,40.3 L0.0,44.9 L4.0,49.6 L8.0,54.2 L12.0,58.8 L16.0,63.3 L20.0,67.6 L24.0,71.8 L28.0,75.6 L32.0,79.2 L36.0,82.4 L40.0,85.2 L44.0,87.7 L48.0,89.6 L52.0,91.1 L56.0,92.1 L60.0,92.6 L64.0,92.6 L68.0,92.1 L72.0,91.0 L76.0,89.5 L80.0,87.5 L84.0,85.1 L88.0,82.2 L92.0,79.0 L96.0,75.4 L100.0,71.5 L104.0,67.4 L108.0,63.0 L112.0,58.5 L116.0,53.9 L120.0,49.3 L124.0,44.6 L128.0,40.1 L132.0,35.6 L136.0,31.3 L140.0,27.2 L144.0,23.4 L148.0,20.0 L152.0,16.8 L156.0,14.1 L160.0,11.8 L164.0,10.0 L168.0,8.6 L172.0,7.7 L176.0,7.4 L180.0,7.5 L184.0,8.2 L188.0,9.3 L192.0,10.9 L196.0,13.0 L200.0,15.6 L204.0,18.5 L208.0,21.9 L212.0,25.5 L216.0,29.5 L220.0,33.7 L224.0,38.1 L228.0,42.6 L232.0,47.2" stroke="#ff3c00" stroke-width="1.8" fill="none" opacity="0.5" style="mix-blend-mode:screen"/><path d="M-4.0,41.3 L0.0,36.8 L4.0,32.3 L8.0,28.1 L12.0,24.2 L16.0,20.6 L20.0,17.3 L24.0,14.4 L28.0,11.9 L32.0,9.9 L36.0,8.4 L40.0,7.3 L44.0,6.8 L48.0,6.8 L52.0,7.3 L56.0,8.3 L60.0,9.8 L64.0,11.8 L68.0,14.2 L72.0,17.1 L76.0,20.4 L80.0,24.0 L84.0,27.9 L88.0,32.1 L92.0,36.5 L96.0,41.1 L100.0,45.7 L104.0,50.5 L108.0,55.2 L112.0,59.8 L116.0,64.4 L120.0,68.7 L124.0,72.9 L128.0,76.7 L132.0,80.3 L136.0,83.5 L140.0,86.3 L144.0,88.6 L148.0,90.5 L152.0,91.9 L156.0,92.9 L160.0,93.3 L164.0,93.1 L168.0,92.5 L172.0,91.4 L176.0,89.8 L180.0,87.6 L184.0,85.1 L188.0,82.1 L192.0,78.8 L196.0,75.1 L200.0,71.1 L204.0,66.8 L208.0,62.4 L212.0,57.8 L216.0,53.1 L220.0,48.4 L224.0,43.7 L228.0,39.0 L232.0,34.5" stroke="#ff3c00" stroke-width="1.8" fill="none" opacity="0.5" style="mix-blend-mode:screen"/><path d="M-4.0,58.7 L0.0,63.2 L4.0,67.7 L8.0,71.9 L12.0,75.8 L16.0,79.4 L20.0,82.7 L24.0,85.6 L28.0,88.1 L32.0,90.1 L36.0,91.6 L40.0,92.7 L44.0,93.2 L48.0,93.2 L52.0,92.7 L56.0,91.7 L60.0,90.2 L64.0,88.2 L68.0,85.8 L72.0,82.9 L76.0,79.6 L80.0,76.0 L84.0,72.1 L88.0,67.9 L92.0,63.5 L96.0,58.9 L100.0,54.3 L104.0,49.5 L108.0,44.8 L112.0,40.2 L116.0,35.6 L120.0,31.3 L124.0,27.1 L128.0,23.3 L132.0,19.7 L136.0,16.5 L140.0,13.7 L144.0,11.4 L148.0,9.5 L152.0,8.1 L156.0,7.1 L160.0,6.7 L164.0,6.9 L168.0,7.5 L172.0,8.6 L176.0,10.2 L180.0,12.4 L184.0,14.9 L188.0,17.9 L192.0,21.2 L196.0,24.9 L200.0,28.9 L204.0,33.2 L208.0,37.6 L212.0,42.2 L216.0,46.9 L220.0,51.6 L224.0,56.3 L228.0,61.0 L232.0,65.5" stroke="#ff3c00" stroke-width="1.8" fill="none" opacity="0.5" style="mix-blend-mode:screen"/><path d="M-4.0,40.6 L0.0,36.1 L4.0,31.8 L8.0,27.6 L12.0,23.8 L16.0,20.2 L20.0,17.0 L24.0,14.2 L28.0,11.8 L32.0,9.9 L36.0,8.5 L40.0,7.5 L44.0,7.1 L48.0,7.2 L52.0,7.7 L56.0,8.8 L60.0,10.4 L64.0,12.5 L68.0,15.0 L72.0,17.9 L76.0,21.2 L80.0,24.8 L84.0,28.8 L88.0,33.0 L92.0,37.4 L96.0,41.9 L100.0,46.6 L104.0,51.2 L108.0,55.9 L112.0,60.5 L116.0,65.0 L120.0,69.3 L124.0,73.4 L128.0,77.2 L132.0,80.6 L136.0,83.7 L140.0,86.4 L144.0,88.7 L148.0,90.5 L152.0,91.8 L156.0,92.6 L160.0,92.9 L164.0,92.7 L168.0,92.0 L172.0,90.8 L176.0,89.1 L180.0,87.0 L184.0,84.4 L188.0,81.3 L192.0,78.0 L196.0,74.2 L200.0,70.2 L204.0,66.0 L208.0,61.5 L212.0,56.9 L216.0,52.3 L220.0,47.6 L224.0,42.9 L228.0,38.3 L232.0,33.9" stroke="#ff3c00" stroke-width="1.8" fill="none" opacity="0.5" style="mix-blend-mode:screen"/><path d="M-4.0,59.4 L0.0,63.9 L4.0,68.2 L8.0,72.4 L12.0,76.2 L16.0,79.8 L20.0,83.0 L24.0,85.8 L28.0,88.2 L32.0,90.1 L36.0,91.5 L40.0,92.5 L44.0,92.9 L48.0,92.8 L52.0,92.3 L56.0,91.2 L60.0,89.6 L64.0,87.5 L68.0,85.0 L72.0,82.1 L76.0,78.8 L80.0,75.2 L84.0,71.2 L88.0,67.0 L92.0,62.6 L96.0,58.1 L100.0,53.4 L104.0,48.8 L108.0,44.1 L112.0,39.5 L116.0,35.0 L120.0,30.7 L124.0,26.6 L128.0,22.8 L132.0,19.4 L136.0,16.3 L140.0,13.6 L144.0,11.3 L148.0,9.5 L152.0,8.2 L156.0,7.4 L160.0,7.1 L164.0,7.3 L168.0,8.0 L172.0,9.2 L176.0,10.9 L180.0,13.0 L184.0,15.6 L188.0,18.7 L192.0,22.0 L196.0,25.8 L200.0,29.8 L204.0,34.0 L208.0,38.5 L212.0,43.1 L216.0,47.7 L220.0,52.4 L224.0,57.1 L228.0,61.7 L232.0,66.1" stroke="#ff3c00" stroke-width="1.8" fill="none" opacity="0.5" style="mix-blend-mode:screen"/><path d="M-4.0,42.1 L0.0,37.7 L4.0,33.5 L8.0,29.5 L12.0,25.7 L16.0,22.2 L20.0,19.0 L24.0,16.2 L28.0,13.8 L32.0,11.8 L36.0,10.3 L40.0,9.2 L44.0,8.7 L48.0,8.6 L52.0,9.1 L56.0,10.0 L60.0,11.4 L64.0,13.2 L68.0,15.5 L72.0,18.2 L76.0,21.3 L80.0,24.8 L84.0,28.5 L88.0,32.5 L92.0,36.7 L96.0,41.0 L100.0,45.5 L104.0,50.0 L108.0,54.5 L112.0,59.0 L116.0,63.3 L120.0,67.5 L124.0,71.5 L128.0,75.2 L132.0,78.7 L136.0,81.8 L140.0,84.5 L144.0,86.8 L148.0,88.6 L152.0,90.0 L156.0,90.9 L160.0,91.4 L164.0,91.3 L168.0,90.8 L172.0,89.7 L176.0,88.2 L180.0,86.2 L184.0,83.8 L188.0,81.0 L192.0,77.9 L196.0,74.3 L200.0,70.5 L204.0,66.5 L208.0,62.3 L212.0,57.9 L216.0,53.4 L220.0,48.9 L224.0,44.4 L228.0,39.9 L232.0,35.6" stroke="#ff3c00" stroke-width="1.8" fill="none" opacity="0.5" style="mix-blend-mode:screen"/><path d="M-4.0,57.9 L0.0,62.3 L4.0,66.5 L8.0,70.5 L12.0,74.3 L16.0,77.8 L20.0,81.0 L24.0,83.8 L28.0,86.2 L32.0,88.2 L36.0,89.7 L40.0,90.8 L44.0,91.3 L48.0,91.4 L52.0,90.9 L56.0,90.0 L60.0,88.6 L64.0,86.8 L68.0,84.5 L72.0,81.8 L76.0,78.7 L80.0,75.2 L84.0,71.5 L88.0,67.5 L92.0,63.3 L96.0,59.0 L100.0,54.5 L104.0,50.0 L108.0,45.5 L112.0,41.0 L116.0,36.7 L120.0,32.5 L124.0,28.5 L128.0,24.8 L132.0,21.3 L136.0,18.2 L140.0,15.5 L144.0,13.2 L148.0,11.4 L152.0,10.0 L156.0,9.1 L160.0,8.6 L164.0,8.7 L168.0,9.2 L172.0,10.3 L176.0,11.8 L180.0,13.8 L184.0,16.2 L188.0,19.0 L192.0,22.1 L196.0,25.7 L200.0,29.5 L204.0,33.5 L208.0,37.7 L212.0,42.1 L216.0,46.6 L220.0,51.1 L224.0,55.6 L228.0,60.1 L232.0,64.4" stroke="#ff3c00" stroke-width="1.8" fill="none" opacity="0.5" style="mix-blend-mode:screen"/><path d="M-4.0,55.7 L0.0,50.9 L4.0,46.0 L8.0,41.2 L12.0,36.4 L16.0,31.9 L20.0,27.5 L24.0,23.4 L28.0,19.7 L32.0,16.3 L36.0,13.3 L40.0,10.7 L44.0,8.6 L48.0,7.0 L52.0,5.9 L56.0,5.4 L60.0,5.3 L64.0,5.8 L68.0,6.9 L72.0,8.4 L76.0,10.5 L80.0,13.0 L84.0,15.9 L88.0,19.3 L92.0,23.0 L96.0,27.1 L100.0,31.4 L104.0,35.9 L108.0,40.7 L112.0,45.5 L116.0,50.4 L120.0,55.2 L124.0,60.0 L128.0,64.7 L132.0,69.3 L136.0,73.5 L140.0,77.5 L144.0,81.2 L148.0,84.5 L152.0,87.4 L156.0,89.9 L160.0,91.8 L164.0,93.3 L168.0,94.3 L172.0,94.7 L176.0,94.6 L180.0,94.0 L184.0,92.8 L188.0,91.1 L192.0,89.0 L196.0,86.3 L200.0,83.3 L204.0,79.8 L208.0,76.0 L212.0,71.9 L216.0,67.5 L220.0,62.9 L224.0,58.2 L228.0,53.3 L232.0,48.4" stroke="#ff3c00" stroke-width="1.8" fill="none" opacity="0.5" style="mix-blend-mode:screen"/><path d="M-4.0,44.3 L0.0,49.1 L4.0,54.0 L8.0,58.8 L12.0,63.6 L16.0,68.1 L20.0,72.5 L24.0,76.6 L28.0,80.3 L32.0,83.7 L36.0,86.7 L40.0,89.3 L44.0,91.4 L48.0,93.0 L52.0,94.1 L56.0,94.6 L60.0,94.7 L64.0,94.2 L68.0,93.1 L72.0,91.6 L76.0,89.5 L80.0,87.0 L84.0,84.1 L88.0,80.7 L92.0,77.0 L96.0,72.9 L100.0,68.6 L104.0,64.1 L108.0,59.3 L112.0,54.5 L116.0,49.6 L120.0,44.8 L124.0,40.0 L128.0,35.3 L132.0,30.7 L136.0,26.5 L140.0,22.5 L144.0,18.8 L148.0,15.5 L152.0,12.6 L156.0,10.1 L160.0,8.2 L164.0,6.7 L168.0,5.7 L172.0,5.3 L176.0,5.4 L180.0,6.0 L184.0,7.2 L188.0,8.9 L192.0,11.0 L196.0,13.7 L200.0,16.7 L204.0,20.2 L208.0,24.0 L212.0,28.1 L216.0,32.5 L220.0,37.1 L224.0,41.8 L228.0,46.7 L232.0,51.6" stroke="#ff3c00" stroke-width="1.8" fill="none" opacity="0.5" style="mix-blend-mode:screen"/><path d="M-4.0,44.0 L0.0,39.5 L4.0,35.2 L8.0,31.0 L12.0,27.0 L16.0,23.3 L20.0,19.9 L24.0,16.9 L28.0,14.3 L32.0,12.1 L36.0,10.3 L40.0,9.1 L44.0,8.3 L48.0,8.0 L52.0,8.2 L56.0,8.9 L60.0,10.1 L64.0,11.8 L68.0,13.9 L72.0,16.5 L76.0,19.5 L80.0,22.8 L84.0,26.5 L88.0,30.4 L92.0,34.6 L96.0,38.9 L100.0,43.4 L104.0,48.0 L108.0,52.5 L112.0,57.1 L116.0,61.6 L120.0,65.9 L124.0,70.0 L128.0,74.0 L132.0,77.6 L136.0,80.9 L140.0,83.8 L144.0,86.3 L148.0,88.4 L152.0,90.0 L156.0,91.2 L160.0,91.8 L164.0,92.0 L168.0,91.7 L172.0,90.8 L176.0,89.5 L180.0,87.7 L184.0,85.5 L188.0,82.8 L192.0,79.7 L196.0,76.3 L200.0,72.6 L204.0,68.6 L208.0,64.4 L212.0,60.0 L216.0,55.5 L220.0,50.9 L224.0,46.3 L228.0,41.8 L232.0,37.3" stroke="#ff3c00" stroke-width="1.8" fill="none" opacity="0.5" style="mix-blend-mode:screen"/><path d="M-4.0,56.0 L0.0,60.5 L4.0,64.8 L8.0,69.0 L12.0,73.0 L16.0,76.7 L20.0,80.1 L24.0,83.1 L28.0,85.7 L32.0,87.9 L36.0,89.7 L40.0,90.9 L44.0,91.7 L48.0,92.0 L52.0,91.8 L56.0,91.1 L60.0,89.9 L64.0,88.2 L68.0,86.1 L72.0,83.5 L76.0,80.5 L80.0,77.2 L84.0,73.5 L88.0,69.6 L92.0,65.4 L96.0,61.1 L100.0,56.6 L104.0,52.0 L108.0,47.5 L112.0,42.9 L116.0,38.4 L120.0,34.1 L124.0,30.0 L128.0,26.0 L132.0,22.4 L136.0,19.1 L140.0,16.2 L144.0,13.7 L148.0,11.6 L152.0,10.0 L156.0,8.8 L160.0,8.2 L164.0,8.0 L168.0,8.3 L172.0,9.2 L176.0,10.5 L180.0,12.3 L184.0,14.5 L188.0,17.2 L192.0,20.3 L196.0,23.7 L200.0,27.4 L204.0,31.4 L208.0,35.6 L212.0,40.0 L216.0,44.5 L220.0,49.1 L224.0,53.7 L228.0,58.2 L232.0,62.7" stroke="#ff3c00" stroke-width="1.8" fill="none" opacity="0.5" style="mix-blend-mode:screen"/><path d="M-4.0,63.9 L0.0,59.1 L4.0,54.2 L8.0,49.3 L12.0,44.3 L16.0,39.5 L20.0,34.7 L24.0,30.2 L28.0,25.9 L32.0,21.8 L36.0,18.1 L40.0,14.8 L44.0,11.9 L48.0,9.5 L52.0,7.5 L56.0,6.1 L60.0,5.1 L64.0,4.7 L68.0,4.9 L72.0,5.6 L76.0,6.8 L80.0,8.5 L84.0,10.8 L88.0,13.4 L92.0,16.6 L96.0,20.1 L100.0,24.0 L104.0,28.2 L108.0,32.6 L112.0,37.3 L116.0,42.1 L120.0,47.0 L124.0,52.0 L128.0,56.9 L132.0,61.7 L136.0,66.4 L140.0,70.9 L144.0,75.2 L148.0,79.1 L152.0,82.7 L156.0,86.0 L160.0,88.7 L164.0,91.1 L168.0,92.9 L172.0,94.2 L176.0,95.0 L180.0,95.3 L184.0,95.0 L188.0,94.2 L192.0,92.8 L196.0,91.0 L200.0,88.6 L204.0,85.8 L208.0,82.6 L212.0,79.0 L216.0,75.0 L220.0,70.7 L224.0,66.2 L228.0,61.5 L232.0,56.7" stroke="#ff3c00" stroke-width="1.8" fill="none" opacity="0.5" style="mix-blend-mode:screen"/><path d="M-4.0,36.1 L0.0,40.9 L4.0,45.8 L8.0,50.7 L12.0,55.7 L16.0,60.5 L20.0,65.3 L24.0,69.8 L28.0,74.1 L32.0,78.2 L36.0,81.9 L40.0,85.2 L44.0,88.1 L48.0,90.5 L52.0,92.5 L56.0,93.9 L60.0,94.9 L64.0,95.3 L68.0,95.1 L72.0,94.4 L76.0,93.2 L80.0,91.5 L84.0,89.2 L88.0,86.6 L92.0,83.4 L96.0,79.9 L100.0,76.0 L104.0,71.8 L108.0,67.4 L112.0,62.7 L116.0,57.9 L120.0,53.0 L124.0,48.0 L128.0,43.1 L132.0,38.3 L136.0,33.6 L140.0,29.1 L144.0,24.8 L148.0,20.9 L152.0,17.3 L156.0,14.0 L160.0,11.3 L164.0,8.9 L168.0,7.1 L172.0,5.8 L176.0,5.0 L180.0,4.7 L184.0,5.0 L188.0,5.8 L192.0,7.2 L196.0,9.0 L200.0,11.4 L204.0,14.2 L208.0,17.4 L212.0,21.0 L216.0,25.0 L220.0,29.3 L224.0,33.8 L228.0,38.5 L232.0,43.3" stroke="#ff3c00" stroke-width="1.8" fill="none" opacity="0.5" style="mix-blend-mode:screen"/><path d="M-4.0,61.3 L0.0,56.7 L4.0,52.0 L8.0,47.4 L12.0,42.7 L16.0,38.2 L20.0,33.8 L24.0,29.5 L28.0,25.6 L32.0,21.9 L36.0,18.5 L40.0,15.6 L44.0,13.0 L48.0,10.9 L52.0,9.2 L56.0,8.1 L60.0,7.4 L64.0,7.2 L68.0,7.6 L72.0,8.4 L76.0,9.8 L80.0,11.6 L84.0,13.9 L88.0,16.6 L92.0,19.8 L96.0,23.2 L100.0,27.0 L104.0,31.1 L108.0,35.4 L112.0,39.9 L116.0,44.5 L120.0,49.1 L124.0,53.8 L128.0,58.4 L132.0,62.9 L136.0,67.3 L140.0,71.5 L144.0,75.4 L148.0,79.0 L152.0,82.3 L156.0,85.1 L160.0,87.6 L164.0,89.6 L168.0,91.1 L172.0,92.2 L176.0,92.7 L180.0,92.7 L184.0,92.3 L188.0,91.3 L192.0,89.8 L196.0,87.8 L200.0,85.4 L204.0,82.6 L208.0,79.4 L212.0,75.8 L216.0,72.0 L220.0,67.8 L224.0,63.5 L228.0,59.0 L232.0,54.4" stroke="#ff3c00" stroke-width="1.8" fill="none" opacity="0.5" style="mix-blend-mode:screen"/><path d="M-4.0,38.7 L0.0,43.3 L4.0,48.0 L8.0,52.6 L12.0,57.3 L16.0,61.8 L20.0,66.2 L24.0,70.5 L28.0,74.4 L32.0,78.1 L36.0,81.5 L40.0,84.4 L44.0,87.0 L48.0,89.1 L52.0,90.8 L56.0,91.9 L60.0,92.6 L64.0,92.8 L68.0,92.4 L72.0,91.6 L76.0,90.2 L80.0,88.4 L84.0,86.1 L88.0,83.4 L92.0,80.2 L96.0,76.8 L100.0,73.0 L104.0,68.9 L108.0,64.6 L112.0,60.1 L116.0,55.5 L120.0,50.9 L124.0,46.2 L128.0,41.6 L132.0,37.1 L136.0,32.7 L140.0,28.5 L144.0,24.6 L148.0,21.0 L152.0,17.7 L156.0,14.9 L160.0,12.4 L164.0,10.4 L168.0,8.9 L172.0,7.8 L176.0,7.3 L180.0,7.3 L184.0,7.7 L188.0,8.7 L192.0,10.2 L196.0,12.2 L200.0,14.6 L204.0,17.4 L208.0,20.6 L212.0,24.2 L216.0,28.0 L220.0,32.2 L224.0,36.5 L228.0,41.0 L232.0,45.6" stroke="#ff3c00" stroke-width="1.8" fill="none" opacity="0.5" style="mix-blend-mode:screen"/><path d="M-4.0,74.1 L0.0,70.4 L4.0,66.3 L8.0,62.1 L12.0,57.7 L16.0,53.3 L20.0,48.8 L24.0,44.3 L28.0,39.9 L32.0,35.6 L36.0,31.5 L40.0,27.6 L44.0,23.9 L48.0,20.6 L52.0,17.6 L56.0,15.0 L60.0,12.9 L64.0,11.1 L68.0,9.9 L72.0,9.1 L76.0,8.8 L80.0,9.0 L84.0,9.7 L88.0,10.8 L92.0,12.5 L96.0,14.5 L100.0,17.1 L104.0,19.9 L108.0,23.2 L112.0,26.8 L116.0,30.6 L120.0,34.7 L124.0,39.0 L128.0,43.4 L132.0,47.8 L136.0,52.3 L140.0,56.8 L144.0,61.2 L148.0,65.5 L152.0,69.5 L156.0,73.4 L160.0,76.9 L164.0,80.2 L168.0,83.1 L172.0,85.5 L176.0,87.6 L180.0,89.2 L184.0,90.4 L188.0,91.0 L192.0,91.2 L196.0,90.9 L200.0,90.1 L204.0,88.8 L208.0,87.1 L212.0,84.9 L216.0,82.3 L220.0,79.3 L224.0,75.9 L228.0,72.3 L232.0,68.4" stroke="#ff3c00" stroke-width="1.8" fill="none" opacity="0.5" style="mix-blend-mode:screen"/><path d="M-4.0,25.9 L0.0,29.6 L4.0,33.7 L8.0,37.9 L12.0,42.3 L16.0,46.7 L20.0,51.2 L24.0,55.7 L28.0,60.1 L32.0,64.4 L36.0,68.5 L40.0,72.4 L44.0,76.1 L48.0,79.4 L52.0,82.4 L56.0,85.0 L60.0,87.1 L64.0,88.9 L68.0,90.1 L72.0,90.9 L76.0,91.2 L80.0,91.0 L84.0,90.3 L88.0,89.2 L92.0,87.5 L96.0,85.5 L100.0,82.9 L104.0,80.1 L108.0,76.8 L112.0,73.2 L116.0,69.4 L120.0,65.3 L124.0,61.0 L128.0,56.6 L132.0,52.2 L136.0,47.7 L140.0,43.2 L144.0,38.8 L148.0,34.5 L152.0,30.5 L156.0,26.6 L160.0,23.1 L164.0,19.8 L168.0,16.9 L172.0,14.5 L176.0,12.4 L180.0,10.8 L184.0,9.6 L188.0,9.0 L192.0,8.8 L196.0,9.1 L200.0,9.9 L204.0,11.2 L208.0,12.9 L212.0,15.1 L216.0,17.7 L220.0,20.7 L224.0,24.1 L228.0,27.7 L232.0,31.6" stroke="#ff3c00" stroke-width="1.8" fill="none" opacity="0.5" style="mix-blend-mode:screen"/><path d="M-4.0,71.0 L0.0,66.9 L4.0,62.6 L8.0,58.1 L12.0,53.5 L16.0,48.9 L20.0,44.3 L24.0,39.7 L28.0,35.3 L32.0,31.1 L36.0,27.1 L40.0,23.3 L44.0,19.9 L48.0,16.8 L52.0,14.2 L56.0,11.9 L60.0,10.2 L64.0,8.8 L68.0,8.0 L72.0,7.7 L76.0,7.9 L80.0,8.6 L84.0,9.8 L88.0,11.4 L92.0,13.5 L96.0,16.1 L100.0,19.1 L104.0,22.4 L108.0,26.1 L112.0,30.0 L116.0,34.2 L120.0,38.6 L124.0,43.1 L128.0,47.7 L132.0,52.3 L136.0,56.9 L140.0,61.4 L144.0,65.8 L148.0,69.9 L152.0,73.9 L156.0,77.6 L160.0,80.9 L164.0,83.9 L168.0,86.4 L172.0,88.6 L176.0,90.2 L180.0,91.4 L184.0,92.1 L188.0,92.3 L192.0,92.0 L196.0,91.2 L200.0,89.9 L204.0,88.1 L208.0,85.9 L212.0,83.2 L216.0,80.1 L220.0,76.7 L224.0,73.0 L228.0,69.0 L232.0,64.7" stroke="#ff3c00" stroke-width="1.8" fill="none" opacity="0.5" style="mix-blend-mode:screen"/><path d="M-4.0,29.0 L0.0,33.1 L4.0,37.4 L8.0,41.9 L12.0,46.5 L16.0,51.1 L20.0,55.7 L24.0,60.3 L28.0,64.7 L32.0,68.9 L36.0,72.9 L40.0,76.7 L44.0,80.1 L48.0,83.2 L52.0,85.8 L56.0,88.1 L60.0,89.8 L64.0,91.2 L68.0,92.0 L72.0,92.3 L76.0,92.1 L80.0,91.4 L84.0,90.2 L88.0,88.6 L92.0,86.5 L96.0,83.9 L100.0,80.9 L104.0,77.6 L108.0,73.9 L112.0,70.0 L116.0,65.8 L120.0,61.4 L124.0,56.9 L128.0,52.3 L132.0,47.7 L136.0,43.1 L140.0,38.6 L144.0,34.2 L148.0,30.1 L152.0,26.1 L156.0,22.4 L160.0,19.1 L164.0,16.1 L168.0,13.6 L172.0,11.4 L176.0,9.8 L180.0,8.6 L184.0,7.9 L188.0,7.7 L192.0,8.0 L196.0,8.8 L200.0,10.1 L204.0,11.9 L208.0,14.1 L212.0,16.8 L216.0,19.9 L220.0,23.3 L224.0,27.0 L228.0,31.0 L232.0,35.3" stroke="#ff3c00" stroke-width="1.8" fill="none" opacity="0.5" style="mix-blend-mode:screen"/><path d="M-4.0,44.9 L0.0,40.4 L4.0,36.1 L8.0,31.9 L12.0,27.9 L16.0,24.2 L20.0,20.8 L24.0,17.8 L28.0,15.1 L32.0,12.8 L36.0,11.0 L40.0,9.7 L44.0,8.9 L48.0,8.5 L52.0,8.6 L56.0,9.2 L60.0,10.3 L64.0,11.9 L68.0,14.0 L72.0,16.4 L76.0,19.3 L80.0,22.5 L84.0,26.1 L88.0,29.9 L92.0,34.0 L96.0,38.3 L100.0,42.7 L104.0,47.2 L108.0,51.7 L112.0,56.3 L116.0,60.7 L120.0,65.0 L124.0,69.1 L128.0,73.1 L132.0,76.7 L136.0,80.0 L140.0,82.9 L144.0,85.5 L148.0,87.6 L152.0,89.3 L156.0,90.6 L160.0,91.3 L164.0,91.5 L168.0,91.3 L172.0,90.5 L176.0,89.3 L180.0,87.6 L184.0,85.5 L188.0,82.9 L192.0,79.9 L196.0,76.6 L200.0,73.0 L204.0,69.1 L208.0,64.9 L212.0,60.6 L216.0,56.2 L220.0,51.7 L224.0,47.1 L228.0,42.6 L232.0,38.2" stroke="#ff3c00" stroke-width="1.8" fill="none" opacity="0.5" style="mix-blend-mode:screen"/><path d="M-4.0,55.1 L0.0,59.6 L4.0,63.9 L8.0,68.1 L12.0,72.1 L16.0,75.8 L20.0,79.2 L24.0,82.2 L28.0,84.9 L32.0,87.2 L36.0,89.0 L40.0,90.3 L44.0,91.1 L48.0,91.5 L52.0,91.4 L56.0,90.8 L60.0,89.7 L64.0,88.1 L68.0,86.0 L72.0,83.6 L76.0,80.7 L80.0,77.5 L84.0,73.9 L88.0,70.1 L92.0,66.0 L96.0,61.7 L100.0,57.3 L104.0,52.8 L108.0,48.3 L112.0,43.7 L116.0,39.3 L120.0,35.0 L124.0,30.9 L128.0,26.9 L132.0,23.3 L136.0,20.0 L140.0,17.1 L144.0,14.5 L148.0,12.4 L152.0,10.7 L156.0,9.4 L160.0,8.7 L164.0,8.5 L168.0,8.7 L172.0,9.5 L176.0,10.7 L180.0,12.4 L184.0,14.5 L188.0,17.1 L192.0,20.1 L196.0,23.4 L200.0,27.0 L204.0,30.9 L208.0,35.1 L212.0,39.4 L216.0,43.8 L220.0,48.3 L224.0,52.9 L228.0,57.4 L232.0,61.8" stroke="#ff3c00" stroke-width="1.8" fill="none" opacity="0.5" style="mix-blend-mode:screen"/><path d="M-4.0,51.1 L0.0,46.2 L4.0,41.4 L8.0,36.6 L12.0,32.1 L16.0,27.7 L20.0,23.6 L24.0,19.8 L28.0,16.4 L32.0,13.4 L36.0,10.8 L40.0,8.7 L44.0,7.1 L48.0,6.0 L52.0,5.4 L56.0,5.4 L60.0,5.9 L64.0,6.9 L68.0,8.4 L72.0,10.4 L76.0,12.9 L80.0,15.8 L84.0,19.2 L88.0,22.9 L92.0,26.9 L96.0,31.2 L100.0,35.8 L104.0,40.5 L108.0,45.3 L112.0,50.1 L116.0,55.0 L120.0,59.8 L124.0,64.5 L128.0,69.0 L132.0,73.3 L136.0,77.4 L140.0,81.0 L144.0,84.4 L148.0,87.3 L152.0,89.7 L156.0,91.7 L160.0,93.2 L164.0,94.2 L168.0,94.6 L172.0,94.6 L176.0,93.9 L180.0,92.8 L184.0,91.2 L188.0,89.0 L192.0,86.4 L196.0,83.4 L200.0,79.9 L204.0,76.1 L208.0,72.0 L212.0,67.7 L216.0,63.1 L220.0,58.3 L224.0,53.5 L228.0,48.6 L232.0,43.8" stroke="#ff3c00" stroke-width="1.8" fill="none" opacity="0.5" style="mix-blend-mode:screen"/><path d="M-4.0,48.9 L0.0,53.8 L4.0,58.6 L8.0,63.4 L12.0,67.9 L16.0,72.3 L20.0,76.4 L24.0,80.2 L28.0,83.6 L32.0,86.6 L36.0,89.2 L40.0,91.3 L44.0,92.9 L48.0,94.0 L52.0,94.6 L56.0,94.6 L60.0,94.1 L64.0,93.1 L68.0,91.6 L72.0,89.6 L76.0,87.1 L80.0,84.2 L84.0,80.8 L88.0,77.1 L92.0,73.1 L96.0,68.8 L100.0,64.2 L104.0,59.5 L108.0,54.7 L112.0,49.9 L116.0,45.0 L120.0,40.2 L124.0,35.5 L128.0,31.0 L132.0,26.7 L136.0,22.6 L140.0,19.0 L144.0,15.6 L148.0,12.7 L152.0,10.3 L156.0,8.3 L160.0,6.8 L164.0,5.8 L168.0,5.4 L172.0,5.4 L176.0,6.1 L180.0,7.2 L184.0,8.8 L188.0,11.0 L192.0,13.6 L196.0,16.6 L200.0,20.1 L204.0,23.9 L208.0,28.0 L212.0,32.3 L216.0,36.9 L220.0,41.7 L224.0,46.5 L228.0,51.4 L232.0,56.2" stroke="#ff3c00" stroke-width="1.8" fill="none" opacity="0.5" style="mix-blend-mode:screen"/><path d="M-4.0,46.0 L0.0,41.3 L4.0,36.7 L8.0,32.3 L12.0,28.0 L16.0,24.0 L20.0,20.4 L24.0,17.1 L28.0,14.1 L32.0,11.6 L36.0,9.6 L40.0,8.1 L44.0,7.0 L48.0,6.5 L52.0,6.4 L56.0,6.9 L60.0,7.9 L64.0,9.5 L68.0,11.5 L72.0,13.9 L76.0,16.8 L80.0,20.1 L84.0,23.7 L88.0,27.7 L92.0,31.9 L96.0,36.3 L100.0,40.9 L104.0,45.6 L108.0,50.4 L112.0,55.2 L116.0,59.8 L120.0,64.4 L124.0,68.8 L128.0,73.0 L132.0,76.9 L136.0,80.5 L140.0,83.7 L144.0,86.5 L148.0,88.9 L152.0,90.8 L156.0,92.3 L160.0,93.2 L164.0,93.6 L168.0,93.5 L172.0,92.9 L176.0,91.7 L180.0,90.1 L184.0,88.0 L188.0,85.4 L192.0,82.4 L196.0,79.0 L200.0,75.3 L204.0,71.3 L208.0,67.0 L212.0,62.5 L216.0,57.9 L220.0,53.2 L224.0,48.4 L228.0,43.7 L232.0,39.0" stroke="#ff3c00" stroke-width="1.8" fill="none" opacity="0.5" style="mix-blend-mode:screen"/><path d="M-4.0,54.0 L0.0,58.7 L4.0,63.3 L8.0,67.7 L12.0,72.0 L16.0,76.0 L20.0,79.6 L24.0,82.9 L28.0,85.9 L32.0,88.4 L36.0,90.4 L40.0,91.9 L44.0,93.0 L48.0,93.5 L52.0,93.6 L56.0,93.1 L60.0,92.1 L64.0,90.5 L68.0,88.5 L72.0,86.1 L76.0,83.2 L80.0,79.9 L84.0,76.3 L88.0,72.3 L92.0,68.1 L96.0,63.7 L100.0,59.1 L104.0,54.4 L108.0,49.6 L112.0,44.8 L116.0,40.2 L120.0,35.6 L124.0,31.2 L128.0,27.0 L132.0,23.1 L136.0,19.5 L140.0,16.3 L144.0,13.5 L148.0,11.1 L152.0,9.2 L156.0,7.7 L160.0,6.8 L164.0,6.4 L168.0,6.5 L172.0,7.1 L176.0,8.3 L180.0,9.9 L184.0,12.0 L188.0,14.6 L192.0,17.6 L196.0,21.0 L200.0,24.7 L204.0,28.7 L208.0,33.0 L212.0,37.5 L216.0,42.1 L220.0,46.8 L224.0,51.6 L228.0,56.3 L232.0,61.0" stroke="#ff3c00" stroke-width="1.8" fill="none" opacity="0.5" style="mix-blend-mode:screen"/><path d="M-4.0,63.5 L0.0,59.0 L4.0,54.4 L8.0,49.7 L12.0,45.1 L16.0,40.5 L20.0,36.0 L24.0,31.7 L28.0,27.6 L32.0,23.8 L36.0,20.3 L40.0,17.1 L44.0,14.3 L48.0,12.0 L52.0,10.1 L56.0,8.7 L60.0,7.8 L64.0,7.4 L68.0,7.4 L72.0,8.0 L76.0,9.1 L80.0,10.7 L84.0,12.8 L88.0,15.3 L92.0,18.2 L96.0,21.5 L100.0,25.1 L104.0,29.0 L108.0,33.2 L112.0,37.6 L116.0,42.1 L120.0,46.8 L124.0,51.4 L128.0,56.1 L132.0,60.6 L136.0,65.1 L140.0,69.3 L144.0,73.4 L148.0,77.1 L152.0,80.6 L156.0,83.6 L160.0,86.3 L164.0,88.5 L168.0,90.3 L172.0,91.6 L176.0,92.4 L180.0,92.7 L184.0,92.5 L188.0,91.7 L192.0,90.5 L196.0,88.8 L200.0,86.6 L204.0,84.0 L208.0,81.0 L212.0,77.6 L216.0,73.9 L220.0,69.9 L224.0,65.7 L228.0,61.3 L232.0,56.7" stroke="#ff3c00" stroke-width="1.8" fill="none" opacity="0.5" style="mix-blend-mode:screen"/><path d="M-4.0,36.5 L0.0,41.0 L4.0,45.6 L8.0,50.3 L12.0,54.9 L16.0,59.5 L20.0,64.0 L24.0,68.3 L28.0,72.4 L32.0,76.2 L36.0,79.7 L40.0,82.9 L44.0,85.7 L48.0,88.0 L52.0,89.9 L56.0,91.3 L60.0,92.2 L64.0,92.6 L68.0,92.6 L72.0,92.0 L76.0,90.9 L80.0,89.3 L84.0,87.2 L88.0,84.7 L92.0,81.8 L96.0,78.5 L100.0,74.9 L104.0,71.0 L108.0,66.8 L112.0,62.4 L116.0,57.9 L120.0,53.2 L124.0,48.6 L128.0,43.9 L132.0,39.4 L136.0,34.9 L140.0,30.7 L144.0,26.6 L148.0,22.9 L152.0,19.4 L156.0,16.4 L160.0,13.7 L164.0,11.5 L168.0,9.7 L172.0,8.4 L176.0,7.6 L180.0,7.3 L184.0,7.5 L188.0,8.3 L192.0,9.5 L196.0,11.2 L200.0,13.4 L204.0,16.0 L208.0,19.0 L212.0,22.4 L216.0,26.1 L220.0,30.1 L224.0,34.3 L228.0,38.7 L232.0,43.3" stroke="#ff3c00" stroke-width="1.8" fill="none" opacity="0.5" style="mix-blend-mode:screen"/><path d="M-4.0,59.8 L0.0,55.4 L4.0,50.9 L8.0,46.4 L12.0,41.9 L16.0,37.5 L20.0,33.3 L24.0,29.3 L28.0,25.5 L32.0,22.1 L36.0,18.9 L40.0,16.1 L44.0,13.8 L48.0,11.8 L52.0,10.3 L56.0,9.3 L60.0,8.8 L64.0,8.8 L68.0,9.2 L72.0,10.2 L76.0,11.6 L80.0,13.5 L84.0,15.8 L88.0,18.5 L92.0,21.6 L96.0,25.0 L100.0,28.8 L104.0,32.8 L108.0,36.9 L112.0,41.3 L116.0,45.7 L120.0,50.3 L124.0,54.8 L128.0,59.2 L132.0,63.5 L136.0,67.7 L140.0,71.7 L144.0,75.4 L148.0,78.8 L152.0,81.8 L156.0,84.5 L160.0,86.8 L164.0,88.6 L168.0,90.0 L172.0,90.9 L176.0,91.3 L180.0,91.2 L184.0,90.6 L188.0,89.5 L192.0,88.0 L196.0,86.0 L200.0,83.6 L204.0,80.8 L208.0,77.6 L212.0,74.1 L216.0,70.3 L220.0,66.2 L224.0,62.0 L228.0,57.6 L232.0,53.1" stroke="#ff3c00" stroke-width="1.8" fill="none" opacity="0.5" style="mix-blend-mode:screen"/><path d="M-4.0,40.2 L0.0,44.6 L4.0,49.1 L8.0,53.6 L12.0,58.1 L16.0,62.5 L20.0,66.7 L24.0,70.7 L28.0,74.5 L32.0,77.9 L36.0,81.1 L40.0,83.9 L44.0,86.2 L48.0,88.2 L52.0,89.7 L56.0,90.7 L60.0,91.2 L64.0,91.2 L68.0,90.8 L72.0,89.8 L76.0,88.4 L80.0,86.5 L84.0,84.2 L88.0,81.5 L92.0,78.4 L96.0,75.0 L100.0,71.2 L104.0,67.2 L108.0,63.1 L112.0,58.7 L116.0,54.3 L120.0,49.7 L124.0,45.2 L128.0,40.8 L132.0,36.5 L136.0,32.3 L140.0,28.3 L144.0,24.6 L148.0,21.2 L152.0,18.2 L156.0,15.5 L160.0,13.2 L164.0,11.4 L168.0,10.0 L172.0,9.1 L176.0,8.7 L180.0,8.8 L184.0,9.4 L188.0,10.5 L192.0,12.0 L196.0,14.0 L200.0,16.4 L204.0,19.2 L208.0,22.4 L212.0,25.9 L216.0,29.7 L220.0,33.8 L224.0,38.0 L228.0,42.4 L232.0,46.9" stroke="#ff3c00" stroke-width="1.8" fill="none" opacity="0.5" style="mix-blend-mode:screen"/><path d="M-4.0,41.7 L0.0,37.2 L4.0,32.9 L8.0,28.9 L12.0,25.0 L16.0,21.5 L20.0,18.3 L24.0,15.5 L28.0,13.1 L32.0,11.2 L36.0,9.7 L40.0,8.7 L44.0,8.1 L48.0,8.1 L52.0,8.6 L56.0,9.6 L60.0,11.0 L64.0,13.0 L68.0,15.3 L72.0,18.1 L76.0,21.2 L80.0,24.7 L84.0,28.5 L88.0,32.6 L92.0,36.9 L96.0,41.3 L100.0,45.8 L104.0,50.4 L108.0,55.0 L112.0,59.5 L116.0,63.9 L120.0,68.1 L124.0,72.1 L128.0,75.9 L132.0,79.3 L136.0,82.4 L140.0,85.1 L144.0,87.4 L148.0,89.2 L152.0,90.6 L156.0,91.5 L160.0,91.9 L164.0,91.8 L168.0,91.2 L172.0,90.1 L176.0,88.5 L180.0,86.5 L184.0,84.0 L188.0,81.2 L192.0,77.9 L196.0,74.3 L200.0,70.5 L204.0,66.4 L208.0,62.0 L212.0,57.6 L216.0,53.1 L220.0,48.5 L224.0,43.9 L228.0,39.4 L232.0,35.1" stroke="#ff3c00" stroke-width="1.8" fill="none" opacity="0.5" style="mix-blend-mode:screen"/><path d="M-4.0,58.3 L0.0,62.8 L4.0,67.1 L8.0,71.1 L12.0,75.0 L16.0,78.5 L20.0,81.7 L24.0,84.5 L28.0,86.9 L32.0,88.8 L36.0,90.3 L40.0,91.3 L44.0,91.9 L48.0,91.9 L52.0,91.4 L56.0,90.4 L60.0,89.0 L64.0,87.0 L68.0,84.7 L72.0,81.9 L76.0,78.8 L80.0,75.3 L84.0,71.5 L88.0,67.4 L92.0,63.1 L96.0,58.7 L100.0,54.2 L104.0,49.6 L108.0,45.0 L112.0,40.5 L116.0,36.1 L120.0,31.9 L124.0,27.9 L128.0,24.1 L132.0,20.7 L136.0,17.6 L140.0,14.9 L144.0,12.6 L148.0,10.8 L152.0,9.4 L156.0,8.5 L160.0,8.1 L164.0,8.2 L168.0,8.8 L172.0,9.9 L176.0,11.5 L180.0,13.5 L184.0,16.0 L188.0,18.8 L192.0,22.1 L196.0,25.7 L200.0,29.5 L204.0,33.6 L208.0,38.0 L212.0,42.4 L216.0,46.9 L220.0,51.5 L224.0,56.1 L228.0,60.6 L232.0,64.9" stroke="#ff3c00" stroke-width="1.8" fill="none" opacity="0.5" style="mix-blend-mode:screen"/><path d="M-4.0,65.1 L0.0,60.6 L4.0,56.0 L8.0,51.4 L12.0,46.7 L16.0,42.0 L20.0,37.5 L24.0,33.1 L28.0,28.9 L32.0,24.9 L36.0,21.3 L40.0,18.0 L44.0,15.0 L48.0,12.5 L52.0,10.5 L56.0,8.9 L60.0,7.8 L64.0,7.2 L68.0,7.1 L72.0,7.5 L76.0,8.5 L80.0,9.9 L84.0,11.8 L88.0,14.2 L92.0,17.0 L96.0,20.1 L100.0,23.7 L104.0,27.5 L108.0,31.7 L112.0,36.0 L116.0,40.5 L120.0,45.1 L124.0,49.8 L128.0,54.5 L132.0,59.1 L136.0,63.7 L140.0,68.0 L144.0,72.1 L148.0,76.0 L152.0,79.6 L156.0,82.8 L160.0,85.6 L164.0,88.0 L168.0,90.0 L172.0,91.4 L176.0,92.4 L180.0,92.9 L184.0,92.8 L188.0,92.3 L192.0,91.2 L196.0,89.7 L200.0,87.6 L204.0,85.2 L208.0,82.3 L212.0,79.0 L216.0,75.4 L220.0,71.4 L224.0,67.3 L228.0,62.9 L232.0,58.3" stroke="#ff3c00" stroke-width="1.8" fill="none" opacity="0.5" style="mix-blend-mode:screen"/><path d="M-4.0,34.9 L0.0,39.4 L4.0,44.0 L8.0,48.6 L12.0,53.3 L16.0,58.0 L20.0,62.5 L24.0,66.9 L28.0,71.1 L32.0,75.1 L36.0,78.7 L40.0,82.0 L44.0,85.0 L48.0,87.5 L52.0,89.5 L56.0,91.1 L60.0,92.2 L64.0,92.8 L68.0,92.9 L72.0,92.5 L76.0,91.5 L80.0,90.1 L84.0,88.2 L88.0,85.8 L92.0,83.0 L96.0,79.9 L100.0,76.3 L104.0,72.5 L108.0,68.3 L112.0,64.0 L116.0,59.5 L120.0,54.9 L124.0,50.2 L128.0,45.5 L132.0,40.9 L136.0,36.3 L140.0,32.0 L144.0,27.9 L148.0,24.0 L152.0,20.4 L156.0,17.2 L160.0,14.4 L164.0,12.0 L168.0,10.0 L172.0,8.6 L176.0,7.6 L180.0,7.1 L184.0,7.2 L188.0,7.7 L192.0,8.8 L196.0,10.3 L200.0,12.4 L204.0,14.8 L208.0,17.7 L212.0,21.0 L216.0,24.6 L220.0,28.6 L224.0,32.7 L228.0,37.1 L232.0,41.7" stroke="#ff3c00" stroke-width="1.8" fill="none" opacity="0.5" style="mix-blend-mode:screen"/><path d="M-4.0,51.3 L0.0,46.5 L4.0,41.8 L8.0,37.2 L12.0,32.7 L16.0,28.4 L20.0,24.4 L24.0,20.7 L28.0,17.4 L32.0,14.4 L36.0,11.9 L40.0,9.8 L44.0,8.2 L48.0,7.1 L52.0,6.5 L56.0,6.4 L60.0,6.8 L64.0,7.8 L68.0,9.3 L72.0,11.2 L76.0,13.6 L80.0,16.5 L84.0,19.7 L88.0,23.3 L92.0,27.3 L96.0,31.5 L100.0,35.9 L104.0,40.5 L108.0,45.2 L112.0,49.9 L116.0,54.7 L120.0,59.4 L124.0,64.0 L128.0,68.4 L132.0,72.6 L136.0,76.5 L140.0,80.2 L144.0,83.4 L148.0,86.3 L152.0,88.7 L156.0,90.7 L160.0,92.2 L164.0,93.1 L168.0,93.6 L172.0,93.5 L176.0,93.0 L180.0,91.9 L184.0,90.3 L188.0,88.2 L192.0,85.7 L196.0,82.7 L200.0,79.4 L204.0,75.7 L208.0,71.7 L212.0,67.5 L216.0,63.0 L220.0,58.4 L224.0,53.7 L228.0,48.9 L232.0,44.1" stroke="#ff3c00" stroke-width="1.8" fill="none" opacity="0.5" style="mix-blend-mode:screen"/><path d="M-4.0,48.7 L0.0,53.5 L4.0,58.2 L8.0,62.8 L12.0,67.3 L16.0,71.6 L20.0,75.6 L24.0,79.3 L28.0,82.6 L32.0,85.6 L36.0,88.1 L40.0,90.2 L44.0,91.8 L48.0,92.9 L52.0,93.5 L56.0,93.6 L60.0,93.2 L64.0,92.2 L68.0,90.7 L72.0,88.8 L76.0,86.4 L80.0,83.5 L84.0,80.3 L88.0,76.7 L92.0,72.7 L96.0,68.5 L100.0,64.1 L104.0,59.5 L108.0,54.8 L112.0,50.1 L116.0,45.3 L120.0,40.6 L124.0,36.0 L128.0,31.6 L132.0,27.4 L136.0,23.5 L140.0,19.8 L144.0,16.6 L148.0,13.7 L152.0,11.3 L156.0,9.3 L160.0,7.8 L164.0,6.9 L168.0,6.4 L172.0,6.5 L176.0,7.0 L180.0,8.1 L184.0,9.7 L188.0,11.8 L192.0,14.3 L196.0,17.3 L200.0,20.6 L204.0,24.3 L208.0,28.3 L212.0,32.5 L216.0,37.0 L220.0,41.6 L224.0,46.3 L228.0,51.1 L232.0,55.9" stroke="#ff3c00" stroke-width="1.8" fill="none" opacity="0.5" style="mix-blend-mode:screen"/><path d="M-4.0,56.5 L0.0,51.9 L4.0,47.3 L8.0,42.7 L12.0,38.2 L16.0,33.8 L20.0,29.7 L24.0,25.7 L28.0,22.1 L32.0,18.8 L36.0,15.8 L40.0,13.3 L44.0,11.2 L48.0,9.6 L52.0,8.5 L56.0,7.8 L60.0,7.7 L64.0,8.0 L68.0,8.9 L72.0,10.2 L76.0,12.1 L80.0,14.3 L84.0,17.0 L88.0,20.1 L92.0,23.6 L96.0,27.4 L100.0,31.4 L104.0,35.6 L108.0,40.1 L112.0,44.6 L116.0,49.2 L120.0,53.9 L124.0,58.4 L128.0,62.9 L132.0,67.2 L136.0,71.4 L140.0,75.2 L144.0,78.8 L148.0,82.0 L152.0,84.8 L156.0,87.2 L160.0,89.2 L164.0,90.7 L168.0,91.8 L172.0,92.3 L176.0,92.3 L180.0,91.8 L184.0,90.8 L188.0,89.4 L192.0,87.4 L196.0,85.0 L200.0,82.2 L204.0,79.0 L208.0,75.5 L212.0,71.7 L216.0,67.6 L220.0,63.3 L224.0,58.8 L228.0,54.2 L232.0,49.6" stroke="#ff3c00" stroke-width="1.8" fill="none" opacity="0.5" style="mix-blend-mode:screen"/><path d="M-4.0,43.5 L0.0,48.1 L4.0,52.7 L8.0,57.3 L12.0,61.8 L16.0,66.2 L20.0,70.3 L24.0,74.3 L28.0,77.9 L32.0,81.2 L36.0,84.2 L40.0,86.7 L44.0,88.8 L48.0,90.4 L52.0,91.5 L56.0,92.2 L60.0,92.3 L64.0,92.0 L68.0,91.1 L72.0,89.8 L76.0,87.9 L80.0,85.7 L84.0,83.0 L88.0,79.9 L92.0,76.4 L96.0,72.6 L100.0,68.6 L104.0,64.4 L108.0,59.9 L112.0,55.4 L116.0,50.8 L120.0,46.1 L124.0,41.6 L128.0,37.1 L132.0,32.8 L136.0,28.6 L140.0,24.8 L144.0,21.2 L148.0,18.0 L152.0,15.2 L156.0,12.8 L160.0,10.8 L164.0,9.3 L168.0,8.2 L172.0,7.7 L176.0,7.7 L180.0,8.2 L184.0,9.2 L188.0,10.6 L192.0,12.6 L196.0,15.0 L200.0,17.8 L204.0,21.0 L208.0,24.5 L212.0,28.3 L216.0,32.4 L220.0,36.7 L224.0,41.2 L228.0,45.8 L232.0,50.4" stroke="#ff3c00" stroke-width="1.8" fill="none" opacity="0.5" style="mix-blend-mode:screen"/><path d="M-4.0,69.7 L0.0,65.3 L4.0,60.6 L8.0,55.9 L12.0,51.1 L16.0,46.3 L20.0,41.5 L24.0,36.8 L28.0,32.3 L32.0,28.0 L36.0,24.0 L40.0,20.2 L44.0,16.9 L48.0,13.9 L52.0,11.3 L56.0,9.2 L60.0,7.6 L64.0,6.5 L68.0,6.0 L72.0,5.9 L76.0,6.4 L80.0,7.4 L84.0,8.9 L88.0,10.9 L92.0,13.3 L96.0,16.2 L100.0,19.5 L104.0,23.2 L108.0,27.2 L112.0,31.4 L116.0,35.9 L120.0,40.5 L124.0,45.3 L128.0,50.1 L132.0,54.9 L136.0,59.7 L140.0,64.3 L144.0,68.8 L148.0,73.0 L152.0,77.0 L156.0,80.6 L160.0,83.9 L164.0,86.8 L168.0,89.2 L172.0,91.2 L176.0,92.7 L180.0,93.7 L184.0,94.1 L188.0,94.0 L192.0,93.4 L196.0,92.3 L200.0,90.7 L204.0,88.6 L208.0,86.0 L212.0,83.0 L216.0,79.6 L220.0,75.9 L224.0,71.8 L228.0,67.5 L232.0,63.0" stroke="#ff3c00" stroke-width="1.8" fill="none" opacity="0.5" style="mix-blend-mode:screen"/><path d="M-4.0,30.3 L0.0,34.7 L4.0,39.4 L8.0,44.1 L12.0,48.9 L16.0,53.7 L20.0,58.5 L24.0,63.2 L28.0,67.7 L32.0,72.0 L36.0,76.0 L40.0,79.8 L44.0,83.1 L48.0,86.1 L52.0,88.7 L56.0,90.8 L60.0,92.4 L64.0,93.5 L68.0,94.0 L72.0,94.1 L76.0,93.6 L80.0,92.6 L84.0,91.1 L88.0,89.1 L92.0,86.7 L96.0,83.8 L100.0,80.5 L104.0,76.8 L108.0,72.8 L112.0,68.6 L116.0,64.1 L120.0,59.5 L124.0,54.7 L128.0,49.9 L132.0,45.1 L136.0,40.3 L140.0,35.7 L144.0,31.2 L148.0,27.0 L152.0,23.0 L156.0,19.4 L160.0,16.1 L164.0,13.2 L168.0,10.8 L172.0,8.8 L176.0,7.3 L180.0,6.3 L184.0,5.9 L188.0,6.0 L192.0,6.6 L196.0,7.7 L200.0,9.3 L204.0,11.4 L208.0,14.0 L212.0,17.0 L216.0,20.4 L220.0,24.1 L224.0,28.2 L228.0,32.5 L232.0,37.0" stroke="#ff3c00" stroke-width="1.8" fill="none" opacity="0.5" style="mix-blend-mode:screen"/><path d="M-4.0,48.5 L0.0,43.8 L4.0,39.1 L8.0,34.6 L12.0,30.2 L16.0,26.1 L20.0,22.3 L24.0,18.8 L28.0,15.6 L32.0,12.9 L36.0,10.6 L40.0,8.8 L44.0,7.5 L48.0,6.7 L52.0,6.4 L56.0,6.6 L60.0,7.4 L64.0,8.6 L68.0,10.4 L72.0,12.6 L76.0,15.3 L80.0,18.3 L84.0,21.8 L88.0,25.6 L92.0,29.7 L96.0,34.0 L100.0,38.5 L104.0,43.2 L108.0,47.9 L112.0,52.7 L116.0,57.4 L120.0,62.0 L124.0,66.5 L128.0,70.8 L132.0,74.9 L136.0,78.6 L140.0,82.1 L144.0,85.1 L148.0,87.7 L152.0,89.9 L156.0,91.5 L160.0,92.7 L164.0,93.4 L168.0,93.6 L172.0,93.2 L176.0,92.3 L180.0,91.0 L184.0,89.1 L188.0,86.8 L192.0,84.0 L196.0,80.8 L200.0,77.3 L204.0,73.4 L208.0,69.3 L212.0,64.9 L216.0,60.3 L220.0,55.6 L224.0,50.9 L228.0,46.1 L232.0,41.4" stroke="#ff3c00" stroke-width="1.8" fill="none" opacity="0.5" style="mix-blend-mode:screen"/><path d="M-4.0,51.5 L0.0,56.2 L4.0,60.9 L8.0,65.4 L12.0,69.8 L16.0,73.9 L20.0,77.7 L24.0,81.2 L28.0,84.4 L32.0,87.1 L36.0,89.4 L40.0,91.2 L44.0,92.5 L48.0,93.3 L52.0,93.6 L56.0,93.4 L60.0,92.6 L64.0,91.4 L68.0,89.6 L72.0,87.4 L76.0,84.7 L80.0,81.7 L84.0,78.2 L88.0,74.4 L92.0,70.3 L96.0,66.0 L100.0,61.5 L104.0,56.8 L108.0,52.1 L112.0,47.3 L116.0,42.6 L120.0,38.0 L124.0,33.5 L128.0,29.2 L132.0,25.1 L136.0,21.4 L140.0,17.9 L144.0,14.9 L148.0,12.3 L152.0,10.1 L156.0,8.5 L160.0,7.3 L164.0,6.6 L168.0,6.4 L172.0,6.8 L176.0,7.7 L180.0,9.0 L184.0,10.9 L188.0,13.2 L192.0,16.0 L196.0,19.2 L200.0,22.7 L204.0,26.6 L208.0,30.7 L212.0,35.1 L216.0,39.7 L220.0,44.4 L224.0,49.1 L228.0,53.9 L232.0,58.6" stroke="#ff3c00" stroke-width="1.8" fill="none" opacity="0.5" style="mix-blend-mode:screen"/><path d="M-4.0,59.8 L0.0,54.9 L4.0,50.0 L8.0,45.1 L12.0,40.3 L16.0,35.6 L20.0,31.0 L24.0,26.7 L28.0,22.6 L32.0,18.9 L36.0,15.6 L40.0,12.6 L44.0,10.1 L48.0,8.1 L52.0,6.6 L56.0,5.6 L60.0,5.1 L64.0,5.2 L68.0,5.8 L72.0,6.9 L76.0,8.5 L80.0,10.7 L84.0,13.3 L88.0,16.3 L92.0,19.8 L96.0,23.6 L100.0,27.7 L104.0,32.1 L108.0,36.7 L112.0,41.4 L116.0,46.3 L120.0,51.2 L124.0,56.1 L128.0,60.9 L132.0,65.6 L136.0,70.1 L140.0,74.4 L144.0,78.3 L148.0,82.0 L152.0,85.2 L156.0,88.1 L160.0,90.4 L164.0,92.3 L168.0,93.7 L172.0,94.6 L176.0,94.9 L180.0,94.7 L184.0,94.0 L188.0,92.8 L192.0,91.0 L196.0,88.7 L200.0,86.0 L204.0,82.9 L208.0,79.3 L212.0,75.4 L216.0,71.3 L220.0,66.8 L224.0,62.2 L228.0,57.4 L232.0,52.5" stroke="#ff3c00" stroke-width="1.8" fill="none" opacity="0.5" style="mix-blend-mode:screen"/><path d="M-4.0,40.2 L0.0,45.1 L4.0,50.0 L8.0,54.9 L12.0,59.7 L16.0,64.4 L20.0,69.0 L24.0,73.3 L28.0,77.4 L32.0,81.1 L36.0,84.4 L40.0,87.4 L44.0,89.9 L48.0,91.9 L52.0,93.4 L56.0,94.4 L60.0,94.9 L64.0,94.8 L68.0,94.2 L72.0,93.1 L76.0,91.5 L80.0,89.3 L84.0,86.7 L88.0,83.7 L92.0,80.2 L96.0,76.4 L100.0,72.3 L104.0,67.9 L108.0,63.3 L112.0,58.6 L116.0,53.7 L120.0,48.8 L124.0,43.9 L128.0,39.1 L132.0,34.4 L136.0,29.9 L140.0,25.6 L144.0,21.7 L148.0,18.0 L152.0,14.8 L156.0,11.9 L160.0,9.6 L164.0,7.7 L168.0,6.3 L172.0,5.4 L176.0,5.1 L180.0,5.3 L184.0,6.0 L188.0,7.2 L192.0,9.0 L196.0,11.3 L200.0,14.0 L204.0,17.1 L208.0,20.7 L212.0,24.6 L216.0,28.7 L220.0,33.2 L224.0,37.8 L228.0,42.6 L232.0,47.5" stroke="#ff3c00" stroke-width="1.8" fill="none" opacity="0.5" style="mix-blend-mode:screen"/><path d="M-4.0,66.6 L0.0,62.3 L4.0,57.8 L8.0,53.2 L12.0,48.6 L16.0,44.0 L20.0,39.4 L24.0,35.0 L28.0,30.8 L32.0,26.8 L36.0,23.1 L40.0,19.7 L44.0,16.7 L48.0,14.0 L52.0,11.8 L56.0,10.1 L60.0,8.8 L64.0,8.0 L68.0,7.7 L72.0,7.9 L76.0,8.6 L80.0,9.9 L84.0,11.5 L88.0,13.7 L92.0,16.3 L96.0,19.3 L100.0,22.6 L104.0,26.3 L108.0,30.3 L112.0,34.5 L116.0,38.8 L120.0,43.4 L124.0,48.0 L128.0,52.6 L132.0,57.2 L136.0,61.7 L140.0,66.0 L144.0,70.2 L148.0,74.1 L152.0,77.8 L156.0,81.1 L160.0,84.0 L164.0,86.6 L168.0,88.7 L172.0,90.3 L176.0,91.5 L180.0,92.1 L184.0,92.3 L188.0,91.9 L192.0,91.1 L196.0,89.8 L200.0,88.0 L204.0,85.7 L208.0,83.0 L212.0,79.9 L216.0,76.5 L220.0,72.7 L224.0,68.7 L228.0,64.5 L232.0,60.0" stroke="#ff3c00" stroke-width="1.8" fill="none" opacity="0.5" style="mix-blend-mode:screen"/><path d="M-4.0,33.4 L0.0,37.7 L4.0,42.2 L8.0,46.8 L12.0,51.4 L16.0,56.0 L20.0,60.6 L24.0,65.0 L28.0,69.2 L32.0,73.2 L36.0,76.9 L40.0,80.3 L44.0,83.3 L48.0,86.0 L52.0,88.2 L56.0,89.9 L60.0,91.2 L64.0,92.0 L68.0,92.3 L72.0,92.1 L76.0,91.4 L80.0,90.1 L84.0,88.5 L88.0,86.3 L92.0,83.7 L96.0,80.7 L100.0,77.4 L104.0,73.7 L108.0,69.7 L112.0,65.5 L116.0,61.2 L120.0,56.6 L124.0,52.0 L128.0,47.4 L132.0,42.8 L136.0,38.3 L140.0,34.0 L144.0,29.8 L148.0,25.9 L152.0,22.2 L156.0,18.9 L160.0,16.0 L164.0,13.4 L168.0,11.3 L172.0,9.7 L176.0,8.5 L180.0,7.9 L184.0,7.7 L188.0,8.1 L192.0,8.9 L196.0,10.2 L200.0,12.0 L204.0,14.3 L208.0,17.0 L212.0,20.1 L216.0,23.5 L220.0,27.3 L224.0,31.3 L228.0,35.5 L232.0,40.0" stroke="#ff3c00" stroke-width="1.8" fill="none" opacity="0.5" style="mix-blend-mode:screen"/><path d="M-4.0,74.5 L0.0,70.6 L4.0,66.6 L8.0,62.3 L12.0,57.9 L16.0,53.5 L20.0,48.9 L24.0,44.4 L28.0,39.9 L32.0,35.6 L36.0,31.4 L40.0,27.5 L44.0,23.8 L48.0,20.5 L52.0,17.5 L56.0,14.8 L60.0,12.6 L64.0,10.9 L68.0,9.6 L72.0,8.8 L76.0,8.5 L80.0,8.7 L84.0,9.3 L88.0,10.5 L92.0,12.1 L96.0,14.2 L100.0,16.7 L104.0,19.6 L108.0,22.9 L112.0,26.5 L116.0,30.3 L120.0,34.5 L124.0,38.7 L128.0,43.2 L132.0,47.7 L136.0,52.2 L140.0,56.7 L144.0,61.2 L148.0,65.5 L152.0,69.6 L156.0,73.4 L160.0,77.0 L164.0,80.3 L168.0,83.2 L172.0,85.8 L176.0,87.8 L180.0,89.5 L184.0,90.7 L188.0,91.3 L192.0,91.5 L196.0,91.2 L200.0,90.4 L204.0,89.2 L208.0,87.4 L212.0,85.2 L216.0,82.6 L220.0,79.6 L224.0,76.3 L228.0,72.6 L232.0,68.6" stroke="#ff3c00" stroke-width="1.8" fill="none" opacity="0.5" style="mix-blend-mode:screen"/><path d="M-4.0,25.5 L0.0,29.4 L4.0,33.4 L8.0,37.7 L12.0,42.1 L16.0,46.5 L20.0,51.1 L24.0,55.6 L28.0,60.1 L32.0,64.4 L36.0,68.6 L40.0,72.5 L44.0,76.2 L48.0,79.5 L52.0,82.5 L56.0,85.2 L60.0,87.4 L64.0,89.1 L68.0,90.4 L72.0,91.2 L76.0,91.5 L80.0,91.3 L84.0,90.7 L88.0,89.5 L92.0,87.9 L96.0,85.8 L100.0,83.3 L104.0,80.4 L108.0,77.1 L112.0,73.5 L116.0,69.7 L120.0,65.5 L124.0,61.3 L128.0,56.8 L132.0,52.3 L136.0,47.8 L140.0,43.3 L144.0,38.8 L148.0,34.5 L152.0,30.4 L156.0,26.6 L160.0,23.0 L164.0,19.7 L168.0,16.8 L172.0,14.2 L176.0,12.2 L180.0,10.5 L184.0,9.3 L188.0,8.7 L192.0,8.5 L196.0,8.8 L200.0,9.6 L204.0,10.8 L208.0,12.6 L212.0,14.8 L216.0,17.4 L220.0,20.4 L224.0,23.7 L228.0,27.4 L232.0,31.4" stroke="#ff3c00" stroke-width="1.8" fill="none" opacity="0.5" style="mix-blend-mode:screen"/><path d="M-4.0,55.4 L0.0,50.6 L4.0,45.8 L8.0,41.0 L12.0,36.3 L16.0,31.8 L20.0,27.4 L24.0,23.4 L28.0,19.7 L32.0,16.3 L36.0,13.4 L40.0,10.9 L44.0,8.8 L48.0,7.2 L52.0,6.2 L56.0,5.7 L60.0,5.7 L64.0,6.2 L68.0,7.2 L72.0,8.8 L76.0,10.9 L80.0,13.4 L84.0,16.3 L88.0,19.7 L92.0,23.4 L96.0,27.4 L100.0,31.8 L104.0,36.3 L108.0,41.0 L112.0,45.8 L116.0,50.6 L120.0,55.4 L124.0,60.2 L128.0,64.9 L132.0,69.3 L136.0,73.6 L140.0,77.6 L144.0,81.2 L148.0,84.4 L152.0,87.3 L156.0,89.7 L160.0,91.6 L164.0,93.1 L168.0,94.0 L172.0,94.4 L176.0,94.3 L180.0,93.6 L184.0,92.4 L188.0,90.7 L192.0,88.6 L196.0,85.9 L200.0,82.9 L204.0,79.4 L208.0,75.6 L212.0,71.5 L216.0,67.1 L220.0,62.6 L224.0,57.8 L228.0,53.0 L232.0,48.2" stroke="#ff3c00" stroke-width="1.8" fill="none" opacity="0.5" style="mix-blend-mode:screen"/><path d="M-4.0,44.6 L0.0,49.4 L4.0,54.2 L8.0,59.0 L12.0,63.7 L16.0,68.2 L20.0,72.6 L24.0,76.6 L28.0,80.3 L32.0,83.7 L36.0,86.6 L40.0,89.1 L44.0,91.2 L48.0,92.8 L52.0,93.8 L56.0,94.3 L60.0,94.3 L64.0,93.8 L68.0,92.8 L72.0,91.2 L76.0,89.1 L80.0,86.6 L84.0,83.7 L88.0,80.3 L92.0,76.6 L96.0,72.6 L100.0,68.2 L104.0,63.7 L108.0,59.0 L112.0,54.2 L116.0,49.4 L120.0,44.6 L124.0,39.8 L128.0,35.1 L132.0,30.7 L136.0,26.4 L140.0,22.4 L144.0,18.8 L148.0,15.6 L152.0,12.7 L156.0,10.3 L160.0,8.4 L164.0,6.9 L168.0,6.0 L172.0,5.6 L176.0,5.7 L180.0,6.4 L184.0,7.6 L188.0,9.3 L192.0,11.4 L196.0,14.1 L200.0,17.1 L204.0,20.6 L208.0,24.4 L212.0,28.5 L216.0,32.9 L220.0,37.4 L224.0,42.2 L228.0,47.0 L232.0,51.8" stroke="#ff3c00" stroke-width="1.8" fill="none" opacity="0.5" style="mix-blend-mode:screen"/><path d="M-4.0,45.0 L0.0,40.3 L4.0,35.8 L8.0,31.4 L12.0,27.3 L16.0,23.4 L20.0,19.8 L24.0,16.7 L28.0,13.9 L32.0,11.5 L36.0,9.6 L40.0,8.2 L44.0,7.2 L48.0,6.8 L52.0,6.9 L56.0,7.5 L60.0,8.7 L64.0,10.3 L68.0,12.4 L72.0,14.9 L76.0,17.9 L80.0,21.2 L84.0,24.9 L88.0,28.9 L92.0,33.1 L96.0,37.5 L100.0,42.1 L104.0,46.8 L108.0,51.5 L112.0,56.2 L116.0,60.8 L120.0,65.3 L124.0,69.6 L128.0,73.7 L132.0,77.5 L136.0,81.0 L140.0,84.1 L144.0,86.8 L148.0,89.0 L152.0,90.8 L156.0,92.1 L160.0,92.9 L164.0,93.2 L168.0,93.0 L172.0,92.2 L176.0,91.0 L180.0,89.2 L184.0,87.0 L188.0,84.4 L192.0,81.3 L196.0,77.9 L200.0,74.2 L204.0,70.1 L208.0,65.8 L212.0,61.3 L216.0,56.7 L220.0,52.0 L224.0,47.3 L228.0,42.6 L232.0,38.0" stroke="#ff3c00" stroke-width="1.8" fill="none" opacity="0.5" style="mix-blend-mode:screen"/><path d="M-4.0,55.0 L0.0,59.7 L4.0,64.2 L8.0,68.6 L12.0,72.7 L16.0,76.6 L20.0,80.2 L24.0,83.3 L28.0,86.1 L32.0,88.5 L36.0,90.4 L40.0,91.8 L44.0,92.8 L48.0,93.2 L52.0,93.1 L56.0,92.5 L60.0,91.3 L64.0,89.7 L68.0,87.6 L72.0,85.1 L76.0,82.1 L80.0,78.8 L84.0,75.1 L88.0,71.1 L92.0,66.9 L96.0,62.5 L100.0,57.9 L104.0,53.2 L108.0,48.5 L112.0,43.8 L116.0,39.2 L120.0,34.7 L124.0,30.4 L128.0,26.3 L132.0,22.5 L136.0,19.0 L140.0,15.9 L144.0,13.2 L148.0,11.0 L152.0,9.2 L156.0,7.9 L160.0,7.1 L164.0,6.8 L168.0,7.0 L172.0,7.8 L176.0,9.0 L180.0,10.8 L184.0,13.0 L188.0,15.6 L192.0,18.7 L196.0,22.1 L200.0,25.8 L204.0,29.9 L208.0,34.2 L212.0,38.7 L216.0,43.3 L220.0,48.0 L224.0,52.7 L228.0,57.4 L232.0,62.0" stroke="#ff3c00" stroke-width="1.8" fill="none" opacity="0.5" style="mix-blend-mode:screen"/><path d="M-4.0,40.5 L0.0,35.8 L4.0,31.4 L8.0,27.1 L12.0,23.2 L16.0,19.5 L20.0,16.2 L24.0,13.4 L28.0,10.9 L32.0,8.9 L36.0,7.5 L40.0,6.5 L44.0,6.0 L48.0,6.1 L52.0,6.7 L56.0,7.8 L60.0,9.4 L64.0,11.5 L68.0,14.1 L72.0,17.0 L76.0,20.4 L80.0,24.1 L84.0,28.2 L88.0,32.5 L92.0,37.0 L96.0,41.6 L100.0,46.4 L104.0,51.2 L108.0,56.0 L112.0,60.7 L116.0,65.3 L120.0,69.7 L124.0,73.9 L128.0,77.8 L132.0,81.3 L136.0,84.5 L140.0,87.3 L144.0,89.6 L148.0,91.5 L152.0,92.8 L156.0,93.7 L160.0,94.0 L164.0,93.8 L168.0,93.1 L172.0,91.9 L176.0,90.1 L180.0,87.9 L184.0,85.2 L188.0,82.2 L192.0,78.7 L196.0,74.9 L200.0,70.8 L204.0,66.4 L208.0,61.9 L212.0,57.2 L216.0,52.4 L220.0,47.6 L224.0,42.8 L228.0,38.1 L232.0,33.6" stroke="#ff3c00" stroke-width="1.8" fill="none" opacity="0.5" style="mix-blend-mode:screen"/><path d="M-4.0,59.5 L0.0,64.2 L4.0,68.6 L8.0,72.9 L12.0,76.8 L16.0,80.5 L20.0,83.8 L24.0,86.6 L28.0,89.1 L32.0,91.1 L36.0,92.5 L40.0,93.5 L44.0,94.0 L48.0,93.9 L52.0,93.3 L56.0,92.2 L60.0,90.6 L64.0,88.5 L68.0,85.9 L72.0,83.0 L76.0,79.6 L80.0,75.9 L84.0,71.8 L88.0,67.5 L92.0,63.0 L96.0,58.4 L100.0,53.6 L104.0,48.8 L108.0,44.0 L112.0,39.3 L116.0,34.7 L120.0,30.3 L124.0,26.1 L128.0,22.2 L132.0,18.7 L136.0,15.5 L140.0,12.7 L144.0,10.4 L148.0,8.5 L152.0,7.2 L156.0,6.3 L160.0,6.0 L164.0,6.2 L168.0,6.9 L172.0,8.1 L176.0,9.9 L180.0,12.1 L184.0,14.8 L188.0,17.8 L192.0,21.3 L196.0,25.1 L200.0,29.2 L204.0,33.6 L208.0,38.1 L212.0,42.8 L216.0,47.6 L220.0,52.4 L224.0,57.2 L228.0,61.9 L232.0,66.4" stroke="#ff3c00" stroke-width="1.8" fill="none" opacity="0.5" style="mix-blend-mode:screen"/><path d="M-4.0,68.4 L0.0,64.0 L4.0,59.4 L8.0,54.7 L12.0,49.9 L16.0,45.2 L20.0,40.5 L24.0,35.9 L28.0,31.5 L32.0,27.3 L36.0,23.4 L40.0,19.8 L44.0,16.5 L48.0,13.7 L52.0,11.3 L56.0,9.3 L60.0,7.9 L64.0,6.9 L68.0,6.5 L72.0,6.5 L76.0,7.1 L80.0,8.2 L84.0,9.8 L88.0,11.9 L92.0,14.4 L96.0,17.4 L100.0,20.8 L104.0,24.5 L108.0,28.5 L112.0,32.7 L116.0,37.2 L120.0,41.8 L124.0,46.5 L128.0,51.3 L132.0,56.0 L136.0,60.7 L140.0,65.2 L144.0,69.6 L148.0,73.7 L152.0,77.6 L156.0,81.1 L160.0,84.2 L164.0,87.0 L168.0,89.3 L172.0,91.1 L176.0,92.4 L180.0,93.3 L184.0,93.6 L188.0,93.4 L192.0,92.7 L196.0,91.4 L200.0,89.7 L204.0,87.5 L208.0,84.9 L212.0,81.8 L216.0,78.4 L220.0,74.6 L224.0,70.5 L228.0,66.2 L232.0,61.7" stroke="#ff3c00" stroke-width="1.8" fill="none" opacity="0.5" style="mix-blend-mode:screen"/><path d="M-4.0,31.6 L0.0,36.0 L4.0,40.6 L8.0,45.3 L12.0,50.1 L16.0,54.8 L20.0,59.5 L24.0,64.1 L28.0,68.5 L32.0,72.7 L36.0,76.6 L40.0,80.2 L44.0,83.5 L48.0,86.3 L52.0,88.7 L56.0,90.7 L60.0,92.1 L64.0,93.1 L68.0,93.5 L72.0,93.5 L76.0,92.9 L80.0,91.8 L84.0,90.2 L88.0,88.1 L92.0,85.6 L96.0,82.6 L100.0,79.2 L104.0,75.5 L108.0,71.5 L112.0,67.3 L116.0,62.8 L120.0,58.2 L124.0,53.5 L128.0,48.7 L132.0,44.0 L136.0,39.3 L140.0,34.8 L144.0,30.4 L148.0,26.3 L152.0,22.4 L156.0,18.9 L160.0,15.8 L164.0,13.0 L168.0,10.7 L172.0,8.9 L176.0,7.6 L180.0,6.7 L184.0,6.4 L188.0,6.6 L192.0,7.3 L196.0,8.6 L200.0,10.3 L204.0,12.5 L208.0,15.1 L212.0,18.2 L216.0,21.6 L220.0,25.4 L224.0,29.5 L228.0,33.8 L232.0,38.3" stroke="#ff3c00" stroke-width="1.8" fill="none" opacity="0.5" style="mix-blend-mode:screen"/><path d="M-4.0,71.6 L0.0,67.5 L4.0,63.2 L8.0,58.7 L12.0,54.2 L16.0,49.5 L20.0,44.9 L24.0,40.3 L28.0,35.9 L32.0,31.6 L36.0,27.6 L40.0,23.8 L44.0,20.3 L48.0,17.2 L52.0,14.4 L56.0,12.1 L60.0,10.3 L64.0,8.9 L68.0,8.0 L72.0,7.6 L76.0,7.7 L80.0,8.3 L84.0,9.5 L88.0,11.1 L92.0,13.1 L96.0,15.6 L100.0,18.5 L104.0,21.8 L108.0,25.5 L112.0,29.4 L116.0,33.5 L120.0,37.9 L124.0,42.4 L128.0,47.0 L132.0,51.6 L136.0,56.2 L140.0,60.8 L144.0,65.2 L148.0,69.4 L152.0,73.4 L156.0,77.1 L160.0,80.5 L164.0,83.6 L168.0,86.2 L172.0,88.4 L176.0,90.1 L180.0,91.4 L184.0,92.1 L188.0,92.4 L192.0,92.2 L196.0,91.4 L200.0,90.2 L204.0,88.5 L208.0,86.3 L212.0,83.7 L216.0,80.7 L220.0,77.3 L224.0,73.6 L228.0,69.6 L232.0,65.4" stroke="#ff3c00" stroke-width="1.8" fill="none" opacity="0.5" style="mix-blend-mode:screen"/><path d="M-4.0,28.4 L0.0,32.5 L4.0,36.8 L8.0,41.3 L12.0,45.8 L16.0,50.5 L20.0,55.1 L24.0,59.7 L28.0,64.1 L32.0,68.4 L36.0,72.4 L40.0,76.2 L44.0,79.7 L48.0,82.8 L52.0,85.6 L56.0,87.9 L60.0,89.7 L64.0,91.1 L68.0,92.0 L72.0,92.4 L76.0,92.3 L80.0,91.7 L84.0,90.5 L88.0,88.9 L92.0,86.9 L96.0,84.4 L100.0,81.5 L104.0,78.2 L108.0,74.5 L112.0,70.6 L116.0,66.5 L120.0,62.1 L124.0,57.6 L128.0,53.0 L132.0,48.4 L136.0,43.8 L140.0,39.2 L144.0,34.8 L148.0,30.6 L152.0,26.6 L156.0,22.9 L160.0,19.5 L164.0,16.4 L168.0,13.8 L172.0,11.6 L176.0,9.9 L180.0,8.6 L184.0,7.9 L188.0,7.6 L192.0,7.8 L196.0,8.6 L200.0,9.8 L204.0,11.5 L208.0,13.7 L212.0,16.3 L216.0,19.3 L220.0,22.7 L224.0,26.4 L228.0,30.4 L232.0,34.6" stroke="#ff3c00" stroke-width="1.8" fill="none" opacity="0.5" style="mix-blend-mode:screen"/><path d="M-4.0,65.9 L0.0,61.4 L4.0,56.7 L8.0,52.0 L12.0,47.2 L16.0,42.5 L20.0,37.8 L24.0,33.3 L28.0,29.0 L32.0,25.0 L36.0,21.2 L40.0,17.8 L44.0,14.8 L48.0,12.2 L52.0,10.0 L56.0,8.3 L60.0,7.2 L64.0,6.5 L68.0,6.3 L72.0,6.7 L76.0,7.6 L80.0,9.0 L84.0,10.9 L88.0,13.2 L92.0,16.0 L96.0,19.2 L100.0,22.8 L104.0,26.7 L108.0,30.8 L112.0,35.2 L116.0,39.8 L120.0,44.5 L124.0,49.2 L128.0,54.0 L132.0,58.7 L136.0,63.3 L140.0,67.8 L144.0,72.0 L148.0,76.0 L152.0,79.7 L156.0,83.0 L160.0,85.9 L164.0,88.4 L168.0,90.5 L172.0,92.0 L176.0,93.1 L180.0,93.6 L184.0,93.6 L188.0,93.1 L192.0,92.1 L196.0,90.6 L200.0,88.6 L204.0,86.1 L208.0,83.2 L212.0,79.9 L216.0,76.3 L220.0,72.3 L224.0,68.1 L228.0,63.7 L232.0,59.1" stroke="#ff3c00" stroke-width="1.8" fill="none" opacity="0.5" style="mix-blend-mode:screen"/><path d="M-4.0,34.1 L0.0,38.6 L4.0,43.3 L8.0,48.0 L12.0,52.8 L16.0,57.5 L20.0,62.2 L24.0,66.7 L28.0,71.0 L32.0,75.0 L36.0,78.8 L40.0,82.2 L44.0,85.2 L48.0,87.8 L52.0,90.0 L56.0,91.7 L60.0,92.8 L64.0,93.5 L68.0,93.7 L72.0,93.3 L76.0,92.4 L80.0,91.0 L84.0,89.1 L88.0,86.8 L92.0,84.0 L96.0,80.8 L100.0,77.2 L104.0,73.3 L108.0,69.2 L112.0,64.8 L116.0,60.2 L120.0,55.5 L124.0,50.8 L128.0,46.0 L132.0,41.3 L136.0,36.7 L140.0,32.2 L144.0,28.0 L148.0,24.0 L152.0,20.3 L156.0,17.0 L160.0,14.1 L164.0,11.6 L168.0,9.5 L172.0,8.0 L176.0,6.9 L180.0,6.4 L184.0,6.4 L188.0,6.9 L192.0,7.9 L196.0,9.4 L200.0,11.4 L204.0,13.9 L208.0,16.8 L212.0,20.1 L216.0,23.7 L220.0,27.7 L224.0,31.9 L228.0,36.3 L232.0,40.9" stroke="#ff3c00" stroke-width="1.8" fill="none" opacity="0.5" style="mix-blend-mode:screen"/><path d="M-4.0,61.4 L0.0,56.8 L4.0,52.2 L8.0,47.5 L12.0,42.8 L16.0,38.2 L20.0,33.8 L24.0,29.5 L28.0,25.5 L32.0,21.8 L36.0,18.4 L40.0,15.4 L44.0,12.8 L48.0,10.7 L52.0,9.0 L56.0,7.8 L60.0,7.1 L64.0,7.0 L68.0,7.3 L72.0,8.1 L76.0,9.5 L80.0,11.3 L84.0,13.6 L88.0,16.4 L92.0,19.5 L96.0,23.0 L100.0,26.8 L104.0,30.9 L108.0,35.2 L112.0,39.7 L116.0,44.3 L120.0,49.0 L124.0,53.7 L128.0,58.4 L132.0,62.9 L136.0,67.3 L140.0,71.5 L144.0,75.5 L148.0,79.1 L152.0,82.4 L156.0,85.3 L160.0,87.8 L164.0,89.8 L168.0,91.3 L172.0,92.4 L176.0,93.0 L180.0,93.0 L184.0,92.5 L188.0,91.6 L192.0,90.1 L196.0,88.1 L200.0,85.7 L204.0,82.9 L208.0,79.7 L212.0,76.1 L216.0,72.2 L220.0,68.1 L224.0,63.7 L228.0,59.1 L232.0,54.5" stroke="#ff3c00" stroke-width="1.8" fill="none" opacity="0.5" style="mix-blend-mode:screen"/><path d="M-4.0,38.6 L0.0,43.2 L4.0,47.8 L8.0,52.5 L12.0,57.2 L16.0,61.8 L20.0,66.2 L24.0,70.5 L28.0,74.5 L32.0,78.2 L36.0,81.6 L40.0,84.6 L44.0,87.2 L48.0,89.3 L52.0,91.0 L56.0,92.2 L60.0,92.9 L64.0,93.0 L68.0,92.7 L72.0,91.9 L76.0,90.5 L80.0,88.7 L84.0,86.4 L88.0,83.6 L92.0,80.5 L96.0,77.0 L100.0,73.2 L104.0,69.1 L108.0,64.8 L112.0,60.3 L116.0,55.7 L120.0,51.0 L124.0,46.3 L128.0,41.6 L132.0,37.1 L136.0,32.7 L140.0,28.5 L144.0,24.5 L148.0,20.9 L152.0,17.6 L156.0,14.7 L160.0,12.2 L164.0,10.2 L168.0,8.7 L172.0,7.6 L176.0,7.0 L180.0,7.0 L184.0,7.5 L188.0,8.4 L192.0,9.9 L196.0,11.9 L200.0,14.3 L204.0,17.1 L208.0,20.3 L212.0,23.9 L216.0,27.8 L220.0,31.9 L224.0,36.3 L228.0,40.9 L232.0,45.5" stroke="#ff3c00" stroke-width="1.8" fill="none" opacity="0.5" style="mix-blend-mode:screen"/><path d="M-4.0,71.8 L0.0,67.4 L4.0,62.7 L8.0,57.9 L12.0,53.0 L16.0,48.0 L20.0,43.1 L24.0,38.3 L28.0,33.6 L32.0,29.1 L36.0,24.8 L40.0,20.9 L44.0,17.3 L48.0,14.1 L52.0,11.3 L56.0,9.0 L60.0,7.1 L64.0,5.8 L68.0,5.0 L72.0,4.7 L76.0,5.0 L80.0,5.8 L84.0,7.2 L88.0,9.0 L92.0,11.4 L96.0,14.2 L100.0,17.4 L104.0,21.0 L108.0,25.0 L112.0,29.3 L116.0,33.8 L120.0,38.5 L124.0,43.3 L128.0,48.2 L132.0,53.2 L136.0,58.1 L140.0,62.9 L144.0,67.6 L148.0,72.0 L152.0,76.2 L156.0,80.0 L160.0,83.6 L164.0,86.7 L168.0,89.3 L172.0,91.5 L176.0,93.3 L180.0,94.4 L184.0,95.1 L188.0,95.2 L192.0,94.8 L196.0,93.9 L200.0,92.4 L204.0,90.4 L208.0,88.0 L212.0,85.0 L216.0,81.7 L220.0,78.0 L224.0,74.0 L228.0,69.6 L232.0,65.1" stroke="#ff3c00" stroke-width="1.8" fill="none" opacity="0.5" style="mix-blend-mode:screen"/><path d="M-4.0,28.2 L0.0,32.6 L4.0,37.3 L8.0,42.1 L12.0,47.0 L16.0,52.0 L20.0,56.9 L24.0,61.7 L28.0,66.4 L32.0,70.9 L36.0,75.2 L40.0,79.1 L44.0,82.7 L48.0,85.9 L52.0,88.7 L56.0,91.0 L60.0,92.9 L64.0,94.2 L68.0,95.0 L72.0,95.3 L76.0,95.0 L80.0,94.2 L84.0,92.8 L88.0,91.0 L92.0,88.6 L96.0,85.8 L100.0,82.6 L104.0,79.0 L108.0,75.0 L112.0,70.7 L116.0,66.2 L120.0,61.5 L124.0,56.7 L128.0,51.8 L132.0,46.8 L136.0,41.9 L140.0,37.1 L144.0,32.4 L148.0,28.0 L152.0,23.8 L156.0,20.0 L160.0,16.4 L164.0,13.3 L168.0,10.7 L172.0,8.5 L176.0,6.7 L180.0,5.6 L184.0,4.9 L188.0,4.8 L192.0,5.2 L196.0,6.1 L200.0,7.6 L204.0,9.6 L208.0,12.0 L212.0,15.0 L216.0,18.3 L220.0,22.0 L224.0,26.0 L228.0,30.4 L232.0,34.9" stroke="#ff3c00" stroke-width="1.8" fill="none" opacity="0.5" style="mix-blend-mode:screen"/><path d="M-4.0,57.6 L0.0,52.8 L4.0,48.0 L8.0,43.2 L12.0,38.5 L16.0,34.0 L20.0,29.6 L24.0,25.5 L28.0,21.6 L32.0,18.1 L36.0,15.0 L40.0,12.3 L44.0,10.1 L48.0,8.3 L52.0,7.0 L56.0,6.3 L60.0,6.0 L64.0,6.3 L68.0,7.1 L72.0,8.4 L76.0,10.2 L80.0,12.5 L84.0,15.2 L88.0,18.4 L92.0,21.9 L96.0,25.8 L100.0,29.9 L104.0,34.3 L108.0,38.9 L112.0,43.6 L116.0,48.4 L120.0,53.2 L124.0,58.0 L128.0,62.6 L132.0,67.1 L136.0,71.5 L140.0,75.5 L144.0,79.3 L148.0,82.7 L152.0,85.7 L156.0,88.3 L160.0,90.4 L164.0,92.1 L168.0,93.2 L172.0,93.9 L176.0,94.0 L180.0,93.6 L184.0,92.6 L188.0,91.2 L192.0,89.2 L196.0,86.8 L200.0,84.0 L204.0,80.8 L208.0,77.1 L212.0,73.2 L216.0,69.0 L220.0,64.6 L224.0,59.9 L228.0,55.2 L232.0,50.4" stroke="#ff3c00" stroke-width="1.8" fill="none" opacity="0.5" style="mix-blend-mode:screen"/><path d="M-4.0,42.4 L0.0,47.2 L4.0,52.0 L8.0,56.8 L12.0,61.5 L16.0,66.0 L20.0,70.4 L24.0,74.5 L28.0,78.4 L32.0,81.9 L36.0,85.0 L40.0,87.7 L44.0,89.9 L48.0,91.7 L52.0,93.0 L56.0,93.7 L60.0,94.0 L64.0,93.7 L68.0,92.9 L72.0,91.6 L76.0,89.8 L80.0,87.5 L84.0,84.8 L88.0,81.6 L92.0,78.1 L96.0,74.2 L100.0,70.1 L104.0,65.7 L108.0,61.1 L112.0,56.4 L116.0,51.6 L120.0,46.8 L124.0,42.0 L128.0,37.4 L132.0,32.9 L136.0,28.5 L140.0,24.5 L144.0,20.7 L148.0,17.3 L152.0,14.3 L156.0,11.7 L160.0,9.6 L164.0,7.9 L168.0,6.8 L172.0,6.1 L176.0,6.0 L180.0,6.4 L184.0,7.4 L188.0,8.8 L192.0,10.8 L196.0,13.2 L200.0,16.0 L204.0,19.2 L208.0,22.9 L212.0,26.8 L216.0,31.0 L220.0,35.4 L224.0,40.1 L228.0,44.8 L232.0,49.6" stroke="#ff3c00" stroke-width="1.8" fill="none" opacity="0.5" style="mix-blend-mode:screen"/><path d="M-4.0,41.3 L0.0,36.6 L4.0,32.1 L8.0,27.8 L12.0,23.8 L16.0,20.0 L20.0,16.7 L24.0,13.7 L28.0,11.2 L32.0,9.1 L36.0,7.5 L40.0,6.5 L44.0,5.9 L48.0,5.9 L52.0,6.4 L56.0,7.4 L60.0,8.9 L64.0,11.0 L68.0,13.4 L72.0,16.4 L76.0,19.7 L80.0,23.4 L84.0,27.4 L88.0,31.6 L92.0,36.1 L96.0,40.8 L100.0,45.5 L104.0,50.4 L108.0,55.2 L112.0,59.9 L116.0,64.6 L120.0,69.0 L124.0,73.2 L128.0,77.2 L132.0,80.8 L136.0,84.1 L140.0,87.0 L144.0,89.4 L148.0,91.3 L152.0,92.8 L156.0,93.7 L160.0,94.1 L164.0,94.0 L168.0,93.4 L172.0,92.2 L176.0,90.6 L180.0,88.5 L184.0,85.9 L188.0,82.8 L192.0,79.4 L196.0,75.7 L200.0,71.6 L204.0,67.3 L208.0,62.7 L212.0,58.0 L216.0,53.3 L220.0,48.4 L224.0,43.6 L228.0,38.9 L232.0,34.3" stroke="#ff3c00" stroke-width="1.8" fill="none" opacity="0.5" style="mix-blend-mode:screen"/><path d="M-4.0,58.7 L0.0,63.4 L4.0,67.9 L8.0,72.2 L12.0,76.2 L16.0,80.0 L20.0,83.3 L24.0,86.3 L28.0,88.8 L32.0,90.9 L36.0,92.5 L40.0,93.5 L44.0,94.1 L48.0,94.1 L52.0,93.6 L56.0,92.6 L60.0,91.1 L64.0,89.0 L68.0,86.6 L72.0,83.6 L76.0,80.3 L80.0,76.6 L84.0,72.6 L88.0,68.4 L92.0,63.9 L96.0,59.2 L100.0,54.5 L104.0,49.6 L108.0,44.8 L112.0,40.1 L116.0,35.4 L120.0,31.0 L124.0,26.8 L128.0,22.8 L132.0,19.2 L136.0,15.9 L140.0,13.0 L144.0,10.6 L148.0,8.7 L152.0,7.2 L156.0,6.3 L160.0,5.9 L164.0,6.0 L168.0,6.6 L172.0,7.8 L176.0,9.4 L180.0,11.5 L184.0,14.1 L188.0,17.2 L192.0,20.6 L196.0,24.3 L200.0,28.4 L204.0,32.7 L208.0,37.3 L212.0,42.0 L216.0,46.7 L220.0,51.6 L224.0,56.4 L228.0,61.1 L232.0,65.7" stroke="#ff3c00" stroke-width="1.8" fill="none" opacity="0.5" style="mix-blend-mode:screen"/><path d="M-4.0,64.7 L0.0,59.9 L4.0,55.0 L8.0,50.1 L12.0,45.1 L16.0,40.2 L20.0,35.4 L24.0,30.8 L28.0,26.4 L32.0,22.3 L36.0,18.6 L40.0,15.2 L44.0,12.2 L48.0,9.7 L52.0,7.6 L56.0,6.1 L60.0,5.1 L64.0,4.6 L68.0,4.6 L72.0,5.2 L76.0,6.4 L80.0,8.0 L84.0,10.2 L88.0,12.8 L92.0,15.9 L96.0,19.4 L100.0,23.2 L104.0,27.4 L108.0,31.8 L112.0,36.5 L116.0,41.3 L120.0,46.2 L124.0,51.2 L128.0,56.1 L132.0,61.0 L136.0,65.7 L140.0,70.3 L144.0,74.6 L148.0,78.6 L152.0,82.3 L156.0,85.6 L160.0,88.5 L164.0,90.9 L168.0,92.8 L172.0,94.2 L176.0,95.1 L180.0,95.5 L184.0,95.3 L188.0,94.5 L192.0,93.3 L196.0,91.5 L200.0,89.2 L204.0,86.5 L208.0,83.3 L212.0,79.7 L216.0,75.8 L220.0,71.5 L224.0,67.0 L228.0,62.3 L232.0,57.5" stroke="#ff3c00" stroke-width="1.8" fill="none" opacity="0.5" style="mix-blend-mode:screen"/><path d="M-4.0,35.3 L0.0,40.1 L4.0,45.0 L8.0,49.9 L12.0,54.9 L16.0,59.8 L20.0,64.6 L24.0,69.2 L28.0,73.6 L32.0,77.7 L36.0,81.4 L40.0,84.8 L44.0,87.8 L48.0,90.3 L52.0,92.4 L56.0,93.9 L60.0,94.9 L64.0,95.4 L68.0,95.4 L72.0,94.8 L76.0,93.6 L80.0,92.0 L84.0,89.8 L88.0,87.2 L92.0,84.1 L96.0,80.6 L100.0,76.8 L104.0,72.6 L108.0,68.2 L112.0,63.5 L116.0,58.7 L120.0,53.8 L124.0,48.8 L128.0,43.9 L132.0,39.0 L136.0,34.3 L140.0,29.7 L144.0,25.4 L148.0,21.4 L152.0,17.7 L156.0,14.4 L160.0,11.5 L164.0,9.1 L168.0,7.2 L172.0,5.8 L176.0,4.9 L180.0,4.5 L184.0,4.7 L188.0,5.5 L192.0,6.7 L196.0,8.5 L200.0,10.8 L204.0,13.5 L208.0,16.7 L212.0,20.3 L216.0,24.2 L220.0,28.5 L224.0,33.0 L228.0,37.7 L232.0,42.5" stroke="#ff3c00" stroke-width="1.8" fill="none" opacity="0.5" style="mix-blend-mode:screen"/><path d="M-4.0,69.8 L0.0,65.6 L4.0,61.2 L8.0,56.7 L12.0,52.1 L16.0,47.5 L20.0,42.9 L24.0,38.4 L28.0,34.0 L32.0,29.9 L36.0,25.9 L40.0,22.3 L44.0,19.0 L48.0,16.0 L52.0,13.5 L56.0,11.4 L60.0,9.7 L64.0,8.6 L68.0,7.9 L72.0,7.7 L76.0,8.1 L80.0,8.9 L84.0,10.2 L88.0,12.0 L92.0,14.3 L96.0,17.0 L100.0,20.0 L104.0,23.5 L108.0,27.2 L112.0,31.2 L116.0,35.5 L120.0,39.9 L124.0,44.4 L128.0,49.0 L132.0,53.7 L136.0,58.2 L140.0,62.7 L144.0,67.0 L148.0,71.2 L152.0,75.0 L156.0,78.6 L160.0,81.8 L164.0,84.7 L168.0,87.1 L172.0,89.1 L176.0,90.6 L180.0,91.7 L184.0,92.2 L188.0,92.2 L192.0,91.8 L196.0,90.8 L200.0,89.4 L204.0,87.4 L208.0,85.1 L212.0,82.3 L216.0,79.1 L220.0,75.6 L224.0,71.8 L228.0,67.7 L232.0,63.4" stroke="#ff3c00" stroke-width="1.8" fill="none" opacity="0.5" style="mix-blend-mode:screen"/><path d="M-4.0,30.2 L0.0,34.4 L4.0,38.8 L8.0,43.3 L12.0,47.9 L16.0,52.5 L20.0,57.1 L24.0,61.6 L28.0,66.0 L32.0,70.1 L36.0,74.1 L40.0,77.7 L44.0,81.0 L48.0,84.0 L52.0,86.5 L56.0,88.6 L60.0,90.3 L64.0,91.4 L68.0,92.1 L72.0,92.3 L76.0,91.9 L80.0,91.1 L84.0,89.8 L88.0,88.0 L92.0,85.7 L96.0,83.0 L100.0,80.0 L104.0,76.5 L108.0,72.8 L112.0,68.8 L116.0,64.5 L120.0,60.1 L124.0,55.6 L128.0,51.0 L132.0,46.3 L136.0,41.8 L140.0,37.3 L144.0,33.0 L148.0,28.8 L152.0,25.0 L156.0,21.4 L160.0,18.2 L164.0,15.3 L168.0,12.9 L172.0,10.9 L176.0,9.4 L180.0,8.3 L184.0,7.8 L188.0,7.8 L192.0,8.2 L196.0,9.2 L200.0,10.6 L204.0,12.6 L208.0,14.9 L212.0,17.7 L216.0,20.9 L220.0,24.4 L224.0,28.2 L228.0,32.3 L232.0,36.6" stroke="#ff3c00" stroke-width="1.8" fill="none" opacity="0.5" style="mix-blend-mode:screen"/><path d="M-4.0,54.1 L0.0,49.3 L4.0,44.5 L8.0,39.8 L12.0,35.2 L16.0,30.8 L20.0,26.6 L24.0,22.6 L28.0,19.0 L32.0,15.8 L36.0,13.0 L40.0,10.6 L44.0,8.7 L48.0,7.3 L52.0,6.4 L56.0,6.0 L60.0,6.1 L64.0,6.8 L68.0,8.0 L72.0,9.7 L76.0,11.8 L80.0,14.4 L84.0,17.5 L88.0,20.9 L92.0,24.7 L96.0,28.8 L100.0,33.1 L104.0,37.6 L108.0,42.3 L112.0,47.1 L116.0,51.9 L120.0,56.7 L124.0,61.4 L128.0,65.9 L132.0,70.3 L136.0,74.5 L140.0,78.3 L144.0,81.8 L148.0,84.9 L152.0,87.6 L156.0,89.9 L160.0,91.7 L164.0,93.0 L168.0,93.8 L172.0,94.0 L176.0,93.7 L180.0,92.9 L184.0,91.6 L188.0,89.8 L192.0,87.6 L196.0,84.8 L200.0,81.7 L204.0,78.2 L208.0,74.3 L212.0,70.2 L216.0,65.8 L220.0,61.2 L224.0,56.5 L228.0,51.7 L232.0,46.9" stroke="#ff3c00" stroke-width="1.8" fill="none" opacity="0.5" style="mix-blend-mode:screen"/><path d="M-4.0,45.9 L0.0,50.7 L4.0,55.5 L8.0,60.2 L12.0,64.8 L16.0,69.2 L20.0,73.4 L24.0,77.4 L28.0,81.0 L32.0,84.2 L36.0,87.0 L40.0,89.4 L44.0,91.3 L48.0,92.7 L52.0,93.6 L56.0,94.0 L60.0,93.9 L64.0,93.2 L68.0,92.0 L72.0,90.3 L76.0,88.2 L80.0,85.6 L84.0,82.5 L88.0,79.1 L92.0,75.3 L96.0,71.2 L100.0,66.9 L104.0,62.4 L108.0,57.7 L112.0,52.9 L116.0,48.1 L120.0,43.3 L124.0,38.6 L128.0,34.1 L132.0,29.7 L136.0,25.5 L140.0,21.7 L144.0,18.2 L148.0,15.1 L152.0,12.4 L156.0,10.1 L160.0,8.3 L164.0,7.0 L168.0,6.2 L172.0,6.0 L176.0,6.3 L180.0,7.1 L184.0,8.4 L188.0,10.2 L192.0,12.4 L196.0,15.2 L200.0,18.3 L204.0,21.8 L208.0,25.7 L212.0,29.8 L216.0,34.2 L220.0,38.8 L224.0,43.5 L228.0,48.3 L232.0,53.1" stroke="#ff3c00" stroke-width="1.8" fill="none" opacity="0.5" style="mix-blend-mode:screen"/><path d="M-4.0,40.0 L0.0,35.5 L4.0,31.2 L8.0,27.1 L12.0,23.2 L16.0,19.7 L20.0,16.5 L24.0,13.8 L28.0,11.5 L32.0,9.6 L36.0,8.2 L40.0,7.3 L44.0,6.9 L48.0,7.1 L52.0,7.7 L56.0,8.9 L60.0,10.5 L64.0,12.6 L68.0,15.2 L72.0,18.2 L76.0,21.5 L80.0,25.2 L84.0,29.2 L88.0,33.4 L92.0,37.9 L96.0,42.5 L100.0,47.1 L104.0,51.8 L108.0,56.5 L112.0,61.1 L116.0,65.6 L120.0,69.9 L124.0,73.9 L128.0,77.7 L132.0,81.1 L136.0,84.2 L140.0,86.8 L144.0,89.1 L148.0,90.8 L152.0,92.1 L156.0,92.8 L160.0,93.1 L164.0,92.8 L168.0,92.0 L172.0,90.8 L176.0,89.0 L180.0,86.8 L184.0,84.1 L188.0,81.0 L192.0,77.6 L196.0,73.8 L200.0,69.8 L204.0,65.5 L208.0,61.0 L212.0,56.4 L216.0,51.7 L220.0,47.0 L224.0,42.3 L228.0,37.7 L232.0,33.3" stroke="#ff3c00" stroke-width="1.8" fill="none" opacity="0.5" style="mix-blend-mode:screen"/><path d="M-4.0,60.0 L0.0,64.5 L4.0,68.8 L8.0,72.9 L12.0,76.8 L16.0,80.3 L20.0,83.5 L24.0,86.2 L28.0,88.5 L32.0,90.4 L36.0,91.8 L40.0,92.7 L44.0,93.1 L48.0,92.9 L52.0,92.3 L56.0,91.1 L60.0,89.5 L64.0,87.4 L68.0,84.8 L72.0,81.8 L76.0,78.5 L80.0,74.8 L84.0,70.8 L88.0,66.6 L92.0,62.1 L96.0,57.5 L100.0,52.9 L104.0,48.2 L108.0,43.5 L112.0,38.9 L116.0,34.4 L120.0,30.1 L124.0,26.1 L128.0,22.3 L132.0,18.9 L136.0,15.8 L140.0,13.2 L144.0,10.9 L148.0,9.2 L152.0,7.9 L156.0,7.2 L160.0,6.9 L164.0,7.2 L168.0,8.0 L172.0,9.2 L176.0,11.0 L180.0,13.2 L184.0,15.9 L188.0,19.0 L192.0,22.4 L196.0,26.2 L200.0,30.2 L204.0,34.5 L208.0,39.0 L212.0,43.6 L216.0,48.3 L220.0,53.0 L224.0,57.7 L228.0,62.3 L232.0,66.7" stroke="#ff3c00" stroke-width="1.8" fill="none" opacity="0.5" style="mix-blend-mode:screen"/><path d="M-4.0,45.7 L0.0,41.3 L4.0,36.9 L8.0,32.7 L12.0,28.7 L16.0,24.9 L20.0,21.4 L24.0,18.3 L28.0,15.6 L32.0,13.3 L36.0,11.4 L40.0,9.9 L44.0,9.0 L48.0,8.5 L52.0,8.6 L56.0,9.1 L60.0,10.1 L64.0,11.6 L68.0,13.5 L72.0,15.9 L76.0,18.7 L80.0,21.9 L84.0,25.4 L88.0,29.2 L92.0,33.2 L96.0,37.4 L100.0,41.8 L104.0,46.3 L108.0,50.9 L112.0,55.4 L116.0,59.8 L120.0,64.2 L124.0,68.4 L128.0,72.3 L132.0,76.0 L136.0,79.4 L140.0,82.4 L144.0,85.0 L148.0,87.3 L152.0,89.0 L156.0,90.3 L160.0,91.2 L164.0,91.5 L168.0,91.4 L172.0,90.7 L176.0,89.6 L180.0,88.0 L184.0,85.9 L188.0,83.4 L192.0,80.5 L196.0,77.3 L200.0,73.7 L204.0,69.9 L208.0,65.8 L212.0,61.5 L216.0,57.1 L220.0,52.5 L224.0,48.0 L228.0,43.5 L232.0,39.1" stroke="#ff3c00" stroke-width="1.8" fill="none" opacity="0.5" style="mix-blend-mode:screen"/><path d="M-4.0,54.3 L0.0,58.7 L4.0,63.1 L8.0,67.3 L12.0,71.3 L16.0,75.1 L20.0,78.6 L24.0,81.7 L28.0,84.4 L32.0,86.7 L36.0,88.6 L40.0,90.1 L44.0,91.0 L48.0,91.5 L52.0,91.4 L56.0,90.9 L60.0,89.9 L64.0,88.4 L68.0,86.5 L72.0,84.1 L76.0,81.3 L80.0,78.1 L84.0,74.6 L88.0,70.8 L92.0,66.8 L96.0,62.6 L100.0,58.2 L104.0,53.7 L108.0,49.1 L112.0,44.6 L116.0,40.2 L120.0,35.8 L124.0,31.6 L128.0,27.7 L132.0,24.0 L136.0,20.6 L140.0,17.6 L144.0,15.0 L148.0,12.7 L152.0,11.0 L156.0,9.7 L160.0,8.8 L164.0,8.5 L168.0,8.6 L172.0,9.3 L176.0,10.4 L180.0,12.0 L184.0,14.1 L188.0,16.6 L192.0,19.5 L196.0,22.7 L200.0,26.3 L204.0,30.1 L208.0,34.2 L212.0,38.5 L216.0,42.9 L220.0,47.5 L224.0,52.0 L228.0,56.5 L232.0,60.9" stroke="#ff3c00" stroke-width="1.8" fill="none" opacity="0.5" style="mix-blend-mode:screen"/><path d="M-4.0,41.1 L0.0,36.4 L4.0,31.9 L8.0,27.6 L12.0,23.5 L16.0,19.8 L20.0,16.4 L24.0,13.4 L28.0,10.9 L32.0,8.8 L36.0,7.2 L40.0,6.2 L44.0,5.6 L48.0,5.6 L52.0,6.1 L56.0,7.1 L60.0,8.7 L64.0,10.7 L68.0,13.2 L72.0,16.2 L76.0,19.5 L80.0,23.2 L84.0,27.3 L88.0,31.6 L92.0,36.1 L96.0,40.8 L100.0,45.6 L104.0,50.4 L108.0,55.3 L112.0,60.1 L116.0,64.7 L120.0,69.2 L124.0,73.5 L128.0,77.4 L132.0,81.1 L136.0,84.4 L140.0,87.2 L144.0,89.7 L148.0,91.6 L152.0,93.1 L156.0,94.0 L160.0,94.4 L164.0,94.3 L168.0,93.7 L172.0,92.5 L176.0,90.8 L180.0,88.7 L184.0,86.1 L188.0,83.0 L192.0,79.6 L196.0,75.8 L200.0,71.7 L204.0,67.3 L208.0,62.7 L212.0,58.0 L216.0,53.2 L220.0,48.4 L224.0,43.5 L228.0,38.8 L232.0,34.1" stroke="#ff3c00" stroke-width="1.8" fill="none" opacity="0.5" style="mix-blend-mode:screen"/><path d="M-4.0,58.9 L0.0,63.6 L4.0,68.1 L8.0,72.4 L12.0,76.5 L16.0,80.2 L20.0,83.6 L24.0,86.6 L28.0,89.1 L32.0,91.2 L36.0,92.8 L40.0,93.8 L44.0,94.4 L48.0,94.4 L52.0,93.9 L56.0,92.9 L60.0,91.3 L64.0,89.3 L68.0,86.8 L72.0,83.8 L76.0,80.5 L80.0,76.8 L84.0,72.7 L88.0,68.4 L92.0,63.9 L96.0,59.2 L100.0,54.4 L104.0,49.6 L108.0,44.7 L112.0,39.9 L116.0,35.3 L120.0,30.8 L124.0,26.5 L128.0,22.6 L132.0,18.9 L136.0,15.6 L140.0,12.8 L144.0,10.3 L148.0,8.4 L152.0,6.9 L156.0,6.0 L160.0,5.6 L164.0,5.7 L168.0,6.3 L172.0,7.5 L176.0,9.2 L180.0,11.3 L184.0,13.9 L188.0,17.0 L192.0,20.4 L196.0,24.2 L200.0,28.3 L204.0,32.7 L208.0,37.3 L212.0,42.0 L216.0,46.8 L220.0,51.6 L224.0,56.5 L228.0,61.2 L232.0,65.9" stroke="#ff3c00" stroke-width="1.8" fill="none" opacity="0.5" style="mix-blend-mode:screen"/><path d="M-4.0,44.2 L0.0,39.7 L4.0,35.3 L8.0,31.1 L12.0,27.1 L16.0,23.4 L20.0,20.0 L24.0,16.9 L28.0,14.3 L32.0,12.1 L36.0,10.3 L40.0,9.0 L44.0,8.2 L48.0,7.9 L52.0,8.1 L56.0,8.8 L60.0,10.0 L64.0,11.6 L68.0,13.7 L72.0,16.3 L76.0,19.2 L80.0,22.6 L84.0,26.2 L88.0,30.1 L92.0,34.3 L96.0,38.7 L100.0,43.2 L104.0,47.7 L108.0,52.3 L112.0,56.9 L116.0,61.4 L120.0,65.8 L124.0,69.9 L128.0,73.8 L132.0,77.5 L136.0,80.8 L140.0,83.8 L144.0,86.3 L148.0,88.4 L152.0,90.1 L156.0,91.2 L160.0,91.9 L164.0,92.1 L168.0,91.8 L172.0,91.0 L176.0,89.7 L180.0,87.9 L184.0,85.7 L188.0,83.0 L192.0,80.0 L196.0,76.5 L200.0,72.8 L204.0,68.8 L208.0,64.6 L212.0,60.2 L216.0,55.7 L220.0,51.1 L224.0,46.5 L228.0,42.0 L232.0,37.5" stroke="#ff3c00" stroke-width="1.8" fill="none" opacity="0.5" style="mix-blend-mode:screen"/><path d="M-4.0,55.8 L0.0,60.3 L4.0,64.7 L8.0,68.9 L12.0,72.9 L16.0,76.6 L20.0,80.0 L24.0,83.1 L28.0,85.7 L32.0,87.9 L36.0,89.7 L40.0,91.0 L44.0,91.8 L48.0,92.1 L52.0,91.9 L56.0,91.2 L60.0,90.0 L64.0,88.4 L68.0,86.3 L72.0,83.7 L76.0,80.8 L80.0,77.4 L84.0,73.8 L88.0,69.9 L92.0,65.7 L96.0,61.3 L100.0,56.8 L104.0,52.3 L108.0,47.7 L112.0,43.1 L116.0,38.6 L120.0,34.2 L124.0,30.1 L128.0,26.2 L132.0,22.5 L136.0,19.2 L140.0,16.2 L144.0,13.7 L148.0,11.6 L152.0,9.9 L156.0,8.8 L160.0,8.1 L164.0,7.9 L168.0,8.2 L172.0,9.0 L176.0,10.3 L180.0,12.1 L184.0,14.3 L188.0,17.0 L192.0,20.0 L196.0,23.5 L200.0,27.2 L204.0,31.2 L208.0,35.4 L212.0,39.8 L216.0,44.3 L220.0,48.9 L224.0,53.5 L228.0,58.0 L232.0,62.5" stroke="#ff3c00" stroke-width="1.8" fill="none" opacity="0.5" style="mix-blend-mode:screen"/><path d="M-4.0,54.4 L0.0,49.5 L4.0,44.6 L8.0,39.8 L12.0,35.1 L16.0,30.5 L20.0,26.2 L24.0,22.2 L28.0,18.5 L32.0,15.2 L36.0,12.3 L40.0,9.9 L44.0,7.9 L48.0,6.5 L52.0,5.5 L56.0,5.1 L60.0,5.2 L64.0,5.9 L68.0,7.1 L72.0,8.7 L76.0,10.9 L80.0,13.6 L84.0,16.7 L88.0,20.2 L92.0,24.0 L96.0,28.1 L100.0,32.6 L104.0,37.2 L108.0,41.9 L112.0,46.8 L116.0,51.7 L120.0,56.6 L124.0,61.4 L128.0,66.1 L132.0,70.6 L136.0,74.8 L140.0,78.7 L144.0,82.3 L148.0,85.5 L152.0,88.3 L156.0,90.6 L160.0,92.5 L164.0,93.8 L168.0,94.6 L172.0,94.9 L176.0,94.7 L180.0,93.9 L184.0,92.6 L188.0,90.8 L192.0,88.4 L196.0,85.7 L200.0,82.5 L204.0,78.9 L208.0,75.0 L212.0,70.8 L216.0,66.3 L220.0,61.6 L224.0,56.8 L228.0,52.0 L232.0,47.1" stroke="#ff3c00" stroke-width="1.8" fill="none" opacity="0.5" style="mix-blend-mode:screen"/><path d="M-4.0,45.6 L0.0,50.5 L4.0,55.4 L8.0,60.2 L12.0,64.9 L16.0,69.5 L20.0,73.8 L24.0,77.8 L28.0,81.5 L32.0,84.8 L36.0,87.7 L40.0,90.1 L44.0,92.1 L48.0,93.5 L52.0,94.5 L56.0,94.9 L60.0,94.8 L64.0,94.1 L68.0,92.9 L72.0,91.3 L76.0,89.1 L80.0,86.4 L84.0,83.3 L88.0,79.8 L92.0,76.0 L96.0,71.9 L100.0,67.4 L104.0,62.8 L108.0,58.1 L112.0,53.2 L116.0,48.3 L120.0,43.4 L124.0,38.6 L128.0,33.9 L132.0,29.4 L136.0,25.2 L140.0,21.3 L144.0,17.7 L148.0,14.5 L152.0,11.7 L156.0,9.4 L160.0,7.5 L164.0,6.2 L168.0,5.4 L172.0,5.1 L176.0,5.3 L180.0,6.1 L184.0,7.4 L188.0,9.2 L192.0,11.6 L196.0,14.3 L200.0,17.5 L204.0,21.1 L208.0,25.0 L212.0,29.2 L216.0,33.7 L220.0,38.4 L224.0,43.2 L228.0,48.0 L232.0,52.9" stroke="#ff3c00" stroke-width="1.8" fill="none" opacity="0.5" style="mix-blend-mode:screen"/><path d="M-4.0,42.2 L0.0,37.7 L4.0,33.2 L8.0,29.0 L12.0,25.1 L16.0,21.4 L20.0,18.0 L24.0,15.1 L28.0,12.6 L32.0,10.5 L36.0,8.9 L40.0,7.7 L44.0,7.1 L48.0,7.0 L52.0,7.4 L56.0,8.3 L60.0,9.7 L64.0,11.6 L68.0,14.0 L72.0,16.7 L76.0,19.9 L80.0,23.4 L84.0,27.3 L88.0,31.4 L92.0,35.7 L96.0,40.3 L100.0,44.9 L104.0,49.6 L108.0,54.3 L112.0,58.9 L116.0,63.5 L120.0,67.8 L124.0,72.0 L128.0,75.9 L132.0,79.5 L136.0,82.7 L140.0,85.6 L144.0,88.0 L148.0,90.0 L152.0,91.5 L156.0,92.5 L160.0,93.0 L164.0,92.9 L168.0,92.4 L172.0,91.4 L176.0,89.9 L180.0,87.8 L184.0,85.4 L188.0,82.5 L192.0,79.2 L196.0,75.6 L200.0,71.7 L204.0,67.5 L208.0,63.1 L212.0,58.6 L216.0,53.9 L220.0,49.2 L224.0,44.6 L228.0,39.9 L232.0,35.4" stroke="#ff3c00" stroke-width="1.8" fill="none" opacity="0.5" style="mix-blend-mode:screen"/><path d="M-4.0,57.8 L0.0,62.3 L4.0,66.8 L8.0,71.0 L12.0,74.9 L16.0,78.6 L20.0,82.0 L24.0,84.9 L28.0,87.4 L32.0,89.5 L36.0,91.1 L40.0,92.3 L44.0,92.9 L48.0,93.0 L52.0,92.6 L56.0,91.7 L60.0,90.3 L64.0,88.4 L68.0,86.0 L72.0,83.3 L76.0,80.1 L80.0,76.6 L84.0,72.7 L88.0,68.6 L92.0,64.3 L96.0,59.7 L100.0,55.1 L104.0,50.4 L108.0,45.7 L112.0,41.1 L116.0,36.5 L120.0,32.2 L124.0,28.0 L128.0,24.1 L132.0,20.5 L136.0,17.3 L140.0,14.4 L144.0,12.0 L148.0,10.0 L152.0,8.5 L156.0,7.5 L160.0,7.0 L164.0,7.1 L168.0,7.6 L172.0,8.6 L176.0,10.1 L180.0,12.2 L184.0,14.6 L188.0,17.5 L192.0,20.8 L196.0,24.4 L200.0,28.3 L204.0,32.5 L208.0,36.9 L212.0,41.4 L216.0,46.1 L220.0,50.8 L224.0,55.4 L228.0,60.1 L232.0,64.6" stroke="#ff3c00" stroke-width="1.8" fill="none" opacity="0.5" style="mix-blend-mode:screen"/><path d="M-4.0,60.7 L0.0,55.9 L4.0,51.0 L8.0,46.1 L12.0,41.2 L16.0,36.5 L20.0,31.9 L24.0,27.5 L28.0,23.4 L32.0,19.6 L36.0,16.2 L40.0,13.1 L44.0,10.5 L48.0,8.4 L52.0,6.8 L56.0,5.7 L60.0,5.1 L64.0,5.1 L68.0,5.6 L72.0,6.6 L76.0,8.1 L80.0,10.2 L84.0,12.7 L88.0,15.6 L92.0,19.0 L96.0,22.7 L100.0,26.8 L104.0,31.1 L108.0,35.7 L112.0,40.5 L116.0,45.3 L120.0,50.2 L124.0,55.1 L128.0,60.0 L132.0,64.7 L136.0,69.2 L140.0,73.5 L144.0,77.6 L148.0,81.3 L152.0,84.6 L156.0,87.6 L160.0,90.0 L164.0,92.0 L168.0,93.5 L172.0,94.5 L176.0,94.9 L180.0,94.9 L184.0,94.2 L188.0,93.1 L192.0,91.4 L196.0,89.3 L200.0,86.6 L204.0,83.6 L208.0,80.1 L212.0,76.3 L216.0,72.1 L220.0,67.7 L224.0,63.1 L228.0,58.3 L232.0,53.5" stroke="#ff3c00" stroke-width="1.8" fill="none" opacity="0.5" style="mix-blend-mode:screen"/><path d="M-4.0,39.3 L0.0,44.1 L4.0,49.0 L8.0,53.9 L12.0,58.8 L16.0,63.5 L20.0,68.1 L24.0,72.5 L28.0,76.6 L32.0,80.4 L36.0,83.8 L40.0,86.9 L44.0,89.5 L48.0,91.6 L52.0,93.2 L56.0,94.3 L60.0,94.9 L64.0,94.9 L68.0,94.4 L72.0,93.4 L76.0,91.9 L80.0,89.8 L84.0,87.3 L88.0,84.4 L92.0,81.0 L96.0,77.3 L100.0,73.2 L104.0,68.9 L108.0,64.3 L112.0,59.5 L116.0,54.7 L120.0,49.8 L124.0,44.9 L128.0,40.0 L132.0,35.3 L136.0,30.8 L140.0,26.5 L144.0,22.4 L148.0,18.7 L152.0,15.4 L156.0,12.4 L160.0,10.0 L164.0,8.0 L168.0,6.5 L172.0,5.5 L176.0,5.1 L180.0,5.1 L184.0,5.8 L188.0,6.9 L192.0,8.6 L196.0,10.7 L200.0,13.4 L204.0,16.4 L208.0,19.9 L212.0,23.7 L216.0,27.9 L220.0,32.3 L224.0,36.9 L228.0,41.7 L232.0,46.5" stroke="#ff3c00" stroke-width="1.8" fill="none" opacity="0.5" style="mix-blend-mode:screen"/><path d="M-4.0,70.9 L0.0,66.5 L4.0,61.8 L8.0,57.0 L12.0,52.1 L16.0,47.2 L20.0,42.4 L24.0,37.6 L28.0,32.9 L32.0,28.5 L36.0,24.4 L40.0,20.5 L44.0,17.0 L48.0,13.9 L52.0,11.2 L56.0,8.9 L60.0,7.2 L64.0,6.0 L68.0,5.3 L72.0,5.1 L76.0,5.5 L80.0,6.4 L84.0,7.8 L88.0,9.7 L92.0,12.1 L96.0,15.0 L100.0,18.3 L104.0,21.9 L108.0,25.9 L112.0,30.2 L116.0,34.7 L120.0,39.4 L124.0,44.2 L128.0,49.1 L132.0,54.0 L136.0,58.8 L140.0,63.6 L144.0,68.2 L148.0,72.5 L152.0,76.6 L156.0,80.4 L160.0,83.8 L164.0,86.9 L168.0,89.4 L172.0,91.5 L176.0,93.1 L180.0,94.2 L184.0,94.8 L188.0,94.8 L192.0,94.3 L196.0,93.3 L200.0,91.8 L204.0,89.7 L208.0,87.2 L212.0,84.2 L216.0,80.8 L220.0,77.1 L224.0,73.0 L228.0,68.7 L232.0,64.1" stroke="#ff3c00" stroke-width="1.8" fill="none" opacity="0.5" style="mix-blend-mode:screen"/><path d="M-4.0,29.1 L0.0,33.5 L4.0,38.2 L8.0,43.0 L12.0,47.9 L16.0,52.8 L20.0,57.6 L24.0,62.4 L28.0,67.1 L32.0,71.5 L36.0,75.6 L40.0,79.5 L44.0,83.0 L48.0,86.1 L52.0,88.8 L56.0,91.1 L60.0,92.8 L64.0,94.0 L68.0,94.7 L72.0,94.9 L76.0,94.5 L80.0,93.6 L84.0,92.2 L88.0,90.3 L92.0,87.9 L96.0,85.0 L100.0,81.7 L104.0,78.1 L108.0,74.1 L112.0,69.8 L116.0,65.3 L120.0,60.6 L124.0,55.8 L128.0,50.9 L132.0,46.0 L136.0,41.2 L140.0,36.4 L144.0,31.8 L148.0,27.5 L152.0,23.4 L156.0,19.6 L160.0,16.2 L164.0,13.1 L168.0,10.6 L172.0,8.5 L176.0,6.9 L180.0,5.8 L184.0,5.2 L188.0,5.2 L192.0,5.7 L196.0,6.7 L200.0,8.2 L204.0,10.3 L208.0,12.8 L212.0,15.8 L216.0,19.2 L220.0,22.9 L224.0,27.0 L228.0,31.3 L232.0,35.9" stroke="#ff3c00" stroke-width="1.8" fill="none" opacity="0.5" style="mix-blend-mode:screen"/><path d="M-4.0,49.9 L0.0,45.2 L4.0,40.6 L8.0,36.1 L12.0,31.7 L16.0,27.6 L20.0,23.8 L24.0,20.2 L28.0,17.0 L32.0,14.2 L36.0,11.9 L40.0,10.0 L44.0,8.5 L48.0,7.6 L52.0,7.2 L56.0,7.2 L60.0,7.8 L64.0,8.9 L68.0,10.5 L72.0,12.6 L76.0,15.1 L80.0,18.0 L84.0,21.3 L88.0,24.9 L92.0,28.8 L96.0,33.0 L100.0,37.4 L104.0,42.0 L108.0,46.6 L112.0,51.3 L116.0,56.0 L120.0,60.6 L124.0,65.0 L128.0,69.3 L132.0,73.4 L136.0,77.2 L140.0,80.6 L144.0,83.7 L148.0,86.4 L152.0,88.6 L156.0,90.4 L160.0,91.7 L164.0,92.6 L168.0,92.9 L172.0,92.7 L176.0,91.9 L180.0,90.7 L184.0,89.0 L188.0,86.9 L192.0,84.3 L196.0,81.2 L200.0,77.9 L204.0,74.1 L208.0,70.1 L212.0,65.9 L216.0,61.4 L220.0,56.9 L224.0,52.2 L228.0,47.5 L232.0,42.9" stroke="#ff3c00" stroke-width="1.8" fill="none" opacity="0.5" style="mix-blend-mode:screen"/><path d="M-4.0,50.1 L0.0,54.8 L4.0,59.4 L8.0,63.9 L12.0,68.3 L16.0,72.4 L20.0,76.2 L24.0,79.8 L28.0,83.0 L32.0,85.8 L36.0,88.1 L40.0,90.0 L44.0,91.5 L48.0,92.4 L52.0,92.8 L56.0,92.8 L60.0,92.2 L64.0,91.1 L68.0,89.5 L72.0,87.4 L76.0,84.9 L80.0,82.0 L84.0,78.7 L88.0,75.1 L92.0,71.2 L96.0,67.0 L100.0,62.6 L104.0,58.0 L108.0,53.4 L112.0,48.7 L116.0,44.0 L120.0,39.4 L124.0,35.0 L128.0,30.7 L132.0,26.6 L136.0,22.8 L140.0,19.4 L144.0,16.3 L148.0,13.6 L152.0,11.4 L156.0,9.6 L160.0,8.3 L164.0,7.4 L168.0,7.1 L172.0,7.3 L176.0,8.1 L180.0,9.3 L184.0,11.0 L188.0,13.1 L192.0,15.7 L196.0,18.8 L200.0,22.1 L204.0,25.9 L208.0,29.9 L212.0,34.1 L216.0,38.6 L220.0,43.1 L224.0,47.8 L228.0,52.5 L232.0,57.1" stroke="#ff3c00" stroke-width="1.8" fill="none" opacity="0.5" style="mix-blend-mode:screen"/><path d="M-4.0,53.1 L0.0,48.2 L4.0,43.3 L8.0,38.5 L12.0,33.8 L16.0,29.3 L20.0,25.1 L24.0,21.2 L28.0,17.6 L32.0,14.4 L36.0,11.6 L40.0,9.3 L44.0,7.4 L48.0,6.1 L52.0,5.3 L56.0,5.0 L60.0,5.3 L64.0,6.1 L68.0,7.4 L72.0,9.2 L76.0,11.5 L80.0,14.3 L84.0,17.5 L88.0,21.1 L92.0,25.0 L96.0,29.3 L100.0,33.7 L104.0,38.4 L108.0,43.2 L112.0,48.1 L116.0,53.0 L120.0,57.9 L124.0,62.7 L128.0,67.3 L132.0,71.7 L136.0,75.9 L140.0,79.8 L144.0,83.3 L148.0,86.4 L152.0,89.0 L156.0,91.2 L160.0,92.9 L164.0,94.1 L168.0,94.8 L172.0,95.0 L176.0,94.6 L180.0,93.6 L184.0,92.2 L188.0,90.2 L192.0,87.8 L196.0,84.9 L200.0,81.6 L204.0,77.9 L208.0,73.9 L212.0,69.6 L216.0,65.1 L220.0,60.4 L224.0,55.6 L228.0,50.7 L232.0,45.8" stroke="#ff3c00" stroke-width="1.8" fill="none" opacity="0.5" style="mix-blend-mode:screen"/><path d="M-4.0,46.9 L0.0,51.8 L4.0,56.7 L8.0,61.5 L12.0,66.2 L16.0,70.7 L20.0,74.9 L24.0,78.8 L28.0,82.4 L32.0,85.6 L36.0,88.4 L40.0,90.7 L44.0,92.6 L48.0,93.9 L52.0,94.7 L56.0,95.0 L60.0,94.7 L64.0,93.9 L68.0,92.6 L72.0,90.8 L76.0,88.5 L80.0,85.7 L84.0,82.5 L88.0,78.9 L92.0,75.0 L96.0,70.7 L100.0,66.3 L104.0,61.6 L108.0,56.8 L112.0,51.9 L116.0,47.0 L120.0,42.1 L124.0,37.3 L128.0,32.7 L132.0,28.3 L136.0,24.1 L140.0,20.2 L144.0,16.7 L148.0,13.6 L152.0,11.0 L156.0,8.8 L160.0,7.1 L164.0,5.9 L168.0,5.2 L172.0,5.0 L176.0,5.4 L180.0,6.4 L184.0,7.8 L188.0,9.8 L192.0,12.2 L196.0,15.1 L200.0,18.4 L204.0,22.1 L208.0,26.1 L212.0,30.4 L216.0,34.9 L220.0,39.6 L224.0,44.4 L228.0,49.3 L232.0,54.2" stroke="#ff3c00" stroke-width="1.8" fill="none" opacity="0.5" style="mix-blend-mode:screen"/><path d="M-4.0,73.9 L0.0,70.0 L4.0,65.9 L8.0,61.6 L12.0,57.1 L16.0,52.6 L20.0,48.1 L24.0,43.5 L28.0,39.1 L32.0,34.8 L36.0,30.6 L40.0,26.7 L44.0,23.1 L48.0,19.8 L52.0,16.8 L56.0,14.3 L60.0,12.1 L64.0,10.5 L68.0,9.3 L72.0,8.5 L76.0,8.3 L80.0,8.6 L84.0,9.4 L88.0,10.6 L92.0,12.3 L96.0,14.5 L100.0,17.1 L104.0,20.1 L108.0,23.4 L112.0,27.1 L116.0,31.0 L120.0,35.2 L124.0,39.5 L128.0,44.0 L132.0,48.5 L136.0,53.1 L140.0,57.6 L144.0,62.0 L148.0,66.3 L152.0,70.4 L156.0,74.2 L160.0,77.8 L164.0,81.0 L168.0,83.8 L172.0,86.3 L176.0,88.3 L180.0,89.9 L184.0,91.0 L188.0,91.6 L192.0,91.7 L196.0,91.3 L200.0,90.4 L204.0,89.0 L208.0,87.2 L212.0,84.9 L216.0,82.2 L220.0,79.1 L224.0,75.7 L228.0,72.0 L232.0,68.0" stroke="#ff3c00" stroke-width="1.8" fill="none" opacity="0.5" style="mix-blend-mode:screen"/><path d="M-4.0,26.1 L0.0,30.0 L4.0,34.1 L8.0,38.4 L12.0,42.9 L16.0,47.4 L20.0,51.9 L24.0,56.5 L28.0,60.9 L32.0,65.2 L36.0,69.4 L40.0,73.3 L44.0,76.9 L48.0,80.2 L52.0,83.2 L56.0,85.7 L60.0,87.9 L64.0,89.5 L68.0,90.7 L72.0,91.5 L76.0,91.7 L80.0,91.4 L84.0,90.6 L88.0,89.4 L92.0,87.7 L96.0,85.5 L100.0,82.9 L104.0,79.9 L108.0,76.6 L112.0,72.9 L116.0,69.0 L120.0,64.8 L124.0,60.5 L128.0,56.0 L132.0,51.5 L136.0,46.9 L140.0,42.4 L144.0,38.0 L148.0,33.7 L152.0,29.6 L156.0,25.8 L160.0,22.2 L164.0,19.0 L168.0,16.2 L172.0,13.7 L176.0,11.7 L180.0,10.1 L184.0,9.0 L188.0,8.4 L192.0,8.3 L196.0,8.7 L200.0,9.6 L204.0,11.0 L208.0,12.8 L212.0,15.1 L216.0,17.8 L220.0,20.9 L224.0,24.3 L228.0,28.0 L232.0,32.0" stroke="#ff3c00" stroke-width="1.8" fill="none" opacity="0.5" style="mix-blend-mode:screen"/><path d="M-4.0,46.0 L0.0,41.5 L4.0,37.0 L8.0,32.7 L12.0,28.7 L16.0,24.8 L20.0,21.3 L24.0,18.1 L28.0,15.3 L32.0,12.9 L36.0,11.0 L40.0,9.5 L44.0,8.5 L48.0,8.0 L52.0,8.0 L56.0,8.5 L60.0,9.5 L64.0,11.0 L68.0,12.9 L72.0,15.3 L76.0,18.1 L80.0,21.3 L84.0,24.8 L88.0,28.6 L92.0,32.7 L96.0,37.0 L100.0,41.4 L104.0,46.0 L108.0,50.6 L112.0,55.1 L116.0,59.7 L120.0,64.1 L124.0,68.3 L128.0,72.3 L132.0,76.1 L136.0,79.5 L140.0,82.6 L144.0,85.3 L148.0,87.6 L152.0,89.4 L156.0,90.8 L160.0,91.6 L164.0,92.0 L168.0,91.9 L172.0,91.3 L176.0,90.2 L180.0,88.6 L184.0,86.5 L188.0,84.0 L192.0,81.1 L196.0,77.9 L200.0,74.3 L204.0,70.4 L208.0,66.2 L212.0,61.9 L216.0,57.4 L220.0,52.9 L224.0,48.3 L228.0,43.7 L232.0,39.2" stroke="#ff3c00" stroke-width="1.8" fill="none" opacity="0.5" style="mix-blend-mode:screen"/><path d="M-4.0,54.0 L0.0,58.5 L4.0,63.0 L8.0,67.3 L12.0,71.3 L16.0,75.2 L20.0,78.7 L24.0,81.9 L28.0,84.7 L32.0,87.1 L36.0,89.0 L40.0,90.5 L44.0,91.5 L48.0,92.0 L52.0,92.0 L56.0,91.5 L60.0,90.5 L64.0,89.0 L68.0,87.1 L72.0,84.7 L76.0,81.9 L80.0,78.7 L84.0,75.2 L88.0,71.4 L92.0,67.3 L96.0,63.0 L100.0,58.6 L104.0,54.0 L108.0,49.4 L112.0,44.9 L116.0,40.3 L120.0,35.9 L124.0,31.7 L128.0,27.7 L132.0,23.9 L136.0,20.5 L140.0,17.4 L144.0,14.7 L148.0,12.4 L152.0,10.6 L156.0,9.2 L160.0,8.4 L164.0,8.0 L168.0,8.1 L172.0,8.7 L176.0,9.8 L180.0,11.4 L184.0,13.5 L188.0,16.0 L192.0,18.9 L196.0,22.1 L200.0,25.7 L204.0,29.6 L208.0,33.8 L212.0,38.1 L216.0,42.6 L220.0,47.1 L224.0,51.7 L228.0,56.3 L232.0,60.8" stroke="#ff3c00" stroke-width="1.8" fill="none" opacity="0.5" style="mix-blend-mode:screen"/><path d="M-4.0,48.1 L0.0,43.4 L4.0,38.8 L8.0,34.3 L12.0,30.0 L16.0,26.0 L20.0,22.2 L24.0,18.8 L28.0,15.7 L32.0,13.0 L36.0,10.8 L40.0,9.1 L44.0,7.8 L48.0,7.1 L52.0,6.8 L56.0,7.1 L60.0,7.9 L64.0,9.2 L68.0,10.9 L72.0,13.2 L76.0,15.8 L80.0,18.9 L84.0,22.4 L88.0,26.2 L92.0,30.2 L96.0,34.5 L100.0,39.0 L104.0,43.7 L108.0,48.3 L112.0,53.1 L116.0,57.7 L120.0,62.3 L124.0,66.8 L128.0,71.0 L132.0,75.0 L136.0,78.7 L140.0,82.0 L144.0,85.0 L148.0,87.6 L152.0,89.7 L156.0,91.3 L160.0,92.4 L164.0,93.0 L168.0,93.2 L172.0,92.8 L176.0,91.9 L180.0,90.4 L184.0,88.6 L188.0,86.2 L192.0,83.4 L196.0,80.2 L200.0,76.7 L204.0,72.8 L208.0,68.7 L212.0,64.3 L216.0,59.8 L220.0,55.2 L224.0,50.5 L228.0,45.8 L232.0,41.1" stroke="#ff3c00" stroke-width="1.8" fill="none" opacity="0.5" style="mix-blend-mode:screen"/><path d="M-4.0,51.9 L0.0,56.6 L4.0,61.2 L8.0,65.7 L12.0,70.0 L16.0,74.0 L20.0,77.8 L24.0,81.2 L28.0,84.3 L32.0,87.0 L36.0,89.2 L40.0,90.9 L44.0,92.2 L48.0,92.9 L52.0,93.2 L56.0,92.9 L60.0,92.1 L64.0,90.8 L68.0,89.1 L72.0,86.8 L76.0,84.2 L80.0,81.1 L84.0,77.6 L88.0,73.8 L92.0,69.8 L96.0,65.5 L100.0,61.0 L104.0,56.3 L108.0,51.7 L112.0,46.9 L116.0,42.3 L120.0,37.7 L124.0,33.2 L128.0,29.0 L132.0,25.0 L136.0,21.3 L140.0,18.0 L144.0,15.0 L148.0,12.4 L152.0,10.3 L156.0,8.7 L160.0,7.6 L164.0,7.0 L168.0,6.8 L172.0,7.2 L176.0,8.1 L180.0,9.6 L184.0,11.4 L188.0,13.8 L192.0,16.6 L196.0,19.8 L200.0,23.3 L204.0,27.2 L208.0,31.3 L212.0,35.7 L216.0,40.2 L220.0,44.8 L224.0,49.5 L228.0,54.2 L232.0,58.9" stroke="#ff3c00" stroke-width="1.8" fill="none" opacity="0.5" style="mix-blend-mode:screen"/><path d="M-4.0,61.5 L0.0,57.0 L4.0,52.5 L8.0,47.9 L12.0,43.3 L16.0,38.8 L20.0,34.4 L24.0,30.2 L28.0,26.3 L32.0,22.6 L36.0,19.3 L40.0,16.3 L44.0,13.7 L48.0,11.6 L52.0,9.9 L56.0,8.7 L60.0,8.0 L64.0,7.8 L68.0,8.1 L72.0,8.9 L76.0,10.2 L80.0,12.0 L84.0,14.2 L88.0,16.8 L92.0,19.9 L96.0,23.3 L100.0,27.0 L104.0,31.0 L108.0,35.2 L112.0,39.6 L116.0,44.1 L120.0,48.7 L124.0,53.3 L128.0,57.9 L132.0,62.3 L136.0,66.7 L140.0,70.8 L144.0,74.7 L148.0,78.2 L152.0,81.5 L156.0,84.4 L160.0,86.8 L164.0,88.9 L168.0,90.4 L172.0,91.5 L176.0,92.1 L180.0,92.2 L184.0,91.7 L188.0,90.8 L192.0,89.4 L196.0,87.5 L200.0,85.2 L204.0,82.5 L208.0,79.3 L212.0,75.8 L216.0,72.1 L220.0,68.0 L224.0,63.7 L228.0,59.3 L232.0,54.8" stroke="#ff3c00" stroke-width="1.8" fill="none" opacity="0.5" style="mix-blend-mode:screen"/><path d="M-4.0,38.5 L0.0,43.0 L4.0,47.5 L8.0,52.1 L12.0,56.7 L16.0,61.2 L20.0,65.6 L24.0,69.8 L28.0,73.7 L32.0,77.4 L36.0,80.7 L40.0,83.7 L44.0,86.3 L48.0,88.4 L52.0,90.1 L56.0,91.3 L60.0,92.0 L64.0,92.2 L68.0,91.9 L72.0,91.1 L76.0,89.8 L80.0,88.0 L84.0,85.8 L88.0,83.2 L92.0,80.1 L96.0,76.7 L100.0,73.0 L104.0,69.0 L108.0,64.8 L112.0,60.4 L116.0,55.9 L120.0,51.3 L124.0,46.7 L128.0,42.1 L132.0,37.7 L136.0,33.3 L140.0,29.2 L144.0,25.3 L148.0,21.8 L152.0,18.5 L156.0,15.6 L160.0,13.2 L164.0,11.1 L168.0,9.6 L172.0,8.5 L176.0,7.9 L180.0,7.8 L184.0,8.3 L188.0,9.2 L192.0,10.6 L196.0,12.5 L200.0,14.8 L204.0,17.5 L208.0,20.7 L212.0,24.2 L216.0,27.9 L220.0,32.0 L224.0,36.3 L228.0,40.7 L232.0,45.2" stroke="#ff3c00" stroke-width="1.8" fill="none" opacity="0.5" style="mix-blend-mode:screen"/><path d="M-4.0,39.4 L0.0,34.9 L4.0,30.6 L8.0,26.6 L12.0,22.8 L16.0,19.3 L20.0,16.2 L24.0,13.6 L28.0,11.3 L32.0,9.5 L36.0,8.2 L40.0,7.4 L44.0,7.1 L48.0,7.3 L52.0,8.1 L56.0,9.3 L60.0,11.0 L64.0,13.2 L68.0,15.8 L72.0,18.8 L76.0,22.2 L80.0,25.9 L84.0,29.9 L88.0,34.2 L92.0,38.6 L96.0,43.2 L100.0,47.9 L104.0,52.5 L108.0,57.2 L112.0,61.8 L116.0,66.2 L120.0,70.4 L124.0,74.4 L128.0,78.1 L132.0,81.5 L136.0,84.5 L140.0,87.0 L144.0,89.2 L148.0,90.8 L152.0,92.0 L156.0,92.7 L160.0,92.9 L164.0,92.5 L168.0,91.7 L172.0,90.3 L176.0,88.5 L180.0,86.2 L184.0,83.5 L188.0,80.4 L192.0,76.9 L196.0,73.1 L200.0,69.0 L204.0,64.7 L208.0,60.3 L212.0,55.6 L216.0,51.0 L220.0,46.3 L224.0,41.7 L228.0,37.1 L232.0,32.7" stroke="#ff3c00" stroke-width="1.8" fill="none" opacity="0.5" style="mix-blend-mode:screen"/><path d="M-4.0,60.6 L0.0,65.1 L4.0,69.4 L8.0,73.4 L12.0,77.2 L16.0,80.7 L20.0,83.8 L24.0,86.4 L28.0,88.7 L32.0,90.5 L36.0,91.8 L40.0,92.6 L44.0,92.9 L48.0,92.7 L52.0,91.9 L56.0,90.7 L60.0,89.0 L64.0,86.8 L68.0,84.2 L72.0,81.2 L76.0,77.8 L80.0,74.1 L84.0,70.1 L88.0,65.8 L92.0,61.4 L96.0,56.8 L100.0,52.1 L104.0,47.5 L108.0,42.8 L112.0,38.2 L116.0,33.8 L120.0,29.6 L124.0,25.6 L128.0,21.9 L132.0,18.5 L136.0,15.5 L140.0,13.0 L144.0,10.8 L148.0,9.2 L152.0,8.0 L156.0,7.3 L160.0,7.1 L164.0,7.5 L168.0,8.3 L172.0,9.7 L176.0,11.5 L180.0,13.8 L184.0,16.5 L188.0,19.6 L192.0,23.1 L196.0,26.9 L200.0,31.0 L204.0,35.3 L208.0,39.7 L212.0,44.4 L216.0,49.0 L220.0,53.7 L224.0,58.3 L228.0,62.9 L232.0,67.3" stroke="#ff3c00" stroke-width="1.8" fill="none" opacity="0.5" style="mix-blend-mode:screen"/><path d="M-4.0,53.4 L0.0,48.7 L4.0,43.9 L8.0,39.3 L12.0,34.7 L16.0,30.4 L20.0,26.3 L24.0,22.4 L28.0,18.9 L32.0,15.8 L36.0,13.0 L40.0,10.7 L44.0,8.9 L48.0,7.6 L52.0,6.8 L56.0,6.5 L60.0,6.7 L64.0,7.4 L68.0,8.6 L72.0,10.4 L76.0,12.6 L80.0,15.2 L84.0,18.3 L88.0,21.7 L92.0,25.5 L96.0,29.6 L100.0,33.9 L104.0,38.4 L108.0,43.0 L112.0,47.8 L116.0,52.5 L120.0,57.2 L124.0,61.9 L128.0,66.4 L132.0,70.7 L136.0,74.7 L140.0,78.5 L144.0,81.9 L148.0,85.0 L152.0,87.6 L156.0,89.8 L160.0,91.5 L164.0,92.7 L168.0,93.4 L172.0,93.5 L176.0,93.2 L180.0,92.3 L184.0,91.0 L188.0,89.1 L192.0,86.8 L196.0,84.1 L200.0,80.9 L204.0,77.4 L208.0,73.5 L212.0,69.4 L216.0,65.0 L220.0,60.5 L224.0,55.8 L228.0,51.1 L232.0,46.3" stroke="#ff3c00" stroke-width="1.8" fill="none" opacity="0.5" style="mix-blend-mode:screen"/><path d="M-4.0,46.6 L0.0,51.3 L4.0,56.1 L8.0,60.7 L12.0,65.3 L16.0,69.6 L20.0,73.7 L24.0,77.6 L28.0,81.1 L32.0,84.2 L36.0,87.0 L40.0,89.3 L44.0,91.1 L48.0,92.4 L52.0,93.2 L56.0,93.5 L60.0,93.3 L64.0,92.6 L68.0,91.4 L72.0,89.6 L76.0,87.4 L80.0,84.8 L84.0,81.7 L88.0,78.3 L92.0,74.5 L96.0,70.4 L100.0,66.1 L104.0,61.6 L108.0,57.0 L112.0,52.2 L116.0,47.5 L120.0,42.8 L124.0,38.1 L128.0,33.6 L132.0,29.3 L136.0,25.3 L140.0,21.5 L144.0,18.1 L148.0,15.0 L152.0,12.4 L156.0,10.2 L160.0,8.5 L164.0,7.3 L168.0,6.6 L172.0,6.5 L176.0,6.8 L180.0,7.7 L184.0,9.0 L188.0,10.9 L192.0,13.2 L196.0,15.9 L200.0,19.1 L204.0,22.6 L208.0,26.5 L212.0,30.6 L216.0,35.0 L220.0,39.5 L224.0,44.2 L228.0,48.9 L232.0,53.7" stroke="#ff3c00" stroke-width="1.8" fill="none" opacity="0.5" style="mix-blend-mode:screen"/><path d="M-4.0,75.1 L0.0,71.0 L4.0,66.6 L8.0,62.1 L12.0,57.4 L16.0,52.6 L20.0,47.8 L24.0,43.0 L28.0,38.3 L32.0,33.7 L36.0,29.3 L40.0,25.2 L44.0,21.4 L48.0,17.9 L52.0,14.8 L56.0,12.1 L60.0,9.9 L64.0,8.1 L68.0,6.9 L72.0,6.1 L76.0,5.9 L80.0,6.2 L84.0,7.0 L88.0,8.4 L92.0,10.2 L96.0,12.5 L100.0,15.3 L104.0,18.5 L108.0,22.0 L112.0,25.9 L116.0,30.1 L120.0,34.5 L124.0,39.1 L128.0,43.8 L132.0,48.6 L136.0,53.4 L140.0,58.2 L144.0,62.9 L148.0,67.4 L152.0,71.7 L156.0,75.8 L160.0,79.5 L164.0,82.9 L168.0,85.9 L172.0,88.5 L176.0,90.6 L180.0,92.3 L184.0,93.4 L188.0,94.0 L192.0,94.1 L196.0,93.6 L200.0,92.7 L204.0,91.2 L208.0,89.2 L212.0,86.8 L216.0,83.9 L220.0,80.7 L224.0,77.0 L228.0,73.1 L232.0,68.8" stroke="#ff3c00" stroke-width="1.8" fill="none" opacity="0.5" style="mix-blend-mode:screen"/><path d="M-4.0,24.9 L0.0,29.0 L4.0,33.4 L8.0,37.9 L12.0,42.6 L16.0,47.4 L20.0,52.2 L24.0,57.0 L28.0,61.7 L32.0,66.3 L36.0,70.7 L40.0,74.8 L44.0,78.6 L48.0,82.1 L52.0,85.2 L56.0,87.9 L60.0,90.1 L64.0,91.9 L68.0,93.1 L72.0,93.9 L76.0,94.1 L80.0,93.8 L84.0,93.0 L88.0,91.6 L92.0,89.8 L96.0,87.5 L100.0,84.7 L104.0,81.5 L108.0,78.0 L112.0,74.1 L116.0,69.9 L120.0,65.5 L124.0,60.9 L128.0,56.2 L132.0,51.4 L136.0,46.6 L140.0,41.8 L144.0,37.1 L148.0,32.6 L152.0,28.3 L156.0,24.2 L160.0,20.5 L164.0,17.1 L168.0,14.1 L172.0,11.5 L176.0,9.4 L180.0,7.7 L184.0,6.6 L188.0,6.0 L192.0,5.9 L196.0,6.4 L200.0,7.3 L204.0,8.8 L208.0,10.8 L212.0,13.2 L216.0,16.1 L220.0,19.3 L224.0,23.0 L228.0,26.9 L232.0,31.2" stroke="#ff3c00" stroke-width="1.8" fill="none" opacity="0.5" style="mix-blend-mode:screen"/><path d="M-4.0,59.2 L0.0,54.4 L4.0,49.7 L8.0,44.9 L12.0,40.2 L16.0,35.6 L20.0,31.2 L24.0,27.0 L28.0,23.0 L32.0,19.4 L36.0,16.2 L40.0,13.4 L44.0,11.0 L48.0,9.0 L52.0,7.6 L56.0,6.7 L60.0,6.2 L64.0,6.3 L68.0,7.0 L72.0,8.1 L76.0,9.7 L80.0,11.9 L84.0,14.4 L88.0,17.4 L92.0,20.8 L96.0,24.5 L100.0,28.6 L104.0,32.9 L108.0,37.4 L112.0,42.0 L116.0,46.8 L120.0,51.5 L124.0,56.3 L128.0,61.0 L132.0,65.5 L136.0,69.9 L140.0,74.0 L144.0,77.9 L148.0,81.4 L152.0,84.5 L156.0,87.3 L160.0,89.6 L164.0,91.4 L168.0,92.7 L172.0,93.5 L176.0,93.8 L180.0,93.5 L184.0,92.8 L188.0,91.5 L192.0,89.8 L196.0,87.5 L200.0,84.9 L204.0,81.8 L208.0,78.3 L212.0,74.5 L216.0,70.4 L220.0,66.0 L224.0,61.5 L228.0,56.8 L232.0,52.0" stroke="#ff3c00" stroke-width="1.8" fill="none" opacity="0.5" style="mix-blend-mode:screen"/><path d="M-4.0,40.8 L0.0,45.6 L4.0,50.3 L8.0,55.1 L12.0,59.8 L16.0,64.4 L20.0,68.8 L24.0,73.0 L28.0,77.0 L32.0,80.6 L36.0,83.8 L40.0,86.6 L44.0,89.0 L48.0,91.0 L52.0,92.4 L56.0,93.3 L60.0,93.8 L64.0,93.7 L68.0,93.0 L72.0,91.9 L76.0,90.3 L80.0,88.1 L84.0,85.6 L88.0,82.6 L92.0,79.2 L96.0,75.5 L100.0,71.4 L104.0,67.1 L108.0,62.6 L112.0,58.0 L116.0,53.2 L120.0,48.5 L124.0,43.7 L128.0,39.0 L132.0,34.5 L136.0,30.1 L140.0,26.0 L144.0,22.1 L148.0,18.6 L152.0,15.5 L156.0,12.7 L160.0,10.4 L164.0,8.6 L168.0,7.3 L172.0,6.5 L176.0,6.2 L180.0,6.5 L184.0,7.2 L188.0,8.5 L192.0,10.2 L196.0,12.5 L200.0,15.1 L204.0,18.2 L208.0,21.7 L212.0,25.5 L216.0,29.6 L220.0,34.0 L224.0,38.5 L228.0,43.2 L232.0,48.0" stroke="#ff3c00" stroke-width="1.8" fill="none" opacity="0.5" style="mix-blend-mode:screen"/><path d="M-4.0,64.4 L0.0,60.1 L4.0,55.6 L8.0,51.1 L12.0,46.6 L16.0,42.2 L20.0,37.8 L24.0,33.6 L28.0,29.6 L32.0,25.8 L36.0,22.3 L40.0,19.1 L44.0,16.3 L48.0,13.9 L52.0,12.0 L56.0,10.4 L60.0,9.4 L64.0,8.9 L68.0,8.8 L72.0,9.2 L76.0,10.1 L80.0,11.5 L84.0,13.4 L88.0,15.7 L92.0,18.4 L96.0,21.4 L100.0,24.8 L104.0,28.6 L108.0,32.5 L112.0,36.7 L116.0,41.0 L120.0,45.5 L124.0,50.0 L128.0,54.5 L132.0,58.9 L136.0,63.3 L140.0,67.4 L144.0,71.4 L148.0,75.1 L152.0,78.5 L156.0,81.6 L160.0,84.3 L164.0,86.6 L168.0,88.5 L172.0,89.9 L176.0,90.8 L180.0,91.2 L184.0,91.1 L188.0,90.6 L192.0,89.6 L196.0,88.1 L200.0,86.1 L204.0,83.7 L208.0,80.9 L212.0,77.7 L216.0,74.3 L220.0,70.5 L224.0,66.4 L228.0,62.2 L232.0,57.9" stroke="#ff3c00" stroke-width="1.8" fill="none" opacity="0.5" style="mix-blend-mode:screen"/><path d="M-4.0,35.6 L0.0,39.9 L4.0,44.4 L8.0,48.9 L12.0,53.4 L16.0,57.8 L20.0,62.2 L24.0,66.4 L28.0,70.4 L32.0,74.2 L36.0,77.7 L40.0,80.9 L44.0,83.7 L48.0,86.1 L52.0,88.0 L56.0,89.6 L60.0,90.6 L64.0,91.1 L68.0,91.2 L72.0,90.8 L76.0,89.9 L80.0,88.5 L84.0,86.6 L88.0,84.3 L92.0,81.6 L96.0,78.6 L100.0,75.2 L104.0,71.4 L108.0,67.5 L112.0,63.3 L116.0,59.0 L120.0,54.5 L124.0,50.0 L128.0,45.5 L132.0,41.1 L136.0,36.7 L140.0,32.6 L144.0,28.6 L148.0,24.9 L152.0,21.5 L156.0,18.4 L160.0,15.7 L164.0,13.4 L168.0,11.5 L172.0,10.1 L176.0,9.2 L180.0,8.8 L184.0,8.9 L188.0,9.4 L192.0,10.4 L196.0,11.9 L200.0,13.9 L204.0,16.3 L208.0,19.1 L212.0,22.3 L216.0,25.7 L220.0,29.5 L224.0,33.6 L228.0,37.8 L232.0,42.1" stroke="#ff3c00" stroke-width="1.8" fill="none" opacity="0.5" style="mix-blend-mode:screen"/><path d="M-4.0,73.5 L0.0,69.3 L4.0,64.8 L8.0,60.1 L12.0,55.3 L16.0,50.5 L20.0,45.6 L24.0,40.8 L28.0,36.1 L32.0,31.6 L36.0,27.3 L40.0,23.2 L44.0,19.5 L48.0,16.2 L52.0,13.2 L56.0,10.7 L60.0,8.7 L64.0,7.1 L68.0,6.1 L72.0,5.5 L76.0,5.6 L80.0,6.1 L84.0,7.2 L88.0,8.8 L92.0,10.8 L96.0,13.4 L100.0,16.3 L104.0,19.7 L108.0,23.5 L112.0,27.5 L116.0,31.8 L120.0,36.4 L124.0,41.1 L128.0,45.9 L132.0,50.7 L136.0,55.6 L140.0,60.4 L144.0,65.0 L148.0,69.5 L152.0,73.8 L156.0,77.7 L160.0,81.4 L164.0,84.6 L168.0,87.5 L172.0,89.9 L176.0,91.8 L180.0,93.2 L184.0,94.1 L188.0,94.5 L192.0,94.3 L196.0,93.7 L200.0,92.5 L204.0,90.8 L208.0,88.6 L212.0,85.9 L216.0,82.8 L220.0,79.4 L224.0,75.6 L228.0,71.4 L232.0,67.0" stroke="#ff3c00" stroke-width="1.8" fill="none" opacity="0.5" style="mix-blend-mode:screen"/><path d="M-4.0,26.5 L0.0,30.7 L4.0,35.2 L8.0,39.9 L12.0,44.7 L16.0,49.5 L20.0,54.4 L24.0,59.2 L28.0,63.9 L32.0,68.4 L36.0,72.7 L40.0,76.8 L44.0,80.5 L48.0,83.8 L52.0,86.8 L56.0,89.3 L60.0,91.3 L64.0,92.9 L68.0,93.9 L72.0,94.5 L76.0,94.4 L80.0,93.9 L84.0,92.8 L88.0,91.2 L92.0,89.2 L96.0,86.6 L100.0,83.7 L104.0,80.3 L108.0,76.5 L112.0,72.5 L116.0,68.2 L120.0,63.6 L124.0,58.9 L128.0,54.1 L132.0,49.3 L136.0,44.4 L140.0,39.6 L144.0,35.0 L148.0,30.5 L152.0,26.2 L156.0,22.3 L160.0,18.6 L164.0,15.4 L168.0,12.5 L172.0,10.1 L176.0,8.2 L180.0,6.8 L184.0,5.9 L188.0,5.5 L192.0,5.7 L196.0,6.3 L200.0,7.5 L204.0,9.2 L208.0,11.4 L212.0,14.1 L216.0,17.2 L220.0,20.6 L224.0,24.4 L228.0,28.6 L232.0,33.0" stroke="#ff3c00" stroke-width="1.8" fill="none" opacity="0.5" style="mix-blend-mode:screen"/><path d="M-4.0,72.7 L0.0,68.4 L4.0,63.8 L8.0,59.1 L12.0,54.3 L16.0,49.5 L20.0,44.6 L24.0,39.8 L28.0,35.1 L32.0,30.6 L36.0,26.4 L40.0,22.4 L44.0,18.7 L48.0,15.5 L52.0,12.6 L56.0,10.2 L60.0,8.2 L64.0,6.8 L68.0,5.8 L72.0,5.4 L76.0,5.6 L80.0,6.2 L84.0,7.4 L88.0,9.1 L92.0,11.2 L96.0,13.9 L100.0,17.0 L104.0,20.4 L108.0,24.2 L112.0,28.3 L116.0,32.7 L120.0,37.3 L124.0,42.1 L128.0,46.9 L132.0,51.8 L136.0,56.6 L140.0,61.4 L144.0,66.0 L148.0,70.5 L152.0,74.6 L156.0,78.6 L160.0,82.1 L164.0,85.3 L168.0,88.1 L172.0,90.4 L176.0,92.2 L180.0,93.5 L184.0,94.3 L188.0,94.6 L192.0,94.3 L196.0,93.5 L200.0,92.2 L204.0,90.4 L208.0,88.1 L212.0,85.4 L216.0,82.2 L220.0,78.7 L224.0,74.8 L228.0,70.6 L232.0,66.1" stroke="#ff3c00" stroke-width="1.8" fill="none" opacity="0.5" style="mix-blend-mode:screen"/><path d="M-4.0,27.3 L0.0,31.6 L4.0,36.2 L8.0,40.9 L12.0,45.7 L16.0,50.5 L20.0,55.4 L24.0,60.2 L28.0,64.9 L32.0,69.4 L36.0,73.6 L40.0,77.6 L44.0,81.3 L48.0,84.5 L52.0,87.4 L56.0,89.8 L60.0,91.8 L64.0,93.2 L68.0,94.2 L72.0,94.6 L76.0,94.4 L80.0,93.8 L84.0,92.6 L88.0,90.9 L92.0,88.8 L96.0,86.1 L100.0,83.0 L104.0,79.6 L108.0,75.8 L112.0,71.7 L116.0,67.3 L120.0,62.7 L124.0,57.9 L128.0,53.1 L132.0,48.2 L136.0,43.4 L140.0,38.6 L144.0,34.0 L148.0,29.5 L152.0,25.4 L156.0,21.4 L160.0,17.9 L164.0,14.7 L168.0,11.9 L172.0,9.6 L176.0,7.8 L180.0,6.5 L184.0,5.7 L188.0,5.4 L192.0,5.7 L196.0,6.5 L200.0,7.8 L204.0,9.6 L208.0,11.9 L212.0,14.6 L216.0,17.8 L220.0,21.3 L224.0,25.2 L228.0,29.4 L232.0,33.9" stroke="#ff3c00" stroke-width="1.8" fill="none" opacity="0.5" style="mix-blend-mode:screen"/><path d="M-4.0,54.3 L0.0,49.6 L4.0,44.9 L8.0,40.3 L12.0,35.8 L16.0,31.5 L20.0,27.4 L24.0,23.6 L28.0,20.1 L32.0,16.9 L36.0,14.2 L40.0,11.8 L44.0,9.9 L48.0,8.5 L52.0,7.6 L56.0,7.2 L60.0,7.3 L64.0,8.0 L68.0,9.1 L72.0,10.7 L76.0,12.8 L80.0,15.3 L84.0,18.2 L88.0,21.5 L92.0,25.2 L96.0,29.1 L100.0,33.3 L104.0,37.7 L108.0,42.3 L112.0,46.9 L116.0,51.6 L120.0,56.2 L124.0,60.8 L128.0,65.3 L132.0,69.5 L136.0,73.6 L140.0,77.3 L144.0,80.8 L148.0,83.8 L152.0,86.5 L156.0,88.7 L160.0,90.5 L164.0,91.7 L168.0,92.5 L172.0,92.8 L176.0,92.6 L180.0,91.8 L184.0,90.6 L188.0,88.8 L192.0,86.7 L196.0,84.0 L200.0,81.0 L204.0,77.6 L208.0,73.9 L212.0,69.8 L216.0,65.6 L220.0,61.1 L224.0,56.6 L228.0,51.9 L232.0,47.3" stroke="#ff3c00" stroke-width="1.8" fill="none" opacity="0.5" style="mix-blend-mode:screen"/><path d="M-4.0,45.7 L0.0,50.4 L4.0,55.1 L8.0,59.7 L12.0,64.2 L16.0,68.5 L20.0,72.6 L24.0,76.4 L28.0,79.9 L32.0,83.1 L36.0,85.8 L40.0,88.2 L44.0,90.1 L48.0,91.5 L52.0,92.4 L56.0,92.8 L60.0,92.7 L64.0,92.0 L68.0,90.9 L72.0,89.3 L76.0,87.2 L80.0,84.7 L84.0,81.8 L88.0,78.5 L92.0,74.8 L96.0,70.9 L100.0,66.7 L104.0,62.3 L108.0,57.7 L112.0,53.1 L116.0,48.4 L120.0,43.8 L124.0,39.2 L128.0,34.7 L132.0,30.5 L136.0,26.4 L140.0,22.7 L144.0,19.2 L148.0,16.2 L152.0,13.5 L156.0,11.3 L160.0,9.5 L164.0,8.3 L168.0,7.5 L172.0,7.2 L176.0,7.4 L180.0,8.2 L184.0,9.4 L188.0,11.2 L192.0,13.3 L196.0,16.0 L200.0,19.0 L204.0,22.4 L208.0,26.1 L212.0,30.2 L216.0,34.4 L220.0,38.9 L224.0,43.4 L228.0,48.1 L232.0,52.7" stroke="#ff3c00" stroke-width="1.8" fill="none" opacity="0.5" style="mix-blend-mode:screen"/><path d="M-4.0,43.0 L0.0,38.3 L4.0,33.8 L8.0,29.4 L12.0,25.3 L16.0,21.5 L20.0,18.0 L24.0,15.0 L28.0,12.3 L32.0,10.1 L36.0,8.3 L40.0,7.1 L44.0,6.4 L48.0,6.1 L52.0,6.5 L56.0,7.3 L60.0,8.6 L64.0,10.5 L68.0,12.8 L72.0,15.5 L76.0,18.7 L80.0,22.2 L84.0,26.1 L88.0,30.2 L92.0,34.6 L96.0,39.2 L100.0,43.9 L104.0,48.7 L108.0,53.5 L112.0,58.2 L116.0,62.8 L120.0,67.3 L124.0,71.6 L128.0,75.7 L132.0,79.4 L136.0,82.8 L140.0,85.7 L144.0,88.3 L148.0,90.4 L152.0,92.0 L156.0,93.1 L160.0,93.7 L164.0,93.8 L168.0,93.4 L172.0,92.4 L176.0,91.0 L180.0,89.0 L184.0,86.6 L188.0,83.7 L192.0,80.5 L196.0,76.8 L200.0,72.9 L204.0,68.7 L208.0,64.3 L212.0,59.6 L216.0,54.9 L220.0,50.1 L224.0,45.4 L228.0,40.6 L232.0,36.0" stroke="#ff3c00" stroke-width="1.8" fill="none" opacity="0.5" style="mix-blend-mode:screen"/><path d="M-4.0,57.0 L0.0,61.7 L4.0,66.2 L8.0,70.6 L12.0,74.7 L16.0,78.5 L20.0,82.0 L24.0,85.0 L28.0,87.7 L32.0,89.9 L36.0,91.7 L40.0,92.9 L44.0,93.6 L48.0,93.9 L52.0,93.5 L56.0,92.7 L60.0,91.4 L64.0,89.5 L68.0,87.2 L72.0,84.5 L76.0,81.3 L80.0,77.8 L84.0,73.9 L88.0,69.8 L92.0,65.4 L96.0,60.8 L100.0,56.1 L104.0,51.3 L108.0,46.5 L112.0,41.8 L116.0,37.2 L120.0,32.7 L124.0,28.4 L128.0,24.3 L132.0,20.6 L136.0,17.2 L140.0,14.3 L144.0,11.7 L148.0,9.6 L152.0,8.0 L156.0,6.9 L160.0,6.3 L164.0,6.2 L168.0,6.6 L172.0,7.6 L176.0,9.0 L180.0,11.0 L184.0,13.4 L188.0,16.3 L192.0,19.5 L196.0,23.2 L200.0,27.1 L204.0,31.3 L208.0,35.7 L212.0,40.4 L216.0,45.1 L220.0,49.9 L224.0,54.6 L228.0,59.4 L232.0,64.0" stroke="#ff3c00" stroke-width="1.8" fill="none" opacity="0.5" style="mix-blend-mode:screen"/><path d="M-4.0,41.9 L0.0,37.5 L4.0,33.3 L8.0,29.3 L12.0,25.5 L16.0,22.0 L20.0,18.9 L24.0,16.1 L28.0,13.7 L32.0,11.8 L36.0,10.3 L40.0,9.3 L44.0,8.8 L48.0,8.7 L52.0,9.2 L56.0,10.2 L60.0,11.6 L64.0,13.5 L68.0,15.8 L72.0,18.5 L76.0,21.6 L80.0,25.0 L84.0,28.8 L88.0,32.8 L92.0,37.0 L96.0,41.3 L100.0,45.8 L104.0,50.3 L108.0,54.8 L112.0,59.2 L116.0,63.6 L120.0,67.7 L124.0,71.7 L128.0,75.4 L132.0,78.8 L136.0,81.9 L140.0,84.5 L144.0,86.8 L148.0,88.6 L152.0,90.0 L156.0,90.9 L160.0,91.3 L164.0,91.2 L168.0,90.6 L172.0,89.5 L176.0,88.0 L180.0,86.0 L184.0,83.6 L188.0,80.8 L192.0,77.6 L196.0,74.1 L200.0,70.2 L204.0,66.2 L208.0,62.0 L212.0,57.6 L216.0,53.1 L220.0,48.6 L224.0,44.1 L228.0,39.7 L232.0,35.4" stroke="#ff3c00" stroke-width="1.8" fill="none" opacity="0.5" style="mix-blend-mode:screen"/><path d="M-4.0,58.1 L0.0,62.5 L4.0,66.7 L8.0,70.7 L12.0,74.5 L16.0,78.0 L20.0,81.1 L24.0,83.9 L28.0,86.3 L32.0,88.2 L36.0,89.7 L40.0,90.7 L44.0,91.2 L48.0,91.3 L52.0,90.8 L56.0,89.8 L60.0,88.4 L64.0,86.5 L68.0,84.2 L72.0,81.5 L76.0,78.4 L80.0,75.0 L84.0,71.2 L88.0,67.2 L92.0,63.0 L96.0,58.7 L100.0,54.2 L104.0,49.7 L108.0,45.2 L112.0,40.8 L116.0,36.4 L120.0,32.3 L124.0,28.3 L128.0,24.6 L132.0,21.2 L136.0,18.1 L140.0,15.5 L144.0,13.2 L148.0,11.4 L152.0,10.0 L156.0,9.1 L160.0,8.7 L164.0,8.8 L168.0,9.4 L172.0,10.5 L176.0,12.0 L180.0,14.0 L184.0,16.4 L188.0,19.2 L192.0,22.4 L196.0,25.9 L200.0,29.8 L204.0,33.8 L208.0,38.0 L212.0,42.4 L216.0,46.9 L220.0,51.4 L224.0,55.9 L228.0,60.3 L232.0,64.6" stroke="#ff3c00" stroke-width="1.8" fill="none" opacity="0.5" style="mix-blend-mode:screen"/><path d="M-4.0,47.3 L0.0,42.7 L4.0,38.3 L8.0,34.0 L12.0,29.9 L16.0,26.0 L20.0,22.4 L24.0,19.2 L28.0,16.3 L32.0,13.8 L36.0,11.8 L40.0,10.2 L44.0,9.0 L48.0,8.4 L52.0,8.3 L56.0,8.6 L60.0,9.5 L64.0,10.8 L68.0,12.6 L72.0,14.9 L76.0,17.6 L80.0,20.6 L84.0,24.0 L88.0,27.7 L92.0,31.7 L96.0,35.9 L100.0,40.3 L104.0,44.8 L108.0,49.3 L112.0,53.9 L116.0,58.4 L120.0,62.8 L124.0,67.1 L128.0,71.1 L132.0,74.9 L136.0,78.4 L140.0,81.6 L144.0,84.4 L148.0,86.7 L152.0,88.7 L156.0,90.2 L160.0,91.2 L164.0,91.7 L168.0,91.7 L172.0,91.2 L176.0,90.2 L180.0,88.8 L184.0,86.8 L188.0,84.5 L192.0,81.7 L196.0,78.6 L200.0,75.1 L204.0,71.3 L208.0,67.2 L212.0,63.0 L216.0,58.6 L220.0,54.1 L224.0,49.5 L228.0,45.0 L232.0,40.5" stroke="#ff3c00" stroke-width="1.8" fill="none" opacity="0.5" style="mix-blend-mode:screen"/><path d="M-4.0,52.7 L0.0,57.3 L4.0,61.7 L8.0,66.0 L12.0,70.1 L16.0,74.0 L20.0,77.6 L24.0,80.8 L28.0,83.7 L32.0,86.2 L36.0,88.2 L40.0,89.8 L44.0,91.0 L48.0,91.6 L52.0,91.7 L56.0,91.4 L60.0,90.5 L64.0,89.2 L68.0,87.4 L72.0,85.1 L76.0,82.4 L80.0,79.4 L84.0,76.0 L88.0,72.3 L92.0,68.3 L96.0,64.1 L100.0,59.7 L104.0,55.2 L108.0,50.7 L112.0,46.1 L116.0,41.6 L120.0,37.2 L124.0,32.9 L128.0,28.9 L132.0,25.1 L136.0,21.6 L140.0,18.4 L144.0,15.6 L148.0,13.3 L152.0,11.3 L156.0,9.8 L160.0,8.8 L164.0,8.3 L168.0,8.3 L172.0,8.8 L176.0,9.8 L180.0,11.2 L184.0,13.2 L188.0,15.5 L192.0,18.3 L196.0,21.4 L200.0,24.9 L204.0,28.7 L208.0,32.8 L212.0,37.0 L216.0,41.4 L220.0,45.9 L224.0,50.5 L228.0,55.0 L232.0,59.5" stroke="#ff3c00" stroke-width="1.8" fill="none" opacity="0.5" style="mix-blend-mode:screen"/><path d="M-4.0,52.2 L0.0,47.7 L4.0,43.2 L8.0,38.8 L12.0,34.5 L16.0,30.5 L20.0,26.6 L24.0,23.0 L28.0,19.8 L32.0,16.9 L36.0,14.4 L40.0,12.4 L44.0,10.8 L48.0,9.6 L52.0,8.9 L56.0,8.8 L60.0,9.1 L64.0,9.9 L68.0,11.2 L72.0,12.9 L76.0,15.1 L80.0,17.7 L84.0,20.7 L88.0,24.0 L92.0,27.7 L96.0,31.6 L100.0,35.7 L104.0,40.0 L108.0,44.5 L112.0,49.0 L116.0,53.5 L120.0,57.9 L124.0,62.3 L128.0,66.5 L132.0,70.5 L136.0,74.3 L140.0,77.8 L144.0,81.0 L148.0,83.7 L152.0,86.1 L156.0,88.1 L160.0,89.6 L164.0,90.6 L168.0,91.1 L172.0,91.2 L176.0,90.8 L180.0,89.8 L184.0,88.4 L188.0,86.6 L192.0,84.3 L196.0,81.6 L200.0,78.5 L204.0,75.1 L208.0,71.4 L212.0,67.4 L216.0,63.2 L220.0,58.9 L224.0,54.4 L228.0,49.9 L232.0,45.4" stroke="#ff3c00" stroke-width="1.8" fill="none" opacity="0.5" style="mix-blend-mode:screen"/><path d="M-4.0,47.8 L0.0,52.3 L4.0,56.8 L8.0,61.2 L12.0,65.5 L16.0,69.5 L20.0,73.4 L24.0,77.0 L28.0,80.2 L32.0,83.1 L36.0,85.6 L40.0,87.6 L44.0,89.2 L48.0,90.4 L52.0,91.1 L56.0,91.2 L60.0,90.9 L64.0,90.1 L68.0,88.8 L72.0,87.1 L76.0,84.9 L80.0,82.3 L84.0,79.3 L88.0,76.0 L92.0,72.3 L96.0,68.4 L100.0,64.3 L104.0,60.0 L108.0,55.5 L112.0,51.0 L116.0,46.5 L120.0,42.1 L124.0,37.7 L128.0,33.5 L132.0,29.5 L136.0,25.7 L140.0,22.2 L144.0,19.0 L148.0,16.3 L152.0,13.9 L156.0,11.9 L160.0,10.4 L164.0,9.4 L168.0,8.9 L172.0,8.8 L176.0,9.2 L180.0,10.2 L184.0,11.6 L188.0,13.4 L192.0,15.7 L196.0,18.4 L200.0,21.5 L204.0,24.9 L208.0,28.6 L212.0,32.6 L216.0,36.8 L220.0,41.1 L224.0,45.6 L228.0,50.1 L232.0,54.6" stroke="#ff3c00" stroke-width="1.8" fill="none" opacity="0.5" style="mix-blend-mode:screen"/><path d="M-4.0,39.5 L0.0,35.2 L4.0,31.0 L8.0,27.1 L12.0,23.4 L16.0,20.1 L20.0,17.1 L24.0,14.5 L28.0,12.3 L32.0,10.6 L36.0,9.4 L40.0,8.6 L44.0,8.3 L48.0,8.5 L52.0,9.3 L56.0,10.5 L60.0,12.1 L64.0,14.3 L68.0,16.8 L72.0,19.8 L76.0,23.1 L80.0,26.7 L84.0,30.6 L88.0,34.8 L92.0,39.1 L96.0,43.5 L100.0,48.1 L104.0,52.6 L108.0,57.1 L112.0,61.6 L116.0,65.9 L120.0,70.0 L124.0,73.8 L128.0,77.4 L132.0,80.7 L136.0,83.6 L140.0,86.1 L144.0,88.1 L148.0,89.7 L152.0,90.9 L156.0,91.5 L160.0,91.7 L164.0,91.3 L168.0,90.5 L172.0,89.2 L176.0,87.4 L180.0,85.1 L184.0,82.5 L188.0,79.4 L192.0,76.0 L196.0,72.3 L200.0,68.4 L204.0,64.2 L208.0,59.8 L212.0,55.3 L216.0,50.8 L220.0,46.3 L224.0,41.8 L228.0,37.3 L232.0,33.1" stroke="#ff3c00" stroke-width="1.8" fill="none" opacity="0.5" style="mix-blend-mode:screen"/><path d="M-4.0,60.5 L0.0,64.8 L4.0,69.0 L8.0,72.9 L12.0,76.6 L16.0,79.9 L20.0,82.9 L24.0,85.5 L28.0,87.7 L32.0,89.4 L36.0,90.6 L40.0,91.4 L44.0,91.7 L48.0,91.5 L52.0,90.7 L56.0,89.5 L60.0,87.9 L64.0,85.7 L68.0,83.2 L72.0,80.2 L76.0,76.9 L80.0,73.3 L84.0,69.4 L88.0,65.2 L92.0,60.9 L96.0,56.5 L100.0,51.9 L104.0,47.4 L108.0,42.9 L112.0,38.4 L116.0,34.1 L120.0,30.0 L124.0,26.2 L128.0,22.6 L132.0,19.3 L136.0,16.4 L140.0,13.9 L144.0,11.9 L148.0,10.3 L152.0,9.1 L156.0,8.5 L160.0,8.3 L164.0,8.7 L168.0,9.5 L172.0,10.8 L176.0,12.6 L180.0,14.9 L184.0,17.5 L188.0,20.6 L192.0,24.0 L196.0,27.7 L200.0,31.6 L204.0,35.8 L208.0,40.2 L212.0,44.7 L216.0,49.2 L220.0,53.7 L224.0,58.2 L228.0,62.7 L232.0,66.9" stroke="#ff3c00" stroke-width="1.8" fill="none" opacity="0.5" style="mix-blend-mode:screen"/><path d="M-4.0,43.1 L0.0,38.6 L4.0,34.1 L8.0,29.9 L12.0,25.9 L16.0,22.2 L20.0,18.9 L24.0,15.9 L28.0,13.3 L32.0,11.2 L36.0,9.5 L40.0,8.3 L44.0,7.6 L48.0,7.4 L52.0,7.7 L56.0,8.5 L60.0,9.8 L64.0,11.6 L68.0,13.8 L72.0,16.5 L76.0,19.6 L80.0,23.0 L84.0,26.8 L88.0,30.9 L92.0,35.1 L96.0,39.6 L100.0,44.1 L104.0,48.8 L108.0,53.4 L112.0,58.0 L116.0,62.6 L120.0,66.9 L124.0,71.1 L128.0,75.0 L132.0,78.6 L136.0,81.9 L140.0,84.8 L144.0,87.3 L148.0,89.3 L152.0,90.9 L156.0,92.0 L160.0,92.5 L164.0,92.6 L168.0,92.2 L172.0,91.2 L176.0,89.8 L180.0,87.9 L184.0,85.5 L188.0,82.7 L192.0,79.6 L196.0,76.0 L200.0,72.2 L204.0,68.1 L208.0,63.8 L212.0,59.3 L216.0,54.7 L220.0,50.1 L224.0,45.4 L228.0,40.8 L232.0,36.3" stroke="#ff3c00" stroke-width="1.8" fill="none" opacity="0.5" style="mix-blend-mode:screen"/><path d="M-4.0,56.9 L0.0,61.4 L4.0,65.9 L8.0,70.1 L12.0,74.1 L16.0,77.8 L20.0,81.1 L24.0,84.1 L28.0,86.7 L32.0,88.8 L36.0,90.5 L40.0,91.7 L44.0,92.4 L48.0,92.6 L52.0,92.3 L56.0,91.5 L60.0,90.2 L64.0,88.4 L68.0,86.2 L72.0,83.5 L76.0,80.4 L80.0,77.0 L84.0,73.2 L88.0,69.1 L92.0,64.9 L96.0,60.4 L100.0,55.9 L104.0,51.2 L108.0,46.6 L112.0,42.0 L116.0,37.4 L120.0,33.1 L124.0,28.9 L128.0,25.0 L132.0,21.4 L136.0,18.1 L140.0,15.2 L144.0,12.7 L148.0,10.7 L152.0,9.1 L156.0,8.0 L160.0,7.5 L164.0,7.4 L168.0,7.8 L172.0,8.8 L176.0,10.2 L180.0,12.1 L184.0,14.5 L188.0,17.3 L192.0,20.4 L196.0,24.0 L200.0,27.8 L204.0,31.9 L208.0,36.2 L212.0,40.7 L216.0,45.3 L220.0,49.9 L224.0,54.6 L228.0,59.2 L232.0,63.7" stroke="#ff3c00" stroke-width="1.8" fill="none" opacity="0.5" style="mix-blend-mode:screen"/><path d="M-4.0,39.7 L0.0,35.0 L4.0,30.5 L8.0,26.2 L12.0,22.2 L16.0,18.5 L20.0,15.2 L24.0,12.3 L28.0,9.8 L32.0,7.9 L36.0,6.4 L40.0,5.5 L44.0,5.1 L48.0,5.2 L52.0,5.9 L56.0,7.1 L60.0,8.8 L64.0,11.0 L68.0,13.6 L72.0,16.7 L76.0,20.2 L80.0,24.0 L84.0,28.2 L88.0,32.6 L92.0,37.2 L96.0,42.0 L100.0,46.9 L104.0,51.8 L108.0,56.7 L112.0,61.5 L116.0,66.2 L120.0,70.6 L124.0,74.9 L128.0,78.8 L132.0,82.4 L136.0,85.6 L140.0,88.4 L144.0,90.7 L148.0,92.5 L152.0,93.9 L156.0,94.7 L160.0,94.9 L164.0,94.7 L168.0,93.9 L172.0,92.6 L176.0,90.7 L180.0,88.4 L184.0,85.6 L188.0,82.5 L192.0,78.9 L196.0,74.9 L200.0,70.7 L204.0,66.2 L208.0,61.6 L212.0,56.8 L216.0,51.9 L220.0,47.0 L224.0,42.1 L228.0,37.3 L232.0,32.7" stroke="#ff3c00" stroke-width="1.8" fill="none" opacity="0.5" style="mix-blend-mode:screen"/><path d="M-4.0,60.3 L0.0,65.0 L4.0,69.5 L8.0,73.8 L12.0,77.8 L16.0,81.5 L20.0,84.8 L24.0,87.7 L28.0,90.2 L32.0,92.1 L36.0,93.6 L40.0,94.5 L44.0,94.9 L48.0,94.8 L52.0,94.1 L56.0,92.9 L60.0,91.2 L64.0,89.0 L68.0,86.4 L72.0,83.3 L76.0,79.8 L80.0,76.0 L84.0,71.8 L88.0,67.4 L92.0,62.8 L96.0,58.0 L100.0,53.1 L104.0,48.2 L108.0,43.3 L112.0,38.5 L116.0,33.8 L120.0,29.4 L124.0,25.1 L128.0,21.2 L132.0,17.6 L136.0,14.4 L140.0,11.6 L144.0,9.3 L148.0,7.5 L152.0,6.1 L156.0,5.3 L160.0,5.1 L164.0,5.3 L168.0,6.1 L172.0,7.4 L176.0,9.3 L180.0,11.6 L184.0,14.4 L188.0,17.5 L192.0,21.1 L196.0,25.1 L200.0,29.3 L204.0,33.8 L208.0,38.4 L212.0,43.2 L216.0,48.1 L220.0,53.0 L224.0,57.9 L228.0,62.7 L232.0,67.3" stroke="#ff3c00" stroke-width="1.8" fill="none" opacity="0.5" style="mix-blend-mode:screen"/><path d="M-4.0,62.3 L0.0,57.9 L4.0,53.4 L8.0,48.8 L12.0,44.3 L16.0,39.8 L20.0,35.5 L24.0,31.3 L28.0,27.4 L32.0,23.7 L36.0,20.3 L40.0,17.3 L44.0,14.7 L48.0,12.5 L52.0,10.7 L56.0,9.4 L60.0,8.6 L64.0,8.3 L68.0,8.5 L72.0,9.2 L76.0,10.4 L80.0,12.0 L84.0,14.1 L88.0,16.7 L92.0,19.6 L96.0,22.9 L100.0,26.5 L104.0,30.4 L108.0,34.5 L112.0,38.8 L116.0,43.2 L120.0,47.8 L124.0,52.3 L128.0,56.8 L132.0,61.3 L136.0,65.6 L140.0,69.7 L144.0,73.6 L148.0,77.2 L152.0,80.5 L156.0,83.4 L160.0,85.9 L164.0,88.0 L168.0,89.6 L172.0,90.8 L176.0,91.5 L180.0,91.7 L184.0,91.3 L188.0,90.5 L192.0,89.2 L196.0,87.5 L200.0,85.3 L204.0,82.7 L208.0,79.6 L212.0,76.3 L216.0,72.6 L220.0,68.6 L224.0,64.5 L228.0,60.1 L232.0,55.6" stroke="#ff3c00" stroke-width="1.8" fill="none" opacity="0.5" style="mix-blend-mode:screen"/><path d="M-4.0,37.7 L0.0,42.1 L4.0,46.6 L8.0,51.2 L12.0,55.7 L16.0,60.2 L20.0,64.5 L24.0,68.7 L28.0,72.6 L32.0,76.3 L36.0,79.7 L40.0,82.7 L44.0,85.3 L48.0,87.5 L52.0,89.3 L56.0,90.6 L60.0,91.4 L64.0,91.7 L68.0,91.5 L72.0,90.8 L76.0,89.6 L80.0,88.0 L84.0,85.9 L88.0,83.3 L92.0,80.4 L96.0,77.1 L100.0,73.5 L104.0,69.6 L108.0,65.5 L112.0,61.2 L116.0,56.8 L120.0,52.2 L124.0,47.7 L128.0,43.2 L132.0,38.7 L136.0,34.4 L140.0,30.3 L144.0,26.4 L148.0,22.8 L152.0,19.5 L156.0,16.6 L160.0,14.1 L164.0,12.0 L168.0,10.4 L172.0,9.2 L176.0,8.5 L180.0,8.3 L184.0,8.7 L188.0,9.5 L192.0,10.8 L196.0,12.5 L200.0,14.7 L204.0,17.3 L208.0,20.4 L212.0,23.7 L216.0,27.4 L220.0,31.4 L224.0,35.5 L228.0,39.9 L232.0,44.4" stroke="#ff3c00" stroke-width="1.8" fill="none" opacity="0.5" style="mix-blend-mode:screen"/><path d="M-4.0,48.9 L0.0,44.2 L4.0,39.7 L8.0,35.2 L12.0,31.0 L16.0,26.9 L20.0,23.2 L24.0,19.7 L28.0,16.6 L32.0,14.0 L36.0,11.7 L40.0,9.9 L44.0,8.6 L48.0,7.8 L52.0,7.4 L56.0,7.6 L60.0,8.3 L64.0,9.5 L68.0,11.2 L72.0,13.3 L76.0,15.9 L80.0,18.9 L84.0,22.2 L88.0,25.9 L92.0,29.9 L96.0,34.1 L100.0,38.5 L104.0,43.0 L108.0,47.6 L112.0,52.3 L116.0,56.9 L120.0,61.5 L124.0,65.9 L128.0,70.1 L132.0,74.0 L136.0,77.7 L140.0,81.1 L144.0,84.1 L148.0,86.7 L152.0,88.8 L156.0,90.5 L160.0,91.7 L164.0,92.4 L168.0,92.6 L172.0,92.2 L176.0,91.4 L180.0,90.1 L184.0,88.3 L188.0,86.1 L192.0,83.4 L196.0,80.3 L200.0,76.9 L204.0,73.1 L208.0,69.1 L212.0,64.8 L216.0,60.4 L220.0,55.8 L224.0,51.2 L228.0,46.5 L232.0,41.9" stroke="#ff3c00" stroke-width="1.8" fill="none" opacity="0.5" style="mix-blend-mode:screen"/><path d="M-4.0,51.1 L0.0,55.8 L4.0,60.3 L8.0,64.8 L12.0,69.0 L16.0,73.1 L20.0,76.8 L24.0,80.3 L28.0,83.4 L32.0,86.0 L36.0,88.3 L40.0,90.1 L44.0,91.4 L48.0,92.2 L52.0,92.6 L56.0,92.4 L60.0,91.7 L64.0,90.5 L68.0,88.8 L72.0,86.7 L76.0,84.1 L80.0,81.1 L84.0,77.8 L88.0,74.1 L92.0,70.1 L96.0,65.9 L100.0,61.5 L104.0,57.0 L108.0,52.4 L112.0,47.7 L116.0,43.1 L120.0,38.5 L124.0,34.1 L128.0,29.9 L132.0,26.0 L136.0,22.3 L140.0,18.9 L144.0,15.9 L148.0,13.3 L152.0,11.2 L156.0,9.5 L160.0,8.3 L164.0,7.6 L168.0,7.4 L172.0,7.8 L176.0,8.6 L180.0,9.9 L184.0,11.7 L188.0,13.9 L192.0,16.6 L196.0,19.7 L200.0,23.1 L204.0,26.9 L208.0,30.9 L212.0,35.2 L216.0,39.6 L220.0,44.2 L224.0,48.8 L228.0,53.5 L232.0,58.1" stroke="#ff3c00" stroke-width="1.8" fill="none" opacity="0.5" style="mix-blend-mode:screen"/></g><rect x="0" y="1" width="228" height="3" fill="#ff6000" opacity="0.8"/><rect x="0" y="2" width="228" height="1.5" fill="#ffff70"/><rect x="0" y="95.8" width="228" height="3" fill="#ff6000" opacity="0.8"/><rect x="0" y="96.6" width="228" height="1.5" fill="#ffff70"/></svg></div></body></html>
